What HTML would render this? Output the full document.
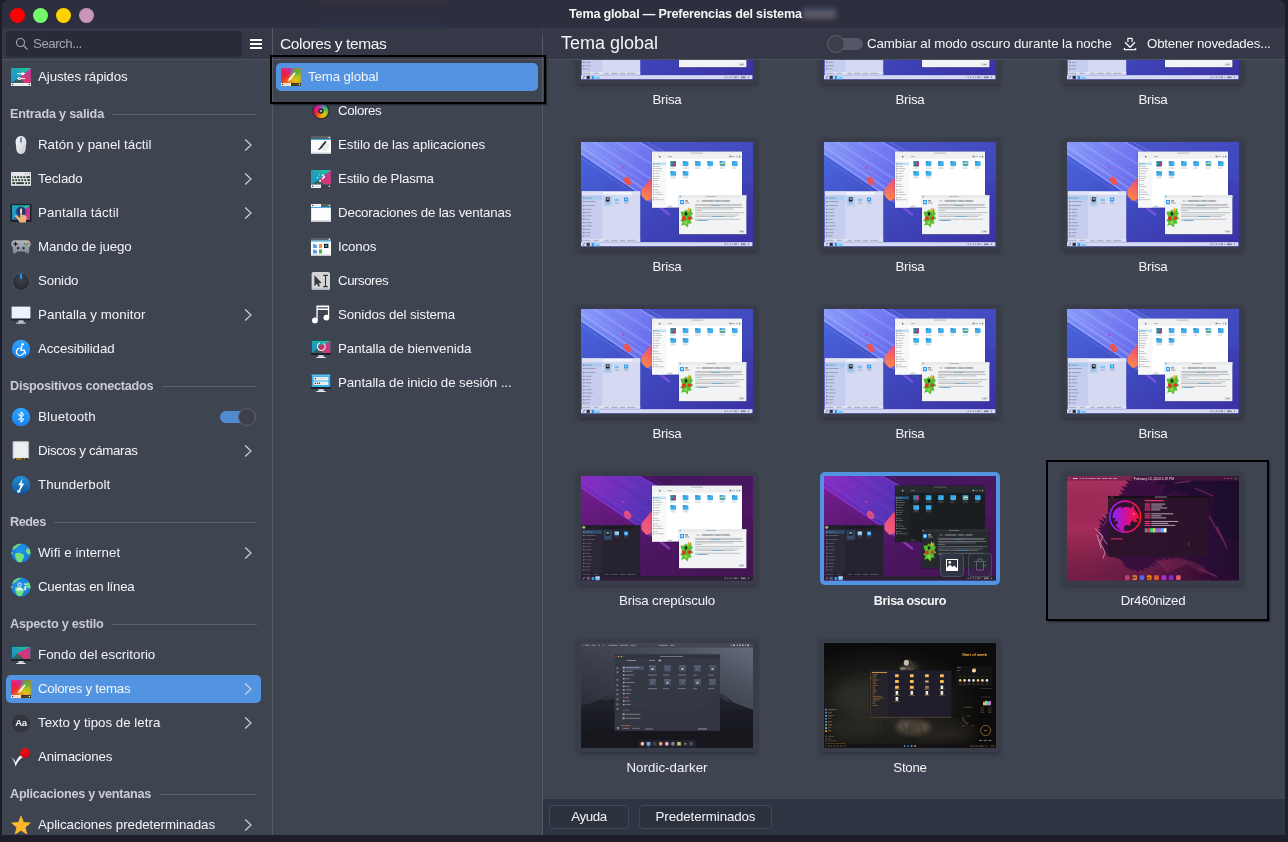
<!DOCTYPE html>
<html lang="es"><head><meta charset="utf-8"><title>Tema global — Preferencias del sistema</title>
<style>
*{box-sizing:border-box;margin:0;padding:0}
html,body{width:1288px;height:842px;overflow:hidden;background:#1e1d2a;font-family:"Liberation Sans",sans-serif;color:#f3f4f6;font-size:13.3px}
i,b{font-style:normal;font-weight:normal;display:block}
.t{white-space:nowrap;display:inline-block}
#desk{position:absolute;left:0;top:0;width:1288px;height:842px;background:#1e1d2a}
#win{will-change:transform;position:absolute;left:2px;top:0;width:1283px;height:835px;background:#3f4451;border-radius:8px 8px 0 0;overflow:hidden}
#wi{position:absolute;left:-2px;top:0;width:1285px;height:835px}
#tb{position:absolute;left:0;top:0;width:1285px;height:27px;background:#2d2f3e;z-index:3;box-shadow:0 1px 0 #2f3240}
.wb{position:absolute;top:8px;margin-left:2px;width:15px;height:15px;border-radius:50%}
#title{position:absolute;left:569px;top:7px;font-weight:bold;font-size:12.6px;color:#f5f5f7}
#side{position:absolute;left:0;top:28px;width:272px;height:807px;background:#3f4451}
#side:before,#mid:before,#mhdr{content:"";position:absolute;left:0;top:0;height:31px;background:#353846}
#side:before,#mid:before{width:100%}
#search{position:absolute;left:6px;top:3px;width:236px;height:26px;background:#282c38;border-radius:4px}
#search svg{position:absolute;left:9px;top:6px}
#stext{position:absolute;left:27px;top:5px;color:#a4a7b1}
#burger{position:absolute;left:250px;top:11px;width:12px}
#burger i{height:2px;background:#fff;margin-bottom:2px}
.hsep{position:absolute;height:1px;background:#50545f}
.si,.mi{position:absolute;left:6px;width:255px;height:28px;margin-top:3px;border-radius:5px}
.si.sel,.mi.sel{background:#5294e2}
.si .ic{position:absolute;left:4px;top:3px;width:22px;height:22px}
.si .t{position:absolute;left:32px;top:6px}
.chev{position:absolute;left:238px;top:7px}
.sh{position:absolute;left:0;width:272px;height:34px}
.sh .t{position:absolute;left:10px;top:12.5px;font-weight:bold;font-size:12.7px;color:#c9ccd3}
.sh i{position:absolute;top:20px;height:1px;right:15px;background:#5d616c}
.sw{position:absolute;width:36px;height:18px}
.sw:before{content:"";position:absolute;left:0;top:3px;width:36px;height:12px;border-radius:6px;background:#545866}
.sw b{position:absolute;top:0;width:18px;height:18px;border-radius:50%;background:#3c404d;border:1px solid #5b5f6d}
.sw.off b{left:0}
.sw.on b{right:0}
.sw.on:before{background:#4f8bd3}
.si .sw{left:214px;top:5px}
#mid{position:absolute;left:273px;top:28px;width:269px;height:807px;background:#3f4451}
.mh .t{position:absolute;left:7px;top:7px;font-size:15.5px}
.mi{left:3px;width:262px}
.mi .ic{position:absolute;left:34px;top:3px;width:22px;height:22px}
.mi .t{position:absolute;left:62px;top:6px}
.mi.sel .ic{left:4px}
.mi.sel .t{left:32px}
#vs1,#vs2{position:absolute;width:1px;background:#565a66}
#vs1{left:272px;top:28px;height:807px}
#vs2{left:542px;top:36px;height:799px}
#main{position:absolute;left:543px;top:28px;width:742px;height:807px;background:#3f4451;overflow:hidden}
#mhdr{width:742px}
#h1{position:absolute;left:18px;top:5px;font-size:18px}
#nsw{left:284px;top:7px}
#nlabel{position:absolute;left:324px;top:8px}
#dl{position:absolute;left:580px;top:9px}
#getnew{position:absolute;left:604px;top:8px}
#grid{position:absolute;left:0;top:32px;width:742px;height:739px;overflow:hidden}
.card{position:absolute;width:180px;height:112.6px;border-radius:3px;background:#393d4a;padding:4px;box-shadow:0 2px 5px rgba(0,0,0,.28)}
.card svg{display:block}
.card.csel{background:#5294e2;box-shadow:none;border-radius:5px}
.lbl{position:absolute;width:244px;height:18px;text-align:center;line-height:18px}
.lbl.b{font-weight:bold;font-size:12.6px}
#foot{position:absolute;left:0;top:771px;width:742px;height:36px;background:#2f3442}
.btn{position:absolute;top:6px;height:24px;border:1px solid #414758;border-radius:4px;background:#2c313e;text-align:center;line-height:22px}
.anno{position:absolute;border:2px solid #000}
.card{position:absolute}
.ov{position:absolute;top:81px;width:24px;height:24px;border-radius:4px;background:#2f3442;border:1px solid #4a4f60}
.ov svg{position:absolute;left:5px;top:5px}
.ov.dis{background:rgba(47,52,66,.45);border-color:rgba(120,125,145,.35)}
.ov.dis svg{opacity:.35;top:4px}
.smg{position:absolute;filter:blur(2.5px);opacity:.55}
#tb{overflow:hidden}
.anno{box-shadow:1.5px 1.5px 1.5px rgba(30,32,44,.75)}

</style></head><body>
<div id="desk"></div>
<div id="win"><div id="wi">
<div id="tb"><i class="wb" style="left:8px;background:#fe0000"></i><i class="wb" style="left:31px;background:#74fb6c"></i><i class="wb" style="left:54px;background:#fdd400"></i><i class="wb" style="left:77px;background:#c795b8"></i><i class="smg" style="left:803px;top:8px;width:33px;height:11px;background:linear-gradient(#4a5a86,#8a8a96 55%,#7a6a66)"></i><i class="smg" style="left:318px;top:-3px;width:130px;height:5px;background:#7a4a30;opacity:.16"></i><i class="smg" style="left:318px;top:25px;width:130px;height:5px;background:#3a5aa0;opacity:.2"></i><span id="title" class="t" style="letter-spacing:-0.188px">Tema global — Preferencias del sistema</span></div>
<div id="side">
<div id="search"><svg width="14" height="14" viewBox="0 0 14 14"><circle cx="5.5" cy="5.5" r="4" fill="none" stroke="#a9acb6" stroke-width="1.1"/><path d="M8.5 8.5 12.6 12.6" stroke="#a9acb6" stroke-width="1.1"/></svg><span class="t" id="stext" style="letter-spacing:-0.491px">Search...</span></div>
<div id="burger"><i></i><i></i><i></i></div>
<div class="hsep" style="left:0;width:270px;top:31px"></div>
<div class="si" style="top:32px"><span class="ic"><svg width="22" height="22" viewBox="0 0 22 22"><defs><linearGradient id="pg1" x1="0" y1="1" x2="1" y2="0"><stop offset="0" stop-color="#1d8fd0"/><stop offset="0.55" stop-color="#1fa5b4"/><stop offset="1" stop-color="#1bd08a"/></linearGradient><linearGradient id="pk2" x1="0" y1="1" x2="1" y2="0"><stop offset="0" stop-color="#e0385e"/><stop offset="1" stop-color="#b43a9e"/></linearGradient></defs><rect x="1" y="2" width="20" height="15" fill="url(#pg1)"/><path d="M1 17L9.5 11.5L17.4 17Z" fill="#35615f"/><path d="M21 2L9.5 11.5L14.200000000000001 17L21 17Z" fill="url(#pk2)"/><rect x="1" y="17" width="20" height="3" fill="#f4f4f4"/><circle cx="2.6" cy="18.5" r="0.7" fill="#333"/><circle cx="19.4" cy="18.5" r="0.7" fill="#333"/><rect x="4.5" y="18.2" width="13" height="0.5" fill="#d9d9d9"/><rect x="7" y="7.2" width="8" height="1" fill="#fff"/><circle cx="12.6" cy="7.7" r="1.5" fill="#fff"/><rect x="7" y="12.1" width="8" height="1" fill="#fff"/><circle cx="9.4" cy="12.6" r="1.5" fill="#fff"/><circle cx="9.4" cy="12.6" r="0.7" fill="#e0294a"/></svg></span><span class="t" style="letter-spacing:-0.095px">Ajustes rápidos</span></div>
<div class="sh" style="top:66px"><span class="t" style="letter-spacing:-0.207px">Entrada y salida</span><i style="left:112px"></i></div>
<div class="si" style="top:100px"><span class="ic"><svg width="22" height="22" viewBox="0 0 22 22"><defs><linearGradient id="m3" x1="0" y1="0" x2="1" y2="1"><stop offset="0" stop-color="#fbfbfc"/><stop offset="1" stop-color="#c3c7cc"/></linearGradient></defs><path d="M11 2C7.4 2 5.6 5 5.6 8.5C5.6 10.5 6.2 11.5 6.2 13.5C6.2 17.5 8 20 11 20C14 20 15.8 17.5 15.8 13.5C15.8 11.5 16.4 10.5 16.4 8.5C16.4 5 14.6 2 11 2Z" fill="url(#m3)"/><rect x="10.2" y="3.2" width="1.6" height="5.6" rx="0.8" fill="#3b7fb8"/></svg></span><span class="t" style="letter-spacing:0.02px">Ratón y panel táctil</span><svg class="chev" width="9" height="14" viewBox="0 0 9 14"><path d="M1.2 1.5 7 7 1.2 12.5" fill="none" stroke="#cfd2d9" stroke-width="1.2"/></svg></div>
<div class="si" style="top:134px"><span class="ic"><svg width="22" height="22" viewBox="0 0 22 22"><rect x="1" y="4" width="20" height="14" rx="0.8" fill="#e3e5e7"/><rect x="1" y="17" width="20" height="1" fill="#c4c7ca"/><circle cx="15.4" cy="5.7" r="0.55" fill="#1bc98a"/><circle cx="17.4" cy="5.7" r="0.55" fill="#1bc98a"/><circle cx="19.4" cy="5.7" r="0.55" fill="#1bc98a"/><rect x="2.3" y="8.2" width="0.8" height="1.9" fill="#2c3a37"/><rect x="4.3" y="8.2" width="1.8" height="1.9" fill="#2c3a37"/><rect x="7.3" y="8.2" width="1.8" height="1.9" fill="#2c3a37"/><rect x="10.3" y="8.2" width="1.8" height="1.9" fill="#2c3a37"/><rect x="13.3" y="8.2" width="1.8" height="1.9" fill="#2c3a37"/><rect x="16.3" y="8.2" width="3.6" height="1.9" fill="#2c3a37"/><rect x="2.3" y="11.2" width="1.8" height="1.9" fill="#2c3a37"/><rect x="5.3" y="11.2" width="1.8" height="1.9" fill="#2c3a37"/><rect x="8.3" y="11.2" width="1.8" height="1.9" fill="#2c3a37"/><rect x="11.3" y="11.2" width="1.8" height="1.9" fill="#2c3a37"/><rect x="14.3" y="11.2" width="1.8" height="1.9" fill="#2c3a37"/><rect x="17.3" y="11.2" width="2.6" height="1.9" fill="#2c3a37"/><rect x="2.3" y="14.2" width="2.8" height="1.9" fill="#2c3a37"/><rect x="6.3" y="14.2" width="7.6" height="1.9" fill="#2c3a37"/><rect x="15.2" y="14.2" width="1.8" height="1.9" fill="#2c3a37"/><rect x="18.1" y="14.2" width="1.8" height="1.9" fill="#2c3a37"/></svg></span><span class="t" style="letter-spacing:-0.192px">Teclado</span><svg class="chev" width="9" height="14" viewBox="0 0 9 14"><path d="M1.2 1.5 7 7 1.2 12.5" fill="none" stroke="#cfd2d9" stroke-width="1.2"/></svg></div>
<div class="si" style="top:168px"><span class="ic"><svg width="22" height="22" viewBox="0 0 22 22"><rect x="0.5" y="2" width="21" height="18" rx="1.2" fill="#1d2127"/><defs><linearGradient id="pg4" x1="0" y1="1" x2="1" y2="0"><stop offset="0" stop-color="#1d8fd0"/><stop offset="0.55" stop-color="#1fa5b4"/><stop offset="1" stop-color="#1bd08a"/></linearGradient><linearGradient id="pk5" x1="0" y1="1" x2="1" y2="0"><stop offset="0" stop-color="#e0385e"/><stop offset="1" stop-color="#b43a9e"/></linearGradient></defs><rect x="2" y="3.2" width="18" height="14.6" fill="url(#pg4)"/><path d="M2 17.8L9 13L16.759999999999998 17.8Z" fill="#35615f"/><path d="M20 3.2L9 13L13.88 17.8L20 17.8Z" fill="url(#pk5)"/><circle cx="11" cy="9.5" r="4.8" fill="#1f3a78"/><circle cx="11" cy="9.5" r="4.8" fill="none" stroke="#2a56a8" stroke-width="0.8"/><path d="M10.2 7.4c0-1.2 1.7-1.2 1.7 0V12.6l3.3 0.9c1.2 0.4 1.5 1 1.4 2.2L15.9 20.6H9.6C8.4 18 6.6 16 4.9 14.6C4.4 13.6 5.6 13 6.6 13.6L10.2 16Z" fill="#f2b27c"/><path d="M10.2 7.4c0-1.2 1.7-1.2 1.7 0V11h-1.7Z" fill="#fbd9b5"/></svg></span><span class="t" style="letter-spacing:0.114px">Pantalla táctil</span><svg class="chev" width="9" height="14" viewBox="0 0 9 14"><path d="M1.2 1.5 7 7 1.2 12.5" fill="none" stroke="#cfd2d9" stroke-width="1.2"/></svg></div>
<div class="si" style="top:202px"><span class="ic"><svg width="22" height="22" viewBox="0 0 22 22"><defs><linearGradient id="gp6" x1="0" y1="0" x2="0" y2="1"><stop offset="0" stop-color="#b3b8c0"/><stop offset="1" stop-color="#7d828c"/></linearGradient></defs><path d="M4.6 4.2C2.6 4.2 1.2 6 1.2 8.2C1.2 10 2.6 10.6 2.8 12L3 16.6C3 17.6 4 17.8 4.8 17.4L7.8 15.6H14.2L17.2 17.4C18 17.8 19 17.6 19 16.6L19.2 12C19.4 10.6 20.8 10 20.8 8.2C20.8 6 19.4 4.2 17.4 4.2Z" fill="url(#gp6)"/><path d="M4.9 5.8h1.2v1.5h1.5v1.2H6.1v1.5H4.9V8.5H3.4V7.3h1.5Z" fill="#1c1e22"/><circle cx="16.2" cy="6.2" r="0.95" fill="#f5c431"/><circle cx="14.7" cy="7.7" r="0.95" fill="#3a86e8"/><circle cx="17.7" cy="7.7" r="0.95" fill="#e8453c"/><circle cx="16.2" cy="9.2" r="0.95" fill="#3cba54"/><circle cx="8" cy="12.2" r="1.1" fill="#1c1e22"/><circle cx="13.6" cy="12.2" r="1.1" fill="#1c1e22"/></svg></span><span class="t" style="letter-spacing:-0.134px">Mando de juego</span></div>
<div class="si" style="top:236px"><span class="ic"><svg width="22" height="22" viewBox="0 0 22 22"><defs><radialGradient id="sd7" cx="0.5" cy="0.35" r="0.7"><stop offset="0" stop-color="#3d434c"/><stop offset="1" stop-color="#23272d"/></radialGradient></defs><circle cx="11" cy="11.3" r="9.2" fill="none" stroke="#565c67" stroke-width="1.2" stroke-dasharray="1 2.2" opacity=".75"/><circle cx="11" cy="12" r="7.8" fill="url(#sd7)"/><rect x="10" y="3.6" width="2" height="5.4" rx="1" fill="#1e96ff"/></svg></span><span class="t" style="letter-spacing:-0.184px">Sonido</span></div>
<div class="si" style="top:270px"><span class="ic"><svg width="22" height="22" viewBox="0 0 22 22"><rect x="1" y="2" width="20" height="14.4" rx="0.6" fill="#1f2328"/><rect x="1.6" y="2.6" width="18.8" height="11.8" fill="#f4f9ff"/><rect x="1.6" y="2.6" width="18.8" height="11.8" fill="#d9ecfb" opacity=".35"/><rect x="8.4" y="16.4" width="5.2" height="2.2" fill="#c9cdd2"/><rect x="6.4" y="18.6" width="9.2" height="1" fill="#e6e8ea"/></svg></span><span class="t" style="letter-spacing:0.059px">Pantalla y monitor</span><svg class="chev" width="9" height="14" viewBox="0 0 9 14"><path d="M1.2 1.5 7 7 1.2 12.5" fill="none" stroke="#cfd2d9" stroke-width="1.2"/></svg></div>
<div class="si" style="top:304px"><span class="ic"><svg width="22" height="22" viewBox="0 0 22 22"><defs><linearGradient id="ac8" x1="0" y1="0" x2="0" y2="1"><stop offset="0" stop-color="#2ca4ff"/><stop offset="1" stop-color="#1784f2"/></linearGradient></defs><circle cx="11" cy="11" r="9.2" fill="url(#ac8)"/><circle cx="12.6" cy="6.3" r="1.25" fill="#fff"/><path d="M11.6 8.2L10.9 12.2H14.2L15.3 15.6" fill="none" stroke="#fff" stroke-width="1.5" stroke-linejoin="round" stroke-linecap="round"/><path d="M9.2 10.2A3.7 3.7 0 1 0 13.6 15" fill="none" stroke="#fff" stroke-width="1.2" stroke-linecap="round"/></svg></span><span class="t" style="letter-spacing:-0.085px">Accesibilidad</span></div>
<div class="sh" style="top:338px"><span class="t" style="letter-spacing:-0.268px">Dispositivos conectados</span><i style="left:162px"></i></div>
<div class="si" style="top:372px"><span class="ic"><svg width="22" height="22" viewBox="0 0 22 22"><defs><linearGradient id="bt9" x1="0" y1="0" x2="0" y2="1"><stop offset="0" stop-color="#2ca4ff"/><stop offset="1" stop-color="#1784f2"/></linearGradient></defs><circle cx="11" cy="11" r="9.2" fill="url(#bt9)"/><path d="M8.2 7.8L13.6 13.4L11 16V6L13.6 8.6L8.2 14.2" fill="none" stroke="#e8f4ff" stroke-width="1.1" stroke-linejoin="round"/></svg></span><span class="t" style="letter-spacing:0.168px">Bluetooth</span><span class="sw on"><b></b></span></div>
<div class="si" style="top:406px"><span class="ic"><svg width="22" height="22" viewBox="0 0 22 22"><rect x="3" y="1.6" width="15.6" height="17" rx="0.6" fill="#e9eaeb"/><rect x="3" y="1.6" width="15.6" height="17" rx="0.6" fill="none" stroke="#b9bcc0" stroke-width="0.8"/><rect x="5" y="3.4" width="11.6" height="12.6" rx="2.4" fill="#eeeff0"/><rect x="5" y="18" width="12.8" height="2" fill="#2a2c30"/><rect x="6" y="18.5" width="6" height="1" fill="#f5b800"/><rect x="13.6" y="18.5" width="1.6" height="1" fill="#f5b800"/></svg></span><span class="t" style="letter-spacing:-0.339px">Discos y cámaras</span><svg class="chev" width="9" height="14" viewBox="0 0 9 14"><path d="M1.2 1.5 7 7 1.2 12.5" fill="none" stroke="#cfd2d9" stroke-width="1.2"/></svg></div>
<div class="si" style="top:440px"><span class="ic"><svg width="22" height="22" viewBox="0 0 22 22"><defs><linearGradient id="tb10" x1="0" y1="0" x2="0" y2="1"><stop offset="0" stop-color="#2191d8"/><stop offset="1" stop-color="#10549a"/></linearGradient></defs><circle cx="11" cy="11" r="9.2" fill="url(#tb10)"/><path d="M12.9 4.2L8.2 11.2H10.8L8.6 16.4L7.2 15.6L7.6 19L11 17.8L9.8 17.1L14.2 9.6H11.4Z" fill="#fff"/></svg></span><span class="t" style="letter-spacing:0.121px">Thunderbolt</span></div>
<div class="sh" style="top:474px"><span class="t" style="letter-spacing:-0.459px">Redes</span><i style="left:54px"></i></div>
<div class="si" style="top:508px"><span class="ic"><svg width="22" height="22" viewBox="0 0 22 22"><defs><radialGradient id="gl11" cx="0.45" cy="0.4" r="0.65"><stop offset="0" stop-color="#2196f3"/><stop offset="1" stop-color="#1976d2"/></radialGradient><clipPath id="gc12"><circle cx="11" cy="11" r="9.6"/></clipPath></defs><circle cx="11" cy="11" r="9.6" fill="url(#gl11)"/><g clip-path="url(#gc12)" fill="#6fe07c"><path d="M2 6C4 2.5 8 1 12 1.6C10 3.6 8.5 3.2 7 5C5.6 6.6 4.4 6.4 2.4 8.4Z"/><path d="M5.2 11.6C7 10.4 9.6 10.6 11.6 11.6C13.4 12.6 14.8 13.2 14 15C13.2 16.8 12.6 18.6 10.8 20.6C8.6 20.8 6.4 18.8 5.8 16.4C5.4 14.8 4.6 13.2 5.2 11.6Z"/><path d="M17.2 6.4C18.8 6 20.6 7.6 21 10.2C21 12 20.2 13.2 18.6 12.4C17 11.6 15.6 9.8 16 8Z"/><path d="M1.2 9.6C2.4 9.8 3.2 11 2.8 12.2L1.2 12.4Z"/></g></svg></span><span class="t" style="letter-spacing:0.067px">Wifi e internet</span><svg class="chev" width="9" height="14" viewBox="0 0 9 14"><path d="M1.2 1.5 7 7 1.2 12.5" fill="none" stroke="#cfd2d9" stroke-width="1.2"/></svg></div>
<div class="si" style="top:542px"><span class="ic"><svg width="22" height="22" viewBox="0 0 22 22"><defs><radialGradient id="gl13" cx="0.45" cy="0.4" r="0.65"><stop offset="0" stop-color="#2196f3"/><stop offset="1" stop-color="#1976d2"/></radialGradient><clipPath id="gc14"><circle cx="11" cy="11" r="9.6"/></clipPath></defs><circle cx="11" cy="11" r="9.6" fill="url(#gl13)"/><g clip-path="url(#gc14)" fill="#6fe07c"><path d="M2 6C4 2.5 8 1 12 1.6C10 3.6 8.5 3.2 7 5C5.6 6.6 4.4 6.4 2.4 8.4Z"/><path d="M5.2 11.6C7 10.4 9.6 10.6 11.6 11.6C13.4 12.6 14.8 13.2 14 15C13.2 16.8 12.6 18.6 10.8 20.6C8.6 20.8 6.4 18.8 5.8 16.4C5.4 14.8 4.6 13.2 5.2 11.6Z"/><path d="M17.2 6.4C18.8 6 20.6 7.6 21 10.2C21 12 20.2 13.2 18.6 12.4C17 11.6 15.6 9.8 16 8Z"/><path d="M1.2 9.6C2.4 9.8 3.2 11 2.8 12.2L1.2 12.4Z"/></g><circle cx="9.6" cy="8.6" r="1.7" fill="none" stroke="#e9f2ff" stroke-width="1"/><path d="M6.4 14.4C6.4 12.4 7.6 11.6 9.6 11.6C11.6 11.6 12.8 12.4 12.8 14.4Z" fill="#e9f2ff"/><rect x="14.4" y="7.4" width="1.8" height="1.6" fill="#e9f2ff"/><rect x="14.4" y="10" width="1.8" height="4.4" fill="#e9f2ff"/></svg></span><span class="t" style="letter-spacing:-0.253px">Cuentas en línea</span></div>
<div class="sh" style="top:576px"><span class="t" style="letter-spacing:-0.238px">Aspecto y estilo</span><i style="left:112px"></i></div>
<div class="si" style="top:610px"><span class="ic"><svg width="22" height="22" viewBox="0 0 22 22"><rect x="1" y="2" width="20" height="15" rx="0.6" fill="#1f2328"/><defs><linearGradient id="pg15" x1="0" y1="1" x2="1" y2="0"><stop offset="0" stop-color="#1d8fd0"/><stop offset="0.55" stop-color="#1fa5b4"/><stop offset="1" stop-color="#1bd08a"/></linearGradient><linearGradient id="pk16" x1="0" y1="1" x2="1" y2="0"><stop offset="0" stop-color="#e0385e"/><stop offset="1" stop-color="#b43a9e"/></linearGradient></defs><rect x="1.6" y="2.6" width="18.8" height="12.4" fill="url(#pg15)"/><path d="M1.6 15.0L7.2 9.4L17.016000000000002 15.0Z" fill="#35615f"/><path d="M20.400000000000002 2.6L7.2 9.4L14.008000000000001 15.0L20.400000000000002 15.0Z" fill="url(#pk16)"/><rect x="8.4" y="17" width="5.2" height="2" fill="#c9cdd2"/><rect x="6.4" y="19" width="9.2" height="1" fill="#e6e8ea"/></svg></span><span class="t" style="letter-spacing:0.026px">Fondo del escritorio</span></div>
<div class="si sel" style="top:644px"><span class="ic"><svg width="22" height="22" viewBox="0 0 22 22"><defs><filter id="bl17" x="-10%" y="-10%" width="120%" height="120%"><feGaussianBlur stdDeviation="1.3"/></filter><clipPath id="bl17c"><rect x="1" y="2" width="20" height="15"/></clipPath></defs><g clip-path="url(#bl17c)"><g filter="url(#bl17)"><rect x="-2" y="-1" width="26" height="21" fill="#c84a5a"/><path d="M11 9.5L1 2L7 2Z" fill="#e9207a" stroke="#e9207a" stroke-width="0.3"/><path d="M11 9.5L7 2L13 2Z" fill="#b02ab0" stroke="#b02ab0" stroke-width="0.3"/><path d="M11 9.5L13 2L21 2Z" fill="#6a9a4a" stroke="#6a9a4a" stroke-width="0.3"/><path d="M11 9.5L21 2L21 9Z" fill="#62b536" stroke="#62b536" stroke-width="0.3"/><path d="M11 9.5L21 9L21 17Z" fill="#a8c81e" stroke="#a8c81e" stroke-width="0.3"/><path d="M11 9.5L21 17L14 17Z" fill="#e6c80c" stroke="#e6c80c" stroke-width="0.3"/><path d="M11 9.5L14 17L7 17Z" fill="#f4a010" stroke="#f4a010" stroke-width="0.3"/><path d="M11 9.5L7 17L1 17Z" fill="#f2601a" stroke="#f2601a" stroke-width="0.3"/><path d="M11 9.5L1 17L1 9Z" fill="#ee2a2e" stroke="#ee2a2e" stroke-width="0.3"/><path d="M11 9.5L1 9L1 2Z" fill="#ec1f55" stroke="#ec1f55" stroke-width="0.3"/></g></g><rect x="1" y="17" width="10" height="3" fill="#fbe4c6"/><rect x="11" y="17" width="10" height="3" fill="#3c3a22"/><circle cx="2.6" cy="18.5" r="0.7" fill="#333"/><circle cx="19.4" cy="18.5" r="0.7" fill="#fff"/><rect x="13" y="18.2" width="5" height="0.5" fill="#5e5a3a"/><rect x="4.4" y="18.2" width="5" height="0.5" fill="#f1cfa6"/><path d="M14.7 7.3L11.6 10.9" stroke="#fff" stroke-width="1.5" stroke-linecap="round"/><path d="M11.1 10.2L12.6 11.5L10.2 14.2L7.9 15.1L8.7 12.9Z" fill="#fff"/></svg></span><span class="t" style="letter-spacing:-0.252px">Colores y temas</span><svg class="chev" width="9" height="14" viewBox="0 0 9 14"><path d="M1.2 1.5 7 7 1.2 12.5" fill="none" stroke="#cfd2d9" stroke-width="1.2"/></svg></div>
<div class="si" style="top:678px"><span class="ic"><svg width="22" height="22" viewBox="0 0 22 22"><circle cx="11" cy="11.4" r="9" fill="#32353b"/><circle cx="11" cy="11.4" r="8.6" fill="#33363d"/><text x="11" y="14.3" text-anchor="middle" font-family="Liberation Sans,sans-serif" font-weight="bold" font-size="9.6" letter-spacing="-0.3" fill="#f0f0f0">Aa</text></svg></span><span class="t" style="letter-spacing:0.016px">Texto y tipos de letra</span><svg class="chev" width="9" height="14" viewBox="0 0 9 14"><path d="M1.2 1.5 7 7 1.2 12.5" fill="none" stroke="#cfd2d9" stroke-width="1.2"/></svg></div>
<div class="si" style="top:712px"><span class="ic"><svg width="22" height="22" viewBox="0 0 22 22"><defs><radialGradient id="rb18" cx="0.4" cy="0.35" r="0.7"><stop offset="0" stop-color="#f2101c"/><stop offset="1" stop-color="#cc000c"/></radialGradient></defs><path d="M1.6 11.8C3.4 12.6 4.6 14 5.6 16.4C7.2 12.4 9.6 9.6 13 8.2L14.4 10.6C10.8 12 7.8 15 5.6 20.4C4.6 16.6 3.6 13.8 1.6 11.8Z" fill="#fff"/><circle cx="15.2" cy="7" r="5.1" fill="url(#rb18)"/></svg></span><span class="t" style="letter-spacing:-0.167px">Animaciones</span></div>
<div class="sh" style="top:746px"><span class="t" style="letter-spacing:-0.278px">Aplicaciones y ventanas</span><i style="left:160px"></i></div>
<div class="si" style="top:780px"><span class="ic"><svg width="22" height="22" viewBox="0 0 22 22"><polygon points="11.00,2.20 13.53,8.52 20.32,8.97 15.09,13.33 16.76,19.93 11.00,16.30 5.24,19.93 6.91,13.33 1.68,8.97 8.47,8.52" fill="#fdb92b" stroke="#fdb92b" stroke-width="0.8" stroke-linejoin="round"/></svg></span><span class="t" style="letter-spacing:-0.041px">Aplicaciones predeterminadas</span><svg class="chev" width="9" height="14" viewBox="0 0 9 14"><path d="M1.2 1.5 7 7 1.2 12.5" fill="none" stroke="#cfd2d9" stroke-width="1.2"/></svg></div>
</div>
<div id="mid">
<div class="mh"><span class="t" id="mhead" style="letter-spacing:-0.366px">Colores y temas</span></div>
<div class="hsep" style="left:0;width:270px;top:31px"></div>
<div class="mi sel" style="top:32px"><span class="ic"><svg width="22" height="22" viewBox="0 0 22 22"><defs><filter id="bl17" x="-10%" y="-10%" width="120%" height="120%"><feGaussianBlur stdDeviation="1.3"/></filter><clipPath id="bl17c"><rect x="1" y="2" width="20" height="15"/></clipPath></defs><g clip-path="url(#bl17c)"><g filter="url(#bl17)"><rect x="-2" y="-1" width="26" height="21" fill="#c84a5a"/><path d="M11 9.5L1 2L7 2Z" fill="#e9207a" stroke="#e9207a" stroke-width="0.3"/><path d="M11 9.5L7 2L13 2Z" fill="#b02ab0" stroke="#b02ab0" stroke-width="0.3"/><path d="M11 9.5L13 2L21 2Z" fill="#6a9a4a" stroke="#6a9a4a" stroke-width="0.3"/><path d="M11 9.5L21 2L21 9Z" fill="#62b536" stroke="#62b536" stroke-width="0.3"/><path d="M11 9.5L21 9L21 17Z" fill="#a8c81e" stroke="#a8c81e" stroke-width="0.3"/><path d="M11 9.5L21 17L14 17Z" fill="#e6c80c" stroke="#e6c80c" stroke-width="0.3"/><path d="M11 9.5L14 17L7 17Z" fill="#f4a010" stroke="#f4a010" stroke-width="0.3"/><path d="M11 9.5L7 17L1 17Z" fill="#f2601a" stroke="#f2601a" stroke-width="0.3"/><path d="M11 9.5L1 17L1 9Z" fill="#ee2a2e" stroke="#ee2a2e" stroke-width="0.3"/><path d="M11 9.5L1 9L1 2Z" fill="#ec1f55" stroke="#ec1f55" stroke-width="0.3"/></g></g><rect x="1" y="17" width="10" height="3" fill="#fbe4c6"/><rect x="11" y="17" width="10" height="3" fill="#3c3a22"/><circle cx="2.6" cy="18.5" r="0.7" fill="#333"/><circle cx="19.4" cy="18.5" r="0.7" fill="#fff"/><rect x="13" y="18.2" width="5" height="0.5" fill="#5e5a3a"/><rect x="4.4" y="18.2" width="5" height="0.5" fill="#f1cfa6"/><path d="M14.7 7.3L11.6 10.9" stroke="#fff" stroke-width="1.5" stroke-linecap="round"/><path d="M11.1 10.2L12.6 11.5L10.2 14.2L7.9 15.1L8.7 12.9Z" fill="#fff"/></svg></span><span class="t" style="letter-spacing:-0.128px">Tema global</span></div>
<div class="mi" style="top:66px"><span class="ic"><svg width="22" height="22" viewBox="0 0 22 22"><defs><filter id="wb19"><feGaussianBlur stdDeviation="0.9"/></filter><clipPath id="wb19c"><circle cx="11" cy="11" r="7.6"/></clipPath></defs><circle cx="11" cy="11" r="8.6" fill="#25272c"/><g clip-path="url(#wb19c)"><g filter="url(#wb19)"><path d="M11 11L8.53 3.39A8 8 0 0 1 13.47 3.39Z" fill="#a03ad0" stroke="#a03ad0" stroke-width="0.4"/><path d="M11 11L13.47 3.39A8 8 0 0 1 17.47 6.30Z" fill="#3aa0a0" stroke="#3aa0a0" stroke-width="0.4"/><path d="M11 11L17.47 6.30A8 8 0 0 1 19.00 11.00Z" fill="#4ab84a" stroke="#4ab84a" stroke-width="0.4"/><path d="M11 11L19.00 11.00A8 8 0 0 1 17.47 15.70Z" fill="#9acd20" stroke="#9acd20" stroke-width="0.4"/><path d="M11 11L17.47 15.70A8 8 0 0 1 13.47 18.61Z" fill="#e8d010" stroke="#e8d010" stroke-width="0.4"/><path d="M11 11L13.47 18.61A8 8 0 0 1 8.53 18.61Z" fill="#f8a010" stroke="#f8a010" stroke-width="0.4"/><path d="M11 11L8.53 18.61A8 8 0 0 1 4.53 15.70Z" fill="#f4581c" stroke="#f4581c" stroke-width="0.4"/><path d="M11 11L4.53 15.70A8 8 0 0 1 3.00 11.00Z" fill="#ee2035" stroke="#ee2035" stroke-width="0.4"/><path d="M11 11L3.00 11.00A8 8 0 0 1 4.53 6.30Z" fill="#ea1a6a" stroke="#ea1a6a" stroke-width="0.4"/><path d="M11 11L4.53 6.30A8 8 0 0 1 8.53 3.39Z" fill="#d020a0" stroke="#d020a0" stroke-width="0.4"/></g></g><circle cx="11" cy="11" r="2.7" fill="#2a2c31"/><circle cx="11" cy="11" r="1.1" fill="#bfc2c6"/></svg></span><span class="t" style="letter-spacing:-0.347px">Colores</span></div>
<div class="mi" style="top:100px"><span class="ic"><svg width="22" height="22" viewBox="0 0 22 22"><rect x="1" y="2" width="20" height="18" fill="#fcfcfc"/><rect x="1" y="2" width="20" height="3" fill="#5b6067"/><circle cx="19.4" cy="3.5" r="0.8" fill="#fff"/><rect x="1" y="5" width="20" height="1" fill="#3daee9"/><rect x="1" y="18.6" width="20" height="1.4" fill="#c8cacc"/><circle cx="14.5" cy="12.6" r="4.6" fill="#e9eaeb"/><path d="M15.4 8L11.4 13" stroke="#26282b" stroke-width="1.7" stroke-linecap="round"/><path d="M11.2 12.2L9 14.4L7.4 15.8L10 15.4L12.2 13.4Z" fill="#26282b"/></svg></span><span class="t" style="letter-spacing:-0.057px">Estilo de las aplicaciones</span></div>
<div class="mi" style="top:134px"><span class="ic"><svg width="22" height="22" viewBox="0 0 22 22"><defs><linearGradient id="pg20" x1="0" y1="1" x2="1" y2="0"><stop offset="0" stop-color="#1d8fd0"/><stop offset="0.55" stop-color="#1fa5b4"/><stop offset="1" stop-color="#1bd08a"/></linearGradient><linearGradient id="pk21" x1="0" y1="1" x2="1" y2="0"><stop offset="0" stop-color="#e0385e"/><stop offset="1" stop-color="#b43a9e"/></linearGradient></defs><rect x="1" y="2" width="20" height="14.6" fill="url(#pg20)"/><path d="M1 16.6L8.6 12L17.4 16.6Z" fill="#35615f"/><path d="M21 2L8.6 12L14.200000000000001 16.6L21 16.6Z" fill="url(#pk21)"/><rect x="1" y="16.6" width="10" height="3.4" fill="#f4f4f4"/><rect x="11" y="16.6" width="10" height="3.4" fill="#3a3e47"/><circle cx="2.7" cy="18.3" r="0.7" fill="#333"/><circle cx="19.3" cy="18.3" r="0.8" fill="#fff"/><rect x="4.4" y="18" width="5.4" height="0.5" fill="#d0d0d0"/><path d="M12 6.4L14.4 8.8L12 11.2" fill="none" stroke="#fff" stroke-width="1.3"/><rect x="9.2" y="12" width="1.8" height="1.8" fill="#fff" opacity=".9"/><circle cx="7.6" cy="9.6" r="0.7" fill="#fff"/><circle cx="9.4" cy="6.8" r="0.55" fill="#fff" opacity=".8"/></svg></span><span class="t" style="letter-spacing:-0.209px">Estilo de Plasma</span></div>
<div class="mi" style="top:168px"><span class="ic"><svg width="22" height="22" viewBox="0 0 22 22"><rect x="1" y="2" width="20" height="18" fill="#fdfdfd"/><rect x="11" y="2" width="10" height="3" fill="#5b6067"/><rect x="1" y="2" width="10" height="3" fill="#fcfcfc"/><circle cx="2.7" cy="3.5" r="0.7" fill="#333"/><rect x="4.4" y="3.2" width="5.4" height="0.5" fill="#ccc"/><circle cx="19.4" cy="3.5" r="0.8" fill="#fff"/><rect x="1" y="5" width="20" height="1" fill="#3daee9"/><rect x="1" y="18.4" width="20" height="1.6" fill="#c3c5c8"/><rect x="1" y="6" width="0.6" height="14" fill="#d8dadc"/><rect x="20.4" y="6" width="0.6" height="14" fill="#d8dadc"/></svg></span><span class="t" style="letter-spacing:-0.176px">Decoraciones de las ventanas</span></div>
<div class="mi" style="top:202px"><span class="ic"><svg width="22" height="22" viewBox="0 0 22 22"><rect x="1" y="2" width="20" height="18" fill="#fcfcfc"/><rect x="1" y="2" width="20" height="2.6" fill="#5b6067"/><circle cx="19.4" cy="3.3" r="0.8" fill="#fff"/><rect x="1" y="4.6" width="20" height="1" fill="#3daee9"/><rect x="1" y="18.6" width="20" height="1.4" fill="#c8cacc"/><path d="M3 8h1.6l0.6 0.8H7V12H3Z" fill="#5b9be8"/><rect x="9" y="8" width="3" height="4" fill="#f68b3c"/><rect x="14" y="7.8" width="4.4" height="4.2" fill="#1d2226"/><rect x="15.2" y="8.8" width="2" height="2.2" fill="#2aa5a0"/><path d="M3 13.4h1.6l0.6 0.8H7V17.4H3Z" fill="#5b9be8"/><rect x="9" y="13.4" width="3" height="4" fill="#46b83c"/></svg></span><span class="t" style="letter-spacing:-0.165px">Iconos</span></div>
<div class="mi" style="top:236px"><span class="ic"><svg width="22" height="22" viewBox="0 0 22 22"><rect x="1.6" y="2" width="18.4" height="18" rx="1.8" fill="#d3d5d7"/><rect x="1.6" y="18.4" width="18.4" height="1.6" rx="0.8" fill="#b4b7ba"/><path d="M4.4 5.2V16.2L7 13.8L8.4 16.8L10 16L8.7 13.2L11.8 13Z" fill="#3a3d40"/><path d="M13.2 5.4h1.6l0.7 0.5l0.7-0.5h1.6M13.2 16.6h1.6l0.7-0.5l0.7 0.5h1.6M15.5 5.9V16.1" fill="none" stroke="#2a2c2f" stroke-width="1.1"/></svg></span><span class="t" style="letter-spacing:-0.469px">Cursores</span></div>
<div class="mi" style="top:270px"><span class="ic"><svg width="22" height="22" viewBox="0 0 22 22"><path d="M6.4 1.6H19.2V13.4H17.9V6H7.7V16H6.4Z M7.7 3.2V4.6H17.9V3.2Z" fill="#fff" fill-rule="evenodd"/><circle cx="4.9" cy="16.4" r="2.9" fill="#fff"/><circle cx="16.4" cy="13.6" r="2.9" fill="#fff"/></svg></span><span class="t" style="letter-spacing:-0.1px">Sonidos del sistema</span></div>
<div class="mi" style="top:304px"><span class="ic"><svg width="22" height="22" viewBox="0 0 22 22"><rect x="1" y="2" width="20" height="15" rx="0.6" fill="#1f2328"/><defs><linearGradient id="pg22" x1="0" y1="1" x2="1" y2="0"><stop offset="0" stop-color="#1d8fd0"/><stop offset="0.55" stop-color="#1fa5b4"/><stop offset="1" stop-color="#1bd08a"/></linearGradient><linearGradient id="pk23" x1="0" y1="1" x2="1" y2="0"><stop offset="0" stop-color="#e0385e"/><stop offset="1" stop-color="#b43a9e"/></linearGradient></defs><rect x="1.6" y="2.6" width="18.8" height="12.4" fill="url(#pg22)"/><path d="M1.6 15.0L7.2 10.4L17.016000000000002 15.0Z" fill="#35615f"/><path d="M20.400000000000002 2.6L7.2 10.4L14.008000000000001 15.0L20.400000000000002 15.0Z" fill="url(#pk23)"/><path d="M13.6 5.4A3.9 3.9 0 1 1 10 4.9" fill="none" stroke="#f4f4f4" stroke-width="1.1"/><circle cx="11" cy="8.8" r="2.6" fill="#c2345a" opacity=".85"/><rect x="8.4" y="17" width="5.2" height="2" fill="#c9cdd2"/><rect x="6.4" y="19" width="9.2" height="1" fill="#e6e8ea"/></svg></span><span class="t" style="letter-spacing:-0.053px">Pantalla de bienvenida</span></div>
<div class="mi" style="top:338px"><span class="ic"><svg width="22" height="22" viewBox="0 0 22 22"><rect x="1" y="2" width="20" height="15" rx="0.6" fill="#1f2328"/><rect x="1.6" y="2.6" width="18.8" height="12.4" fill="#3daee9"/><rect x="1.6" y="2.6" width="18.8" height="1.2" fill="#6cc4f2"/><rect x="3.6" y="5" width="14.8" height="3.4" rx="0.4" fill="#eceeef"/><rect x="3.6" y="9.6" width="14.8" height="3.4" rx="0.4" fill="#eceeef"/><circle cx="5.4" cy="6.7" r="0.7" fill="#3a3d40"/><circle cx="5.4" cy="11.3" r="0.7" fill="#3a3d40"/><circle cx="7.4" cy="11.3" r="0.7" fill="#3a3d40"/><circle cx="9.4" cy="11.3" r="0.7" fill="#3a3d40"/><rect x="7" y="6.4" width="9" height="0.6" fill="#c9cccf"/><rect x="8.4" y="17" width="5.2" height="2" fill="#c9cdd2"/><rect x="6.4" y="19" width="9.2" height="1" fill="#e6e8ea"/></svg></span><span class="t" style="letter-spacing:-0.073px">Pantalla de inicio de sesión ...</span></div>
</div>
<div id="main">
<div id="grid">
<div class="card" style="left:34px;top:-89px"><svg width="172" height="104.6" viewBox="0 0 172 104" preserveAspectRatio="none"><defs><linearGradient id="w6a" x1="0" y1="0" x2="1" y2="1"><stop offset="0" stop-color="#4a68e2"/><stop offset="0.55" stop-color="#3f47bc"/><stop offset="1" stop-color="#3a30a2"/></linearGradient><linearGradient id="w6t" x1="0" y1="0" x2="1" y2="0.6"><stop offset="0.3" stop-color="#4a52c8"/><stop offset="1" stop-color="#3f47bc"/></linearGradient><linearGradient id="w6d" gradientUnits="userSpaceOnUse" x1="0" y1="0" x2="80" y2="52"><stop offset="0" stop-color="#8799f9"/><stop offset="0.75" stop-color="#6c70ee"/><stop offset="1" stop-color="#6c70ee" stop-opacity=".6"/></linearGradient><linearGradient id="w6o" x1="0.6" y1="0" x2="0.3" y2="1"><stop offset="0" stop-color="#e84a7c"/><stop offset="1" stop-color="#ff8a48"/></linearGradient><filter id="w6f" x="-5%" y="-5%" width="110%" height="110%"><feGaussianBlur stdDeviation="0.55"/></filter><filter id="w6g" x="-5%" y="-5%" width="110%" height="110%"><feGaussianBlur stdDeviation="1.6"/></filter><clipPath id="w6c"><rect width="172" height="104"/></clipPath></defs><rect width="172" height="104" fill="url(#w6a)"/><g clip-path="url(#w6c)"><path d="M50 -2H174V40L100 34Z" fill="url(#w6t)" filter="url(#w6g)"/><g filter="url(#w6f)"><path d="M-2 -2H56L100 22L72 52L56 50L-2 10.6Z" fill="url(#w6d)"/><path d="M-3 2.5L62 46" stroke="#b0bcff" stroke-width="2.2" opacity="0.35"/><path d="M-3 6.5L58 47" stroke="#6277ec" stroke-width="1.0" opacity="0.40"/><path d="M8 -3L72 38" stroke="#b0bcff" stroke-width="2.4" opacity="0.28"/><path d="M20 -3L80 34" stroke="#6277ec" stroke-width="1.2" opacity="0.35"/><path d="M30 -3L84 30" stroke="#b0bcff" stroke-width="2.0" opacity="0.25"/><path d="M40 -3L90 26" stroke="#6277ec" stroke-width="1" opacity="0.35"/><path d="M-3 -1L66 42" stroke="#b0bcff" stroke-width="1" opacity="0.25"/><path d="M53 -3L98 24" stroke="#a0b4ff" stroke-width="1.1" opacity="0.55"/><path d="M57 -3L101 22" stroke="#6277ec" stroke-width="0.8" opacity="0.40"/><path d="M60.5 -3L103 20.5" stroke="#a0b4ff" stroke-width="0.8" opacity="0.45"/><path d="M-3 9.6L57 49.6" stroke="#a0b4ff" stroke-width="1.0" opacity="0.75"/><path d="M-3 14L48 48" stroke="#a0b4ff" stroke-width="0.7" opacity="0.30"/><path d="M62 52L88 72" stroke="#8a58f0" stroke-width="2.4" opacity=".75" stroke-linecap="round"/><path d="M58 50L70 60" stroke="#a0b4ff" stroke-width="1" opacity=".5"/></g><circle cx="42.3" cy="25.5" r="1.25" fill="#c23cc0" opacity=".85"/><g filter="url(#w6f)"><ellipse cx="46.6" cy="38.8" rx="3" ry="4.5" transform="rotate(-38 46.6 38.8)" fill="#f0524e"/><path d="M44.6 37.6L49 41" stroke="#6c70ee" stroke-width="0.7" opacity=".7"/><path d="M60.4 47.6L69.4 36.4L75 37L75 54.6L65.6 58.6L60.8 54Z" fill="url(#w6o)"/></g></g><rect x="0.9" y="49.1" width="58.3" height="50" fill="#d5d9f1"/><rect x="0.9" y="49.1" width="20.3" height="50" fill="#c7cdee"/><rect x="0.9" y="49.1" width="58.3" height="3.6" fill="#dfe2f4"/><rect x="22" y="49.8" width="29" height="2.3" rx="0.5" fill="#f3f4fb"/><rect x="1.2" y="54" width="19.6" height="3.4" fill="#a9cdf2"/><rect x="2.2" y="55.1" width="1.3" height="1.3" fill="#5d6478" opacity=".85"/><rect x="4.6" y="55.35" width="7" height="0.8" fill="#5d6478" opacity=".55"/><rect x="2.2" y="58.6" width="1.3" height="1.3" fill="#5d6478" opacity=".85"/><rect x="4.6" y="58.85" width="10" height="0.8" fill="#5d6478" opacity=".55"/><rect x="2.2" y="62.6" width="1.3" height="1.3" fill="#5d6478" opacity=".85"/><rect x="4.6" y="62.85" width="9" height="0.8" fill="#5d6478" opacity=".55"/><rect x="2.2" y="66.2" width="1.3" height="1.3" fill="#5d6478" opacity=".85"/><rect x="4.6" y="66.45" width="6" height="0.8" fill="#5d6478" opacity=".55"/><rect x="2.2" y="69.60000000000001" width="1.3" height="1.3" fill="#5d6478" opacity=".85"/><rect x="4.6" y="69.85000000000001" width="5" height="0.8" fill="#5d6478" opacity=".55"/><rect x="2.2" y="72.80000000000001" width="1.3" height="1.3" fill="#5d6478" opacity=".85"/><rect x="4.6" y="73.05000000000001" width="6" height="0.8" fill="#5d6478" opacity=".55"/><rect x="2.2" y="76.2" width="1.3" height="1.3" fill="#5d6478" opacity=".85"/><rect x="4.6" y="76.45" width="4" height="0.8" fill="#5d6478" opacity=".55"/><rect x="2.2" y="79.60000000000001" width="1.3" height="1.3" fill="#5d6478" opacity=".85"/><rect x="4.6" y="79.85000000000001" width="6" height="0.8" fill="#5d6478" opacity=".55"/><rect x="2.2" y="82.80000000000001" width="1.3" height="1.3" fill="#5d6478" opacity=".85"/><rect x="4.6" y="83.05000000000001" width="7" height="0.8" fill="#5d6478" opacity=".55"/><rect x="2.2" y="86.2" width="1.3" height="1.3" fill="#5d6478" opacity=".85"/><rect x="4.6" y="86.45" width="5" height="0.8" fill="#5d6478" opacity=".55"/><rect x="2.2" y="89.60000000000001" width="1.3" height="1.3" fill="#5d6478" opacity=".85"/><rect x="4.6" y="89.85000000000001" width="5" height="0.8" fill="#5d6478" opacity=".55"/><rect x="2.2" y="92.80000000000001" width="1.3" height="1.3" fill="#5d6478" opacity=".85"/><rect x="4.6" y="93.05000000000001" width="4" height="0.8" fill="#5d6478" opacity=".55"/><rect x="22.5" y="54" width="8.6" height="9.8" fill="#a9cdf2" opacity=".8"/><rect x="24.8" y="55" width="3.8" height="4.2" fill="#1d1f24"/><rect x="25.6" y="55.8" width="2.2" height="1.6" fill="#aeb4bd"/><rect x="33.6" y="55.4" width="4.4" height="3.6" fill="#7cc4f0"/><rect x="33.6" y="55.4" width="4.4" height="0.9" fill="#d9ecfa"/><rect x="43" y="55.2" width="4.2" height="3.9" rx="0.5" fill="#2d9bf0"/><rect x="44.4" y="56.4" width="1.4" height="1.4" fill="#dff"/><rect x="24.4" y="60.4" width="4.6" height="0.7" fill="#5d6478" opacity=".5"/><rect x="33.6" y="60.4" width="4.6" height="0.7" fill="#5d6478" opacity=".5"/><rect x="43" y="60.4" width="4.6" height="0.7" fill="#5d6478" opacity=".5"/><rect x="0.9" y="96.4" width="58.3" height="2.7" fill="#dfe2f4"/><rect x="1.6" y="97.3" width="8" height="0.9" fill="#5d6478" opacity=".5"/><rect x="12.6" y="97.3" width="5" height="0.9" fill="#5d6478" opacity=".5"/><rect x="23.6" y="97.3" width="4" height="0.9" fill="#5d6478" opacity=".5"/><rect x="30" y="97.3" width="6.6" height="0.9" fill="#5d6478" opacity=".5"/><rect x="38.6" y="97.3" width="5.6" height="0.9" fill="#5d6478" opacity=".5"/><rect x="46" y="97.3" width="8.4" height="0.9" fill="#5d6478" opacity=".5"/><rect x="70.6" y="9.4" width="90.8" height="56.6" fill="#000" opacity=".18"/><rect x="71" y="9.7" width="90" height="55.5" fill="#ffffff"/><rect x="71" y="9.7" width="90" height="7" fill="#eff0f1"/><rect x="71" y="16.7" width="14.4" height="48.5" fill="#f7f8f8"/><rect x="110" y="10.6" width="12" height="0.8" fill="#6d7378" opacity=".5"/><rect x="78" y="13.8" width="1.4" height="1.6" fill="#6d7378"/><rect x="87" y="14.2" width="4" height="0.8" fill="#6d7378" opacity=".6"/><rect x="148.6" y="13.6" width="1.6" height="1.6" fill="#6d7378"/><rect x="151" y="14" width="2.6" height="0.8" fill="#6d7378" opacity=".6"/><rect x="155.6" y="13.8" width="1" height="1.4" fill="#6d7378" opacity=".7"/><rect x="158" y="13.8" width="1.2" height="1.4" fill="#6d7378"/><rect x="71.4" y="20.4" width="13.6" height="2.6" fill="#bfe0f6"/><rect x="72.2" y="21.2" width="1.1" height="1.1" fill="#6d7378" opacity=".8"/><rect x="74.2" y="21.4" width="4" height="0.7" fill="#6d7378" opacity=".5"/><rect x="72.2" y="23.7" width="1.1" height="1.1" fill="#6d7378" opacity=".8"/><rect x="74.2" y="23.9" width="5" height="0.7" fill="#6d7378" opacity=".5"/><rect x="72.2" y="25.9" width="1.1" height="1.1" fill="#6d7378" opacity=".8"/><rect x="74.2" y="26.099999999999998" width="7" height="0.7" fill="#6d7378" opacity=".5"/><rect x="72.2" y="28.3" width="1.1" height="1.1" fill="#6d7378" opacity=".8"/><rect x="74.2" y="28.5" width="6" height="0.7" fill="#6d7378" opacity=".5"/><rect x="72.2" y="30.9" width="1.1" height="1.1" fill="#6d7378" opacity=".8"/><rect x="74.2" y="31.099999999999998" width="4" height="0.7" fill="#6d7378" opacity=".5"/><rect x="72.2" y="33.5" width="1.1" height="1.1" fill="#6d7378" opacity=".8"/><rect x="74.2" y="33.7" width="5" height="0.7" fill="#6d7378" opacity=".5"/><rect x="72.2" y="35.7" width="1.1" height="1.1" fill="#6d7378" opacity=".8"/><rect x="74.2" y="35.900000000000006" width="4" height="0.7" fill="#6d7378" opacity=".5"/><rect x="72.2" y="37.9" width="1.1" height="1.1" fill="#6d7378" opacity=".8"/><rect x="74.2" y="38.1" width="3" height="0.7" fill="#6d7378" opacity=".5"/><rect x="72.2" y="41.5" width="1.1" height="1.1" fill="#6d7378" opacity=".8"/><rect x="74.2" y="41.7" width="3" height="0.7" fill="#6d7378" opacity=".5"/><rect x="72.2" y="43.7" width="1.1" height="1.1" fill="#6d7378" opacity=".8"/><rect x="74.2" y="43.900000000000006" width="5" height="0.7" fill="#6d7378" opacity=".5"/><rect x="72.2" y="47.1" width="1.1" height="1.1" fill="#6d7378" opacity=".8"/><rect x="74.2" y="47.300000000000004" width="3" height="0.7" fill="#6d7378" opacity=".5"/><rect x="72.2" y="49.3" width="1.1" height="1.1" fill="#6d7378" opacity=".8"/><rect x="74.2" y="49.5" width="6" height="0.7" fill="#6d7378" opacity=".5"/><rect x="72.2" y="51.7" width="1.1" height="1.1" fill="#6d7378" opacity=".8"/><rect x="74.2" y="51.900000000000006" width="8" height="0.7" fill="#6d7378" opacity=".5"/><rect x="72.2" y="54.9" width="1.1" height="1.1" fill="#6d7378" opacity=".8"/><rect x="74.2" y="55.1" width="3" height="0.7" fill="#6d7378" opacity=".5"/><rect x="72.2" y="56.9" width="1.1" height="1.1" fill="#6d7378" opacity=".8"/><rect x="74.2" y="57.1" width="9" height="0.7" fill="#6d7378" opacity=".5"/><rect x="89.4" y="19.2" width="5.6" height="5" fill="#1d9ab5"/><path d="M95.0 19.2L91.4 22.4L93.0 24.2H95.0Z" fill="#c9377f"/><path d="M89.4 24.2L91.4 22.4L93.80000000000001 24.2Z" fill="#35615f"/><rect x="89.4" y="19.2" width="5.6" height="1" fill="#4a5057" opacity=".8"/><rect x="89.2" y="25.6" width="5" height="0.7" fill="#6d7378" opacity=".45"/><rect x="101.8" y="19.2" width="5.6" height="4.59" rx="0.4" fill="#3daee9"/><rect x="101.8" y="19.2" width="2.52" height="1.40" fill="#2a8fd0"/><rect x="102.6" y="24.5" width="4.0" height="0.5" fill="#9aa0a8" opacity=".6"/><rect x="101.6" y="25.6" width="6.6" height="0.7" fill="#6d7378" opacity=".45"/><rect x="114.1" y="19.2" width="5.6" height="4.59" rx="0.4" fill="#3daee9"/><rect x="114.1" y="19.2" width="2.52" height="1.40" fill="#2a8fd0"/><rect x="114.9" y="24.5" width="4.0" height="0.5" fill="#9aa0a8" opacity=".6"/><rect x="113.89999999999999" y="25.6" width="6" height="0.7" fill="#6d7378" opacity=".45"/><rect x="126.4" y="19.2" width="5.6" height="4.59" rx="0.4" fill="#3daee9"/><rect x="126.4" y="19.2" width="2.52" height="1.40" fill="#2a8fd0"/><rect x="127.2" y="24.5" width="4.0" height="0.5" fill="#9aa0a8" opacity=".6"/><rect x="126.2" y="25.6" width="4" height="0.7" fill="#6d7378" opacity=".45"/><rect x="138.7" y="19.2" width="5.6" height="4.59" rx="0.4" fill="#3daee9"/><rect x="138.7" y="19.2" width="2.52" height="1.40" fill="#2a8fd0"/><rect x="139.5" y="24.5" width="4.0" height="0.5" fill="#9aa0a8" opacity=".6"/><rect x="139.5" y="20.6" width="4" height="2.4" fill="#f2e9b0"/><rect x="139.5" y="21.8" width="4" height="1.2" fill="#4a9a54"/><rect x="138.5" y="25.6" width="5" height="0.7" fill="#6d7378" opacity=".45"/><rect x="151.0" y="19.2" width="5.6" height="4.59" rx="0.4" fill="#3daee9"/><rect x="151.0" y="19.2" width="2.52" height="1.40" fill="#2a8fd0"/><rect x="151.8" y="24.5" width="4.0" height="0.5" fill="#9aa0a8" opacity=".6"/><rect x="150.8" y="25.6" width="4.4" height="0.7" fill="#6d7378" opacity=".45"/><rect x="89.4" y="29.0" width="5.6" height="4.59" rx="0.4" fill="#3daee9"/><rect x="89.4" y="29.0" width="2.52" height="1.40" fill="#2a8fd0"/><rect x="90.2" y="34.3" width="4.0" height="0.5" fill="#9aa0a8" opacity=".6"/><rect x="89.4" y="35.3" width="5.4" height="0.7" fill="#6d7378" opacity=".45"/><rect x="101.8" y="29.0" width="5.6" height="4.59" rx="0.4" fill="#3daee9"/><rect x="101.8" y="29.0" width="2.52" height="1.40" fill="#2a8fd0"/><rect x="102.6" y="34.3" width="4.0" height="0.5" fill="#9aa0a8" opacity=".6"/><rect x="101.8" y="35.3" width="5.4" height="0.7" fill="#6d7378" opacity=".45"/><rect x="86" y="63" width="6" height="1.6" fill="#eff0f1"/><rect x="87" y="63.5" width="4" height="0.6" fill="#6d7378" opacity=".5"/><rect x="97.6" y="52.8" width="68.2" height="39.6" fill="#000" opacity=".22"/><rect x="98" y="53" width="67.4" height="38.7" fill="#f2f3f4"/><rect x="98" y="53" width="67.4" height="2.6" fill="#e9ebec"/><rect x="125" y="54" width="10" height="0.7" fill="#6c7176" opacity=".55"/><rect x="98.6" y="53.6" width="1.3" height="1.3" fill="#3daee9"/><rect x="99" y="57.6" width="4" height="4.2" rx="0.3" fill="#2d9bf0"/><rect x="100.2" y="58.8" width="1.6" height="1.8" fill="#eaf6ff"/><rect x="104" y="58" width="3" height="1.1" fill="#6c7176"/><rect x="104" y="60.2" width="4.6" height="0.9" fill="#6c7176" opacity=".7"/><rect x="114.6" y="57.6" width="5" height="2" fill="#f2f3f4"/><rect x="120.4" y="57.6" width="29" height="2" fill="#c4c7cb"/><rect x="115.4" y="58.3" width="3.2" height="0.7" fill="#6c7176" opacity=".7"/><rect x="121.4" y="58.3" width="10.6" height="0.7" fill="#6c7176" opacity=".7"/><rect x="134.6" y="58.3" width="5" height="0.7" fill="#6c7176" opacity=".7"/><rect x="141.6" y="58.3" width="6.6" height="0.7" fill="#6c7176" opacity=".7"/><rect x="114.2" y="61.6" width="47" height="0.7" fill="#6c7176" opacity="0.55"/><rect x="114.2" y="63" width="46" height="0.7" fill="#6c7176" opacity="0.5"/><rect x="114.2" y="64.8" width="48" height="0.7" fill="#6c7176" opacity="0.55"/><rect x="114.2" y="66.2" width="38" height="0.7" fill="#6c7176" opacity="0.5"/><rect x="114.2" y="67.6" width="7" height="0.7" fill="#6c7176" opacity="0.5"/><rect x="114.2" y="70" width="49" height="0.7" fill="#6c7176" opacity="0.55"/><rect x="114.2" y="72.2" width="44" height="0.7" fill="#6c7176" opacity="0.5"/><rect x="114.2" y="73.6" width="40" height="0.7" fill="#6c7176" opacity="0.5"/><rect x="114.2" y="76.4" width="45" height="0.7" fill="#6c7176" opacity="0.55"/><rect x="114.2" y="77.8" width="11" height="0.7" fill="#6c7176" opacity="0.5"/><rect x="117" y="77.8" width="10" height="0.7" fill="#3d9ad8" opacity=".8"/><rect x="131" y="73.6" width="12" height="0.7" fill="#3d9ad8" opacity=".7"/><rect x="130" y="63" width="9" height="0.7" fill="#3d9ad8" opacity=".7"/><path d="M100.4 72.6L99.4 69.4L103 69.2L104.6 67.2L106.6 69L110 65.6L110.6 69.6L112 71L110.2 73.4L112.4 76.4L109.4 77.6L110.6 81.2L107.6 81L106.8 85L103.6 82.2L100 83.2L101.6 79.8L99.2 78L101.4 75.6Z" fill="#58be2e"/><path d="M103.4 70.4L106 69.6L106.4 72.6L104.2 73.4Z" fill="#1d2a16"/><path d="M106 68.2L107.8 65L109 68.4L107.4 70Z" fill="#f2a526"/><path d="M100.8 74.6L104.4 73.8L104.6 77.6L101.6 78.2Z" fill="#e03424"/><path d="M107 74L110.4 74.6L109.6 77.4L106.6 77Z" fill="#e03424"/><path d="M103 79L106.4 78.4L106.2 82L103.6 81.6Z" fill="#8ad850"/><rect x="157.6" y="87.8" width="5.8" height="2.4" rx="0.3" fill="#c4c7cb" opacity=".7"/><rect x="159.6" y="88.7" width="2.6" height="0.7" fill="#6c7176" opacity=".7"/><rect x="0" y="99.6" width="171.4" height="4" fill="#d6d9f2"/><path d="M2 102.8L3.6 100.6" stroke="#353a48" stroke-width="0.7"/><rect x="5.6" y="100.3" width="3.2" height="3" fill="#2b2f3a"/><rect x="10.6" y="100.5" width="2.6" height="2.8" rx="0.4" fill="#2d9bf0"/><rect x="14.4" y="100" width="4.4" height="3.6" fill="#7cc4f0"/><rect x="14.4" y="100" width="4.4" height="1" fill="#d9ecfa"/><rect x="143.6" y="100.9" width="1.2" height="1.6" fill="#353a48" opacity=".55"/><rect x="146.4" y="100.9" width="0.9" height="1.6" fill="#353a48" opacity=".55"/><rect x="148.8" y="100.9" width="1" height="1.6" fill="#353a48" opacity=".55"/><rect x="151.4" y="100.9" width="0.9" height="1.6" fill="#353a48" opacity=".55"/><rect x="153.6" y="100.9" width="2.2" height="1.6" fill="#353a48" opacity=".55"/><rect x="157" y="100.9" width="0.5" height="1.6" fill="#353a48" opacity=".55"/><rect x="160" y="100.9" width="4.6" height="1.6" fill="#353a48" opacity=".55"/><rect x="167" y="100.9" width="1" height="1.6" fill="#353a48" opacity=".55"/></svg></div><div class="lbl" style="left:2px;top:30.5px"><span class="t" style="letter-spacing:-0.259px">Brisa</span></div>
<div class="card" style="left:277px;top:-89px"><svg width="172" height="104.6" viewBox="0 0 172 104" preserveAspectRatio="none"><defs><linearGradient id="w7a" x1="0" y1="0" x2="1" y2="1"><stop offset="0" stop-color="#4a68e2"/><stop offset="0.55" stop-color="#3f47bc"/><stop offset="1" stop-color="#3a30a2"/></linearGradient><linearGradient id="w7t" x1="0" y1="0" x2="1" y2="0.6"><stop offset="0.3" stop-color="#4a52c8"/><stop offset="1" stop-color="#3f47bc"/></linearGradient><linearGradient id="w7d" gradientUnits="userSpaceOnUse" x1="0" y1="0" x2="80" y2="52"><stop offset="0" stop-color="#8799f9"/><stop offset="0.75" stop-color="#6c70ee"/><stop offset="1" stop-color="#6c70ee" stop-opacity=".6"/></linearGradient><linearGradient id="w7o" x1="0.6" y1="0" x2="0.3" y2="1"><stop offset="0" stop-color="#e84a7c"/><stop offset="1" stop-color="#ff8a48"/></linearGradient><filter id="w7f" x="-5%" y="-5%" width="110%" height="110%"><feGaussianBlur stdDeviation="0.55"/></filter><filter id="w7g" x="-5%" y="-5%" width="110%" height="110%"><feGaussianBlur stdDeviation="1.6"/></filter><clipPath id="w7c"><rect width="172" height="104"/></clipPath></defs><rect width="172" height="104" fill="url(#w7a)"/><g clip-path="url(#w7c)"><path d="M50 -2H174V40L100 34Z" fill="url(#w7t)" filter="url(#w7g)"/><g filter="url(#w7f)"><path d="M-2 -2H56L100 22L72 52L56 50L-2 10.6Z" fill="url(#w7d)"/><path d="M-3 2.5L62 46" stroke="#b0bcff" stroke-width="2.2" opacity="0.35"/><path d="M-3 6.5L58 47" stroke="#6277ec" stroke-width="1.0" opacity="0.40"/><path d="M8 -3L72 38" stroke="#b0bcff" stroke-width="2.4" opacity="0.28"/><path d="M20 -3L80 34" stroke="#6277ec" stroke-width="1.2" opacity="0.35"/><path d="M30 -3L84 30" stroke="#b0bcff" stroke-width="2.0" opacity="0.25"/><path d="M40 -3L90 26" stroke="#6277ec" stroke-width="1" opacity="0.35"/><path d="M-3 -1L66 42" stroke="#b0bcff" stroke-width="1" opacity="0.25"/><path d="M53 -3L98 24" stroke="#a0b4ff" stroke-width="1.1" opacity="0.55"/><path d="M57 -3L101 22" stroke="#6277ec" stroke-width="0.8" opacity="0.40"/><path d="M60.5 -3L103 20.5" stroke="#a0b4ff" stroke-width="0.8" opacity="0.45"/><path d="M-3 9.6L57 49.6" stroke="#a0b4ff" stroke-width="1.0" opacity="0.75"/><path d="M-3 14L48 48" stroke="#a0b4ff" stroke-width="0.7" opacity="0.30"/><path d="M62 52L88 72" stroke="#8a58f0" stroke-width="2.4" opacity=".75" stroke-linecap="round"/><path d="M58 50L70 60" stroke="#a0b4ff" stroke-width="1" opacity=".5"/></g><circle cx="42.3" cy="25.5" r="1.25" fill="#c23cc0" opacity=".85"/><g filter="url(#w7f)"><ellipse cx="46.6" cy="38.8" rx="3" ry="4.5" transform="rotate(-38 46.6 38.8)" fill="#f0524e"/><path d="M44.6 37.6L49 41" stroke="#6c70ee" stroke-width="0.7" opacity=".7"/><path d="M60.4 47.6L69.4 36.4L75 37L75 54.6L65.6 58.6L60.8 54Z" fill="url(#w7o)"/></g></g><rect x="0.9" y="49.1" width="58.3" height="50" fill="#d5d9f1"/><rect x="0.9" y="49.1" width="20.3" height="50" fill="#c7cdee"/><rect x="0.9" y="49.1" width="58.3" height="3.6" fill="#dfe2f4"/><rect x="22" y="49.8" width="29" height="2.3" rx="0.5" fill="#f3f4fb"/><rect x="1.2" y="54" width="19.6" height="3.4" fill="#a9cdf2"/><rect x="2.2" y="55.1" width="1.3" height="1.3" fill="#5d6478" opacity=".85"/><rect x="4.6" y="55.35" width="7" height="0.8" fill="#5d6478" opacity=".55"/><rect x="2.2" y="58.6" width="1.3" height="1.3" fill="#5d6478" opacity=".85"/><rect x="4.6" y="58.85" width="10" height="0.8" fill="#5d6478" opacity=".55"/><rect x="2.2" y="62.6" width="1.3" height="1.3" fill="#5d6478" opacity=".85"/><rect x="4.6" y="62.85" width="9" height="0.8" fill="#5d6478" opacity=".55"/><rect x="2.2" y="66.2" width="1.3" height="1.3" fill="#5d6478" opacity=".85"/><rect x="4.6" y="66.45" width="6" height="0.8" fill="#5d6478" opacity=".55"/><rect x="2.2" y="69.60000000000001" width="1.3" height="1.3" fill="#5d6478" opacity=".85"/><rect x="4.6" y="69.85000000000001" width="5" height="0.8" fill="#5d6478" opacity=".55"/><rect x="2.2" y="72.80000000000001" width="1.3" height="1.3" fill="#5d6478" opacity=".85"/><rect x="4.6" y="73.05000000000001" width="6" height="0.8" fill="#5d6478" opacity=".55"/><rect x="2.2" y="76.2" width="1.3" height="1.3" fill="#5d6478" opacity=".85"/><rect x="4.6" y="76.45" width="4" height="0.8" fill="#5d6478" opacity=".55"/><rect x="2.2" y="79.60000000000001" width="1.3" height="1.3" fill="#5d6478" opacity=".85"/><rect x="4.6" y="79.85000000000001" width="6" height="0.8" fill="#5d6478" opacity=".55"/><rect x="2.2" y="82.80000000000001" width="1.3" height="1.3" fill="#5d6478" opacity=".85"/><rect x="4.6" y="83.05000000000001" width="7" height="0.8" fill="#5d6478" opacity=".55"/><rect x="2.2" y="86.2" width="1.3" height="1.3" fill="#5d6478" opacity=".85"/><rect x="4.6" y="86.45" width="5" height="0.8" fill="#5d6478" opacity=".55"/><rect x="2.2" y="89.60000000000001" width="1.3" height="1.3" fill="#5d6478" opacity=".85"/><rect x="4.6" y="89.85000000000001" width="5" height="0.8" fill="#5d6478" opacity=".55"/><rect x="2.2" y="92.80000000000001" width="1.3" height="1.3" fill="#5d6478" opacity=".85"/><rect x="4.6" y="93.05000000000001" width="4" height="0.8" fill="#5d6478" opacity=".55"/><rect x="22.5" y="54" width="8.6" height="9.8" fill="#a9cdf2" opacity=".8"/><rect x="24.8" y="55" width="3.8" height="4.2" fill="#1d1f24"/><rect x="25.6" y="55.8" width="2.2" height="1.6" fill="#aeb4bd"/><rect x="33.6" y="55.4" width="4.4" height="3.6" fill="#7cc4f0"/><rect x="33.6" y="55.4" width="4.4" height="0.9" fill="#d9ecfa"/><rect x="43" y="55.2" width="4.2" height="3.9" rx="0.5" fill="#2d9bf0"/><rect x="44.4" y="56.4" width="1.4" height="1.4" fill="#dff"/><rect x="24.4" y="60.4" width="4.6" height="0.7" fill="#5d6478" opacity=".5"/><rect x="33.6" y="60.4" width="4.6" height="0.7" fill="#5d6478" opacity=".5"/><rect x="43" y="60.4" width="4.6" height="0.7" fill="#5d6478" opacity=".5"/><rect x="0.9" y="96.4" width="58.3" height="2.7" fill="#dfe2f4"/><rect x="1.6" y="97.3" width="8" height="0.9" fill="#5d6478" opacity=".5"/><rect x="12.6" y="97.3" width="5" height="0.9" fill="#5d6478" opacity=".5"/><rect x="23.6" y="97.3" width="4" height="0.9" fill="#5d6478" opacity=".5"/><rect x="30" y="97.3" width="6.6" height="0.9" fill="#5d6478" opacity=".5"/><rect x="38.6" y="97.3" width="5.6" height="0.9" fill="#5d6478" opacity=".5"/><rect x="46" y="97.3" width="8.4" height="0.9" fill="#5d6478" opacity=".5"/><rect x="70.6" y="9.4" width="90.8" height="56.6" fill="#000" opacity=".18"/><rect x="71" y="9.7" width="90" height="55.5" fill="#ffffff"/><rect x="71" y="9.7" width="90" height="7" fill="#eff0f1"/><rect x="71" y="16.7" width="14.4" height="48.5" fill="#f7f8f8"/><rect x="110" y="10.6" width="12" height="0.8" fill="#6d7378" opacity=".5"/><rect x="78" y="13.8" width="1.4" height="1.6" fill="#6d7378"/><rect x="87" y="14.2" width="4" height="0.8" fill="#6d7378" opacity=".6"/><rect x="148.6" y="13.6" width="1.6" height="1.6" fill="#6d7378"/><rect x="151" y="14" width="2.6" height="0.8" fill="#6d7378" opacity=".6"/><rect x="155.6" y="13.8" width="1" height="1.4" fill="#6d7378" opacity=".7"/><rect x="158" y="13.8" width="1.2" height="1.4" fill="#6d7378"/><rect x="71.4" y="20.4" width="13.6" height="2.6" fill="#bfe0f6"/><rect x="72.2" y="21.2" width="1.1" height="1.1" fill="#6d7378" opacity=".8"/><rect x="74.2" y="21.4" width="4" height="0.7" fill="#6d7378" opacity=".5"/><rect x="72.2" y="23.7" width="1.1" height="1.1" fill="#6d7378" opacity=".8"/><rect x="74.2" y="23.9" width="5" height="0.7" fill="#6d7378" opacity=".5"/><rect x="72.2" y="25.9" width="1.1" height="1.1" fill="#6d7378" opacity=".8"/><rect x="74.2" y="26.099999999999998" width="7" height="0.7" fill="#6d7378" opacity=".5"/><rect x="72.2" y="28.3" width="1.1" height="1.1" fill="#6d7378" opacity=".8"/><rect x="74.2" y="28.5" width="6" height="0.7" fill="#6d7378" opacity=".5"/><rect x="72.2" y="30.9" width="1.1" height="1.1" fill="#6d7378" opacity=".8"/><rect x="74.2" y="31.099999999999998" width="4" height="0.7" fill="#6d7378" opacity=".5"/><rect x="72.2" y="33.5" width="1.1" height="1.1" fill="#6d7378" opacity=".8"/><rect x="74.2" y="33.7" width="5" height="0.7" fill="#6d7378" opacity=".5"/><rect x="72.2" y="35.7" width="1.1" height="1.1" fill="#6d7378" opacity=".8"/><rect x="74.2" y="35.900000000000006" width="4" height="0.7" fill="#6d7378" opacity=".5"/><rect x="72.2" y="37.9" width="1.1" height="1.1" fill="#6d7378" opacity=".8"/><rect x="74.2" y="38.1" width="3" height="0.7" fill="#6d7378" opacity=".5"/><rect x="72.2" y="41.5" width="1.1" height="1.1" fill="#6d7378" opacity=".8"/><rect x="74.2" y="41.7" width="3" height="0.7" fill="#6d7378" opacity=".5"/><rect x="72.2" y="43.7" width="1.1" height="1.1" fill="#6d7378" opacity=".8"/><rect x="74.2" y="43.900000000000006" width="5" height="0.7" fill="#6d7378" opacity=".5"/><rect x="72.2" y="47.1" width="1.1" height="1.1" fill="#6d7378" opacity=".8"/><rect x="74.2" y="47.300000000000004" width="3" height="0.7" fill="#6d7378" opacity=".5"/><rect x="72.2" y="49.3" width="1.1" height="1.1" fill="#6d7378" opacity=".8"/><rect x="74.2" y="49.5" width="6" height="0.7" fill="#6d7378" opacity=".5"/><rect x="72.2" y="51.7" width="1.1" height="1.1" fill="#6d7378" opacity=".8"/><rect x="74.2" y="51.900000000000006" width="8" height="0.7" fill="#6d7378" opacity=".5"/><rect x="72.2" y="54.9" width="1.1" height="1.1" fill="#6d7378" opacity=".8"/><rect x="74.2" y="55.1" width="3" height="0.7" fill="#6d7378" opacity=".5"/><rect x="72.2" y="56.9" width="1.1" height="1.1" fill="#6d7378" opacity=".8"/><rect x="74.2" y="57.1" width="9" height="0.7" fill="#6d7378" opacity=".5"/><rect x="89.4" y="19.2" width="5.6" height="5" fill="#1d9ab5"/><path d="M95.0 19.2L91.4 22.4L93.0 24.2H95.0Z" fill="#c9377f"/><path d="M89.4 24.2L91.4 22.4L93.80000000000001 24.2Z" fill="#35615f"/><rect x="89.4" y="19.2" width="5.6" height="1" fill="#4a5057" opacity=".8"/><rect x="89.2" y="25.6" width="5" height="0.7" fill="#6d7378" opacity=".45"/><rect x="101.8" y="19.2" width="5.6" height="4.59" rx="0.4" fill="#3daee9"/><rect x="101.8" y="19.2" width="2.52" height="1.40" fill="#2a8fd0"/><rect x="102.6" y="24.5" width="4.0" height="0.5" fill="#9aa0a8" opacity=".6"/><rect x="101.6" y="25.6" width="6.6" height="0.7" fill="#6d7378" opacity=".45"/><rect x="114.1" y="19.2" width="5.6" height="4.59" rx="0.4" fill="#3daee9"/><rect x="114.1" y="19.2" width="2.52" height="1.40" fill="#2a8fd0"/><rect x="114.9" y="24.5" width="4.0" height="0.5" fill="#9aa0a8" opacity=".6"/><rect x="113.89999999999999" y="25.6" width="6" height="0.7" fill="#6d7378" opacity=".45"/><rect x="126.4" y="19.2" width="5.6" height="4.59" rx="0.4" fill="#3daee9"/><rect x="126.4" y="19.2" width="2.52" height="1.40" fill="#2a8fd0"/><rect x="127.2" y="24.5" width="4.0" height="0.5" fill="#9aa0a8" opacity=".6"/><rect x="126.2" y="25.6" width="4" height="0.7" fill="#6d7378" opacity=".45"/><rect x="138.7" y="19.2" width="5.6" height="4.59" rx="0.4" fill="#3daee9"/><rect x="138.7" y="19.2" width="2.52" height="1.40" fill="#2a8fd0"/><rect x="139.5" y="24.5" width="4.0" height="0.5" fill="#9aa0a8" opacity=".6"/><rect x="139.5" y="20.6" width="4" height="2.4" fill="#f2e9b0"/><rect x="139.5" y="21.8" width="4" height="1.2" fill="#4a9a54"/><rect x="138.5" y="25.6" width="5" height="0.7" fill="#6d7378" opacity=".45"/><rect x="151.0" y="19.2" width="5.6" height="4.59" rx="0.4" fill="#3daee9"/><rect x="151.0" y="19.2" width="2.52" height="1.40" fill="#2a8fd0"/><rect x="151.8" y="24.5" width="4.0" height="0.5" fill="#9aa0a8" opacity=".6"/><rect x="150.8" y="25.6" width="4.4" height="0.7" fill="#6d7378" opacity=".45"/><rect x="89.4" y="29.0" width="5.6" height="4.59" rx="0.4" fill="#3daee9"/><rect x="89.4" y="29.0" width="2.52" height="1.40" fill="#2a8fd0"/><rect x="90.2" y="34.3" width="4.0" height="0.5" fill="#9aa0a8" opacity=".6"/><rect x="89.4" y="35.3" width="5.4" height="0.7" fill="#6d7378" opacity=".45"/><rect x="101.8" y="29.0" width="5.6" height="4.59" rx="0.4" fill="#3daee9"/><rect x="101.8" y="29.0" width="2.52" height="1.40" fill="#2a8fd0"/><rect x="102.6" y="34.3" width="4.0" height="0.5" fill="#9aa0a8" opacity=".6"/><rect x="101.8" y="35.3" width="5.4" height="0.7" fill="#6d7378" opacity=".45"/><rect x="86" y="63" width="6" height="1.6" fill="#eff0f1"/><rect x="87" y="63.5" width="4" height="0.6" fill="#6d7378" opacity=".5"/><rect x="97.6" y="52.8" width="68.2" height="39.6" fill="#000" opacity=".22"/><rect x="98" y="53" width="67.4" height="38.7" fill="#f2f3f4"/><rect x="98" y="53" width="67.4" height="2.6" fill="#e9ebec"/><rect x="125" y="54" width="10" height="0.7" fill="#6c7176" opacity=".55"/><rect x="98.6" y="53.6" width="1.3" height="1.3" fill="#3daee9"/><rect x="99" y="57.6" width="4" height="4.2" rx="0.3" fill="#2d9bf0"/><rect x="100.2" y="58.8" width="1.6" height="1.8" fill="#eaf6ff"/><rect x="104" y="58" width="3" height="1.1" fill="#6c7176"/><rect x="104" y="60.2" width="4.6" height="0.9" fill="#6c7176" opacity=".7"/><rect x="114.6" y="57.6" width="5" height="2" fill="#f2f3f4"/><rect x="120.4" y="57.6" width="29" height="2" fill="#c4c7cb"/><rect x="115.4" y="58.3" width="3.2" height="0.7" fill="#6c7176" opacity=".7"/><rect x="121.4" y="58.3" width="10.6" height="0.7" fill="#6c7176" opacity=".7"/><rect x="134.6" y="58.3" width="5" height="0.7" fill="#6c7176" opacity=".7"/><rect x="141.6" y="58.3" width="6.6" height="0.7" fill="#6c7176" opacity=".7"/><rect x="114.2" y="61.6" width="47" height="0.7" fill="#6c7176" opacity="0.55"/><rect x="114.2" y="63" width="46" height="0.7" fill="#6c7176" opacity="0.5"/><rect x="114.2" y="64.8" width="48" height="0.7" fill="#6c7176" opacity="0.55"/><rect x="114.2" y="66.2" width="38" height="0.7" fill="#6c7176" opacity="0.5"/><rect x="114.2" y="67.6" width="7" height="0.7" fill="#6c7176" opacity="0.5"/><rect x="114.2" y="70" width="49" height="0.7" fill="#6c7176" opacity="0.55"/><rect x="114.2" y="72.2" width="44" height="0.7" fill="#6c7176" opacity="0.5"/><rect x="114.2" y="73.6" width="40" height="0.7" fill="#6c7176" opacity="0.5"/><rect x="114.2" y="76.4" width="45" height="0.7" fill="#6c7176" opacity="0.55"/><rect x="114.2" y="77.8" width="11" height="0.7" fill="#6c7176" opacity="0.5"/><rect x="117" y="77.8" width="10" height="0.7" fill="#3d9ad8" opacity=".8"/><rect x="131" y="73.6" width="12" height="0.7" fill="#3d9ad8" opacity=".7"/><rect x="130" y="63" width="9" height="0.7" fill="#3d9ad8" opacity=".7"/><path d="M100.4 72.6L99.4 69.4L103 69.2L104.6 67.2L106.6 69L110 65.6L110.6 69.6L112 71L110.2 73.4L112.4 76.4L109.4 77.6L110.6 81.2L107.6 81L106.8 85L103.6 82.2L100 83.2L101.6 79.8L99.2 78L101.4 75.6Z" fill="#58be2e"/><path d="M103.4 70.4L106 69.6L106.4 72.6L104.2 73.4Z" fill="#1d2a16"/><path d="M106 68.2L107.8 65L109 68.4L107.4 70Z" fill="#f2a526"/><path d="M100.8 74.6L104.4 73.8L104.6 77.6L101.6 78.2Z" fill="#e03424"/><path d="M107 74L110.4 74.6L109.6 77.4L106.6 77Z" fill="#e03424"/><path d="M103 79L106.4 78.4L106.2 82L103.6 81.6Z" fill="#8ad850"/><rect x="157.6" y="87.8" width="5.8" height="2.4" rx="0.3" fill="#c4c7cb" opacity=".7"/><rect x="159.6" y="88.7" width="2.6" height="0.7" fill="#6c7176" opacity=".7"/><rect x="0" y="99.6" width="171.4" height="4" fill="#d6d9f2"/><path d="M2 102.8L3.6 100.6" stroke="#353a48" stroke-width="0.7"/><rect x="5.6" y="100.3" width="3.2" height="3" fill="#2b2f3a"/><rect x="10.6" y="100.5" width="2.6" height="2.8" rx="0.4" fill="#2d9bf0"/><rect x="14.4" y="100" width="4.4" height="3.6" fill="#7cc4f0"/><rect x="14.4" y="100" width="4.4" height="1" fill="#d9ecfa"/><rect x="143.6" y="100.9" width="1.2" height="1.6" fill="#353a48" opacity=".55"/><rect x="146.4" y="100.9" width="0.9" height="1.6" fill="#353a48" opacity=".55"/><rect x="148.8" y="100.9" width="1" height="1.6" fill="#353a48" opacity=".55"/><rect x="151.4" y="100.9" width="0.9" height="1.6" fill="#353a48" opacity=".55"/><rect x="153.6" y="100.9" width="2.2" height="1.6" fill="#353a48" opacity=".55"/><rect x="157" y="100.9" width="0.5" height="1.6" fill="#353a48" opacity=".55"/><rect x="160" y="100.9" width="4.6" height="1.6" fill="#353a48" opacity=".55"/><rect x="167" y="100.9" width="1" height="1.6" fill="#353a48" opacity=".55"/></svg></div><div class="lbl" style="left:245px;top:30.5px"><span class="t" style="letter-spacing:-0.259px">Brisa</span></div>
<div class="card" style="left:520px;top:-89px"><svg width="172" height="104.6" viewBox="0 0 172 104" preserveAspectRatio="none"><defs><linearGradient id="w8a" x1="0" y1="0" x2="1" y2="1"><stop offset="0" stop-color="#4a68e2"/><stop offset="0.55" stop-color="#3f47bc"/><stop offset="1" stop-color="#3a30a2"/></linearGradient><linearGradient id="w8t" x1="0" y1="0" x2="1" y2="0.6"><stop offset="0.3" stop-color="#4a52c8"/><stop offset="1" stop-color="#3f47bc"/></linearGradient><linearGradient id="w8d" gradientUnits="userSpaceOnUse" x1="0" y1="0" x2="80" y2="52"><stop offset="0" stop-color="#8799f9"/><stop offset="0.75" stop-color="#6c70ee"/><stop offset="1" stop-color="#6c70ee" stop-opacity=".6"/></linearGradient><linearGradient id="w8o" x1="0.6" y1="0" x2="0.3" y2="1"><stop offset="0" stop-color="#e84a7c"/><stop offset="1" stop-color="#ff8a48"/></linearGradient><filter id="w8f" x="-5%" y="-5%" width="110%" height="110%"><feGaussianBlur stdDeviation="0.55"/></filter><filter id="w8g" x="-5%" y="-5%" width="110%" height="110%"><feGaussianBlur stdDeviation="1.6"/></filter><clipPath id="w8c"><rect width="172" height="104"/></clipPath></defs><rect width="172" height="104" fill="url(#w8a)"/><g clip-path="url(#w8c)"><path d="M50 -2H174V40L100 34Z" fill="url(#w8t)" filter="url(#w8g)"/><g filter="url(#w8f)"><path d="M-2 -2H56L100 22L72 52L56 50L-2 10.6Z" fill="url(#w8d)"/><path d="M-3 2.5L62 46" stroke="#b0bcff" stroke-width="2.2" opacity="0.35"/><path d="M-3 6.5L58 47" stroke="#6277ec" stroke-width="1.0" opacity="0.40"/><path d="M8 -3L72 38" stroke="#b0bcff" stroke-width="2.4" opacity="0.28"/><path d="M20 -3L80 34" stroke="#6277ec" stroke-width="1.2" opacity="0.35"/><path d="M30 -3L84 30" stroke="#b0bcff" stroke-width="2.0" opacity="0.25"/><path d="M40 -3L90 26" stroke="#6277ec" stroke-width="1" opacity="0.35"/><path d="M-3 -1L66 42" stroke="#b0bcff" stroke-width="1" opacity="0.25"/><path d="M53 -3L98 24" stroke="#a0b4ff" stroke-width="1.1" opacity="0.55"/><path d="M57 -3L101 22" stroke="#6277ec" stroke-width="0.8" opacity="0.40"/><path d="M60.5 -3L103 20.5" stroke="#a0b4ff" stroke-width="0.8" opacity="0.45"/><path d="M-3 9.6L57 49.6" stroke="#a0b4ff" stroke-width="1.0" opacity="0.75"/><path d="M-3 14L48 48" stroke="#a0b4ff" stroke-width="0.7" opacity="0.30"/><path d="M62 52L88 72" stroke="#8a58f0" stroke-width="2.4" opacity=".75" stroke-linecap="round"/><path d="M58 50L70 60" stroke="#a0b4ff" stroke-width="1" opacity=".5"/></g><circle cx="42.3" cy="25.5" r="1.25" fill="#c23cc0" opacity=".85"/><g filter="url(#w8f)"><ellipse cx="46.6" cy="38.8" rx="3" ry="4.5" transform="rotate(-38 46.6 38.8)" fill="#f0524e"/><path d="M44.6 37.6L49 41" stroke="#6c70ee" stroke-width="0.7" opacity=".7"/><path d="M60.4 47.6L69.4 36.4L75 37L75 54.6L65.6 58.6L60.8 54Z" fill="url(#w8o)"/></g></g><rect x="0.9" y="49.1" width="58.3" height="50" fill="#d5d9f1"/><rect x="0.9" y="49.1" width="20.3" height="50" fill="#c7cdee"/><rect x="0.9" y="49.1" width="58.3" height="3.6" fill="#dfe2f4"/><rect x="22" y="49.8" width="29" height="2.3" rx="0.5" fill="#f3f4fb"/><rect x="1.2" y="54" width="19.6" height="3.4" fill="#a9cdf2"/><rect x="2.2" y="55.1" width="1.3" height="1.3" fill="#5d6478" opacity=".85"/><rect x="4.6" y="55.35" width="7" height="0.8" fill="#5d6478" opacity=".55"/><rect x="2.2" y="58.6" width="1.3" height="1.3" fill="#5d6478" opacity=".85"/><rect x="4.6" y="58.85" width="10" height="0.8" fill="#5d6478" opacity=".55"/><rect x="2.2" y="62.6" width="1.3" height="1.3" fill="#5d6478" opacity=".85"/><rect x="4.6" y="62.85" width="9" height="0.8" fill="#5d6478" opacity=".55"/><rect x="2.2" y="66.2" width="1.3" height="1.3" fill="#5d6478" opacity=".85"/><rect x="4.6" y="66.45" width="6" height="0.8" fill="#5d6478" opacity=".55"/><rect x="2.2" y="69.60000000000001" width="1.3" height="1.3" fill="#5d6478" opacity=".85"/><rect x="4.6" y="69.85000000000001" width="5" height="0.8" fill="#5d6478" opacity=".55"/><rect x="2.2" y="72.80000000000001" width="1.3" height="1.3" fill="#5d6478" opacity=".85"/><rect x="4.6" y="73.05000000000001" width="6" height="0.8" fill="#5d6478" opacity=".55"/><rect x="2.2" y="76.2" width="1.3" height="1.3" fill="#5d6478" opacity=".85"/><rect x="4.6" y="76.45" width="4" height="0.8" fill="#5d6478" opacity=".55"/><rect x="2.2" y="79.60000000000001" width="1.3" height="1.3" fill="#5d6478" opacity=".85"/><rect x="4.6" y="79.85000000000001" width="6" height="0.8" fill="#5d6478" opacity=".55"/><rect x="2.2" y="82.80000000000001" width="1.3" height="1.3" fill="#5d6478" opacity=".85"/><rect x="4.6" y="83.05000000000001" width="7" height="0.8" fill="#5d6478" opacity=".55"/><rect x="2.2" y="86.2" width="1.3" height="1.3" fill="#5d6478" opacity=".85"/><rect x="4.6" y="86.45" width="5" height="0.8" fill="#5d6478" opacity=".55"/><rect x="2.2" y="89.60000000000001" width="1.3" height="1.3" fill="#5d6478" opacity=".85"/><rect x="4.6" y="89.85000000000001" width="5" height="0.8" fill="#5d6478" opacity=".55"/><rect x="2.2" y="92.80000000000001" width="1.3" height="1.3" fill="#5d6478" opacity=".85"/><rect x="4.6" y="93.05000000000001" width="4" height="0.8" fill="#5d6478" opacity=".55"/><rect x="22.5" y="54" width="8.6" height="9.8" fill="#a9cdf2" opacity=".8"/><rect x="24.8" y="55" width="3.8" height="4.2" fill="#1d1f24"/><rect x="25.6" y="55.8" width="2.2" height="1.6" fill="#aeb4bd"/><rect x="33.6" y="55.4" width="4.4" height="3.6" fill="#7cc4f0"/><rect x="33.6" y="55.4" width="4.4" height="0.9" fill="#d9ecfa"/><rect x="43" y="55.2" width="4.2" height="3.9" rx="0.5" fill="#2d9bf0"/><rect x="44.4" y="56.4" width="1.4" height="1.4" fill="#dff"/><rect x="24.4" y="60.4" width="4.6" height="0.7" fill="#5d6478" opacity=".5"/><rect x="33.6" y="60.4" width="4.6" height="0.7" fill="#5d6478" opacity=".5"/><rect x="43" y="60.4" width="4.6" height="0.7" fill="#5d6478" opacity=".5"/><rect x="0.9" y="96.4" width="58.3" height="2.7" fill="#dfe2f4"/><rect x="1.6" y="97.3" width="8" height="0.9" fill="#5d6478" opacity=".5"/><rect x="12.6" y="97.3" width="5" height="0.9" fill="#5d6478" opacity=".5"/><rect x="23.6" y="97.3" width="4" height="0.9" fill="#5d6478" opacity=".5"/><rect x="30" y="97.3" width="6.6" height="0.9" fill="#5d6478" opacity=".5"/><rect x="38.6" y="97.3" width="5.6" height="0.9" fill="#5d6478" opacity=".5"/><rect x="46" y="97.3" width="8.4" height="0.9" fill="#5d6478" opacity=".5"/><rect x="70.6" y="9.4" width="90.8" height="56.6" fill="#000" opacity=".18"/><rect x="71" y="9.7" width="90" height="55.5" fill="#ffffff"/><rect x="71" y="9.7" width="90" height="7" fill="#eff0f1"/><rect x="71" y="16.7" width="14.4" height="48.5" fill="#f7f8f8"/><rect x="110" y="10.6" width="12" height="0.8" fill="#6d7378" opacity=".5"/><rect x="78" y="13.8" width="1.4" height="1.6" fill="#6d7378"/><rect x="87" y="14.2" width="4" height="0.8" fill="#6d7378" opacity=".6"/><rect x="148.6" y="13.6" width="1.6" height="1.6" fill="#6d7378"/><rect x="151" y="14" width="2.6" height="0.8" fill="#6d7378" opacity=".6"/><rect x="155.6" y="13.8" width="1" height="1.4" fill="#6d7378" opacity=".7"/><rect x="158" y="13.8" width="1.2" height="1.4" fill="#6d7378"/><rect x="71.4" y="20.4" width="13.6" height="2.6" fill="#bfe0f6"/><rect x="72.2" y="21.2" width="1.1" height="1.1" fill="#6d7378" opacity=".8"/><rect x="74.2" y="21.4" width="4" height="0.7" fill="#6d7378" opacity=".5"/><rect x="72.2" y="23.7" width="1.1" height="1.1" fill="#6d7378" opacity=".8"/><rect x="74.2" y="23.9" width="5" height="0.7" fill="#6d7378" opacity=".5"/><rect x="72.2" y="25.9" width="1.1" height="1.1" fill="#6d7378" opacity=".8"/><rect x="74.2" y="26.099999999999998" width="7" height="0.7" fill="#6d7378" opacity=".5"/><rect x="72.2" y="28.3" width="1.1" height="1.1" fill="#6d7378" opacity=".8"/><rect x="74.2" y="28.5" width="6" height="0.7" fill="#6d7378" opacity=".5"/><rect x="72.2" y="30.9" width="1.1" height="1.1" fill="#6d7378" opacity=".8"/><rect x="74.2" y="31.099999999999998" width="4" height="0.7" fill="#6d7378" opacity=".5"/><rect x="72.2" y="33.5" width="1.1" height="1.1" fill="#6d7378" opacity=".8"/><rect x="74.2" y="33.7" width="5" height="0.7" fill="#6d7378" opacity=".5"/><rect x="72.2" y="35.7" width="1.1" height="1.1" fill="#6d7378" opacity=".8"/><rect x="74.2" y="35.900000000000006" width="4" height="0.7" fill="#6d7378" opacity=".5"/><rect x="72.2" y="37.9" width="1.1" height="1.1" fill="#6d7378" opacity=".8"/><rect x="74.2" y="38.1" width="3" height="0.7" fill="#6d7378" opacity=".5"/><rect x="72.2" y="41.5" width="1.1" height="1.1" fill="#6d7378" opacity=".8"/><rect x="74.2" y="41.7" width="3" height="0.7" fill="#6d7378" opacity=".5"/><rect x="72.2" y="43.7" width="1.1" height="1.1" fill="#6d7378" opacity=".8"/><rect x="74.2" y="43.900000000000006" width="5" height="0.7" fill="#6d7378" opacity=".5"/><rect x="72.2" y="47.1" width="1.1" height="1.1" fill="#6d7378" opacity=".8"/><rect x="74.2" y="47.300000000000004" width="3" height="0.7" fill="#6d7378" opacity=".5"/><rect x="72.2" y="49.3" width="1.1" height="1.1" fill="#6d7378" opacity=".8"/><rect x="74.2" y="49.5" width="6" height="0.7" fill="#6d7378" opacity=".5"/><rect x="72.2" y="51.7" width="1.1" height="1.1" fill="#6d7378" opacity=".8"/><rect x="74.2" y="51.900000000000006" width="8" height="0.7" fill="#6d7378" opacity=".5"/><rect x="72.2" y="54.9" width="1.1" height="1.1" fill="#6d7378" opacity=".8"/><rect x="74.2" y="55.1" width="3" height="0.7" fill="#6d7378" opacity=".5"/><rect x="72.2" y="56.9" width="1.1" height="1.1" fill="#6d7378" opacity=".8"/><rect x="74.2" y="57.1" width="9" height="0.7" fill="#6d7378" opacity=".5"/><rect x="89.4" y="19.2" width="5.6" height="5" fill="#1d9ab5"/><path d="M95.0 19.2L91.4 22.4L93.0 24.2H95.0Z" fill="#c9377f"/><path d="M89.4 24.2L91.4 22.4L93.80000000000001 24.2Z" fill="#35615f"/><rect x="89.4" y="19.2" width="5.6" height="1" fill="#4a5057" opacity=".8"/><rect x="89.2" y="25.6" width="5" height="0.7" fill="#6d7378" opacity=".45"/><rect x="101.8" y="19.2" width="5.6" height="4.59" rx="0.4" fill="#3daee9"/><rect x="101.8" y="19.2" width="2.52" height="1.40" fill="#2a8fd0"/><rect x="102.6" y="24.5" width="4.0" height="0.5" fill="#9aa0a8" opacity=".6"/><rect x="101.6" y="25.6" width="6.6" height="0.7" fill="#6d7378" opacity=".45"/><rect x="114.1" y="19.2" width="5.6" height="4.59" rx="0.4" fill="#3daee9"/><rect x="114.1" y="19.2" width="2.52" height="1.40" fill="#2a8fd0"/><rect x="114.9" y="24.5" width="4.0" height="0.5" fill="#9aa0a8" opacity=".6"/><rect x="113.89999999999999" y="25.6" width="6" height="0.7" fill="#6d7378" opacity=".45"/><rect x="126.4" y="19.2" width="5.6" height="4.59" rx="0.4" fill="#3daee9"/><rect x="126.4" y="19.2" width="2.52" height="1.40" fill="#2a8fd0"/><rect x="127.2" y="24.5" width="4.0" height="0.5" fill="#9aa0a8" opacity=".6"/><rect x="126.2" y="25.6" width="4" height="0.7" fill="#6d7378" opacity=".45"/><rect x="138.7" y="19.2" width="5.6" height="4.59" rx="0.4" fill="#3daee9"/><rect x="138.7" y="19.2" width="2.52" height="1.40" fill="#2a8fd0"/><rect x="139.5" y="24.5" width="4.0" height="0.5" fill="#9aa0a8" opacity=".6"/><rect x="139.5" y="20.6" width="4" height="2.4" fill="#f2e9b0"/><rect x="139.5" y="21.8" width="4" height="1.2" fill="#4a9a54"/><rect x="138.5" y="25.6" width="5" height="0.7" fill="#6d7378" opacity=".45"/><rect x="151.0" y="19.2" width="5.6" height="4.59" rx="0.4" fill="#3daee9"/><rect x="151.0" y="19.2" width="2.52" height="1.40" fill="#2a8fd0"/><rect x="151.8" y="24.5" width="4.0" height="0.5" fill="#9aa0a8" opacity=".6"/><rect x="150.8" y="25.6" width="4.4" height="0.7" fill="#6d7378" opacity=".45"/><rect x="89.4" y="29.0" width="5.6" height="4.59" rx="0.4" fill="#3daee9"/><rect x="89.4" y="29.0" width="2.52" height="1.40" fill="#2a8fd0"/><rect x="90.2" y="34.3" width="4.0" height="0.5" fill="#9aa0a8" opacity=".6"/><rect x="89.4" y="35.3" width="5.4" height="0.7" fill="#6d7378" opacity=".45"/><rect x="101.8" y="29.0" width="5.6" height="4.59" rx="0.4" fill="#3daee9"/><rect x="101.8" y="29.0" width="2.52" height="1.40" fill="#2a8fd0"/><rect x="102.6" y="34.3" width="4.0" height="0.5" fill="#9aa0a8" opacity=".6"/><rect x="101.8" y="35.3" width="5.4" height="0.7" fill="#6d7378" opacity=".45"/><rect x="86" y="63" width="6" height="1.6" fill="#eff0f1"/><rect x="87" y="63.5" width="4" height="0.6" fill="#6d7378" opacity=".5"/><rect x="97.6" y="52.8" width="68.2" height="39.6" fill="#000" opacity=".22"/><rect x="98" y="53" width="67.4" height="38.7" fill="#f2f3f4"/><rect x="98" y="53" width="67.4" height="2.6" fill="#e9ebec"/><rect x="125" y="54" width="10" height="0.7" fill="#6c7176" opacity=".55"/><rect x="98.6" y="53.6" width="1.3" height="1.3" fill="#3daee9"/><rect x="99" y="57.6" width="4" height="4.2" rx="0.3" fill="#2d9bf0"/><rect x="100.2" y="58.8" width="1.6" height="1.8" fill="#eaf6ff"/><rect x="104" y="58" width="3" height="1.1" fill="#6c7176"/><rect x="104" y="60.2" width="4.6" height="0.9" fill="#6c7176" opacity=".7"/><rect x="114.6" y="57.6" width="5" height="2" fill="#f2f3f4"/><rect x="120.4" y="57.6" width="29" height="2" fill="#c4c7cb"/><rect x="115.4" y="58.3" width="3.2" height="0.7" fill="#6c7176" opacity=".7"/><rect x="121.4" y="58.3" width="10.6" height="0.7" fill="#6c7176" opacity=".7"/><rect x="134.6" y="58.3" width="5" height="0.7" fill="#6c7176" opacity=".7"/><rect x="141.6" y="58.3" width="6.6" height="0.7" fill="#6c7176" opacity=".7"/><rect x="114.2" y="61.6" width="47" height="0.7" fill="#6c7176" opacity="0.55"/><rect x="114.2" y="63" width="46" height="0.7" fill="#6c7176" opacity="0.5"/><rect x="114.2" y="64.8" width="48" height="0.7" fill="#6c7176" opacity="0.55"/><rect x="114.2" y="66.2" width="38" height="0.7" fill="#6c7176" opacity="0.5"/><rect x="114.2" y="67.6" width="7" height="0.7" fill="#6c7176" opacity="0.5"/><rect x="114.2" y="70" width="49" height="0.7" fill="#6c7176" opacity="0.55"/><rect x="114.2" y="72.2" width="44" height="0.7" fill="#6c7176" opacity="0.5"/><rect x="114.2" y="73.6" width="40" height="0.7" fill="#6c7176" opacity="0.5"/><rect x="114.2" y="76.4" width="45" height="0.7" fill="#6c7176" opacity="0.55"/><rect x="114.2" y="77.8" width="11" height="0.7" fill="#6c7176" opacity="0.5"/><rect x="117" y="77.8" width="10" height="0.7" fill="#3d9ad8" opacity=".8"/><rect x="131" y="73.6" width="12" height="0.7" fill="#3d9ad8" opacity=".7"/><rect x="130" y="63" width="9" height="0.7" fill="#3d9ad8" opacity=".7"/><path d="M100.4 72.6L99.4 69.4L103 69.2L104.6 67.2L106.6 69L110 65.6L110.6 69.6L112 71L110.2 73.4L112.4 76.4L109.4 77.6L110.6 81.2L107.6 81L106.8 85L103.6 82.2L100 83.2L101.6 79.8L99.2 78L101.4 75.6Z" fill="#58be2e"/><path d="M103.4 70.4L106 69.6L106.4 72.6L104.2 73.4Z" fill="#1d2a16"/><path d="M106 68.2L107.8 65L109 68.4L107.4 70Z" fill="#f2a526"/><path d="M100.8 74.6L104.4 73.8L104.6 77.6L101.6 78.2Z" fill="#e03424"/><path d="M107 74L110.4 74.6L109.6 77.4L106.6 77Z" fill="#e03424"/><path d="M103 79L106.4 78.4L106.2 82L103.6 81.6Z" fill="#8ad850"/><rect x="157.6" y="87.8" width="5.8" height="2.4" rx="0.3" fill="#c4c7cb" opacity=".7"/><rect x="159.6" y="88.7" width="2.6" height="0.7" fill="#6c7176" opacity=".7"/><rect x="0" y="99.6" width="171.4" height="4" fill="#d6d9f2"/><path d="M2 102.8L3.6 100.6" stroke="#353a48" stroke-width="0.7"/><rect x="5.6" y="100.3" width="3.2" height="3" fill="#2b2f3a"/><rect x="10.6" y="100.5" width="2.6" height="2.8" rx="0.4" fill="#2d9bf0"/><rect x="14.4" y="100" width="4.4" height="3.6" fill="#7cc4f0"/><rect x="14.4" y="100" width="4.4" height="1" fill="#d9ecfa"/><rect x="143.6" y="100.9" width="1.2" height="1.6" fill="#353a48" opacity=".55"/><rect x="146.4" y="100.9" width="0.9" height="1.6" fill="#353a48" opacity=".55"/><rect x="148.8" y="100.9" width="1" height="1.6" fill="#353a48" opacity=".55"/><rect x="151.4" y="100.9" width="0.9" height="1.6" fill="#353a48" opacity=".55"/><rect x="153.6" y="100.9" width="2.2" height="1.6" fill="#353a48" opacity=".55"/><rect x="157" y="100.9" width="0.5" height="1.6" fill="#353a48" opacity=".55"/><rect x="160" y="100.9" width="4.6" height="1.6" fill="#353a48" opacity=".55"/><rect x="167" y="100.9" width="1" height="1.6" fill="#353a48" opacity=".55"/></svg></div><div class="lbl" style="left:488px;top:30.5px"><span class="t" style="letter-spacing:-0.259px">Brisa</span></div>
<div class="card" style="left:34px;top:78px"><svg width="172" height="104.6" viewBox="0 0 172 104" preserveAspectRatio="none"><defs><linearGradient id="w9a" x1="0" y1="0" x2="1" y2="1"><stop offset="0" stop-color="#4a68e2"/><stop offset="0.55" stop-color="#3f47bc"/><stop offset="1" stop-color="#3a30a2"/></linearGradient><linearGradient id="w9t" x1="0" y1="0" x2="1" y2="0.6"><stop offset="0.3" stop-color="#4a52c8"/><stop offset="1" stop-color="#3f47bc"/></linearGradient><linearGradient id="w9d" gradientUnits="userSpaceOnUse" x1="0" y1="0" x2="80" y2="52"><stop offset="0" stop-color="#8799f9"/><stop offset="0.75" stop-color="#6c70ee"/><stop offset="1" stop-color="#6c70ee" stop-opacity=".6"/></linearGradient><linearGradient id="w9o" x1="0.6" y1="0" x2="0.3" y2="1"><stop offset="0" stop-color="#e84a7c"/><stop offset="1" stop-color="#ff8a48"/></linearGradient><filter id="w9f" x="-5%" y="-5%" width="110%" height="110%"><feGaussianBlur stdDeviation="0.55"/></filter><filter id="w9g" x="-5%" y="-5%" width="110%" height="110%"><feGaussianBlur stdDeviation="1.6"/></filter><clipPath id="w9c"><rect width="172" height="104"/></clipPath></defs><rect width="172" height="104" fill="url(#w9a)"/><g clip-path="url(#w9c)"><path d="M50 -2H174V40L100 34Z" fill="url(#w9t)" filter="url(#w9g)"/><g filter="url(#w9f)"><path d="M-2 -2H56L100 22L72 52L56 50L-2 10.6Z" fill="url(#w9d)"/><path d="M-3 2.5L62 46" stroke="#b0bcff" stroke-width="2.2" opacity="0.35"/><path d="M-3 6.5L58 47" stroke="#6277ec" stroke-width="1.0" opacity="0.40"/><path d="M8 -3L72 38" stroke="#b0bcff" stroke-width="2.4" opacity="0.28"/><path d="M20 -3L80 34" stroke="#6277ec" stroke-width="1.2" opacity="0.35"/><path d="M30 -3L84 30" stroke="#b0bcff" stroke-width="2.0" opacity="0.25"/><path d="M40 -3L90 26" stroke="#6277ec" stroke-width="1" opacity="0.35"/><path d="M-3 -1L66 42" stroke="#b0bcff" stroke-width="1" opacity="0.25"/><path d="M53 -3L98 24" stroke="#a0b4ff" stroke-width="1.1" opacity="0.55"/><path d="M57 -3L101 22" stroke="#6277ec" stroke-width="0.8" opacity="0.40"/><path d="M60.5 -3L103 20.5" stroke="#a0b4ff" stroke-width="0.8" opacity="0.45"/><path d="M-3 9.6L57 49.6" stroke="#a0b4ff" stroke-width="1.0" opacity="0.75"/><path d="M-3 14L48 48" stroke="#a0b4ff" stroke-width="0.7" opacity="0.30"/><path d="M62 52L88 72" stroke="#8a58f0" stroke-width="2.4" opacity=".75" stroke-linecap="round"/><path d="M58 50L70 60" stroke="#a0b4ff" stroke-width="1" opacity=".5"/></g><circle cx="42.3" cy="25.5" r="1.25" fill="#c23cc0" opacity=".85"/><g filter="url(#w9f)"><ellipse cx="46.6" cy="38.8" rx="3" ry="4.5" transform="rotate(-38 46.6 38.8)" fill="#f0524e"/><path d="M44.6 37.6L49 41" stroke="#6c70ee" stroke-width="0.7" opacity=".7"/><path d="M60.4 47.6L69.4 36.4L75 37L75 54.6L65.6 58.6L60.8 54Z" fill="url(#w9o)"/></g></g><rect x="0.9" y="49.1" width="58.3" height="50" fill="#d5d9f1"/><rect x="0.9" y="49.1" width="20.3" height="50" fill="#c7cdee"/><rect x="0.9" y="49.1" width="58.3" height="3.6" fill="#dfe2f4"/><rect x="22" y="49.8" width="29" height="2.3" rx="0.5" fill="#f3f4fb"/><rect x="1.2" y="54" width="19.6" height="3.4" fill="#a9cdf2"/><rect x="2.2" y="55.1" width="1.3" height="1.3" fill="#5d6478" opacity=".85"/><rect x="4.6" y="55.35" width="7" height="0.8" fill="#5d6478" opacity=".55"/><rect x="2.2" y="58.6" width="1.3" height="1.3" fill="#5d6478" opacity=".85"/><rect x="4.6" y="58.85" width="10" height="0.8" fill="#5d6478" opacity=".55"/><rect x="2.2" y="62.6" width="1.3" height="1.3" fill="#5d6478" opacity=".85"/><rect x="4.6" y="62.85" width="9" height="0.8" fill="#5d6478" opacity=".55"/><rect x="2.2" y="66.2" width="1.3" height="1.3" fill="#5d6478" opacity=".85"/><rect x="4.6" y="66.45" width="6" height="0.8" fill="#5d6478" opacity=".55"/><rect x="2.2" y="69.60000000000001" width="1.3" height="1.3" fill="#5d6478" opacity=".85"/><rect x="4.6" y="69.85000000000001" width="5" height="0.8" fill="#5d6478" opacity=".55"/><rect x="2.2" y="72.80000000000001" width="1.3" height="1.3" fill="#5d6478" opacity=".85"/><rect x="4.6" y="73.05000000000001" width="6" height="0.8" fill="#5d6478" opacity=".55"/><rect x="2.2" y="76.2" width="1.3" height="1.3" fill="#5d6478" opacity=".85"/><rect x="4.6" y="76.45" width="4" height="0.8" fill="#5d6478" opacity=".55"/><rect x="2.2" y="79.60000000000001" width="1.3" height="1.3" fill="#5d6478" opacity=".85"/><rect x="4.6" y="79.85000000000001" width="6" height="0.8" fill="#5d6478" opacity=".55"/><rect x="2.2" y="82.80000000000001" width="1.3" height="1.3" fill="#5d6478" opacity=".85"/><rect x="4.6" y="83.05000000000001" width="7" height="0.8" fill="#5d6478" opacity=".55"/><rect x="2.2" y="86.2" width="1.3" height="1.3" fill="#5d6478" opacity=".85"/><rect x="4.6" y="86.45" width="5" height="0.8" fill="#5d6478" opacity=".55"/><rect x="2.2" y="89.60000000000001" width="1.3" height="1.3" fill="#5d6478" opacity=".85"/><rect x="4.6" y="89.85000000000001" width="5" height="0.8" fill="#5d6478" opacity=".55"/><rect x="2.2" y="92.80000000000001" width="1.3" height="1.3" fill="#5d6478" opacity=".85"/><rect x="4.6" y="93.05000000000001" width="4" height="0.8" fill="#5d6478" opacity=".55"/><rect x="22.5" y="54" width="8.6" height="9.8" fill="#a9cdf2" opacity=".8"/><rect x="24.8" y="55" width="3.8" height="4.2" fill="#1d1f24"/><rect x="25.6" y="55.8" width="2.2" height="1.6" fill="#aeb4bd"/><rect x="33.6" y="55.4" width="4.4" height="3.6" fill="#7cc4f0"/><rect x="33.6" y="55.4" width="4.4" height="0.9" fill="#d9ecfa"/><rect x="43" y="55.2" width="4.2" height="3.9" rx="0.5" fill="#2d9bf0"/><rect x="44.4" y="56.4" width="1.4" height="1.4" fill="#dff"/><rect x="24.4" y="60.4" width="4.6" height="0.7" fill="#5d6478" opacity=".5"/><rect x="33.6" y="60.4" width="4.6" height="0.7" fill="#5d6478" opacity=".5"/><rect x="43" y="60.4" width="4.6" height="0.7" fill="#5d6478" opacity=".5"/><rect x="0.9" y="96.4" width="58.3" height="2.7" fill="#dfe2f4"/><rect x="1.6" y="97.3" width="8" height="0.9" fill="#5d6478" opacity=".5"/><rect x="12.6" y="97.3" width="5" height="0.9" fill="#5d6478" opacity=".5"/><rect x="23.6" y="97.3" width="4" height="0.9" fill="#5d6478" opacity=".5"/><rect x="30" y="97.3" width="6.6" height="0.9" fill="#5d6478" opacity=".5"/><rect x="38.6" y="97.3" width="5.6" height="0.9" fill="#5d6478" opacity=".5"/><rect x="46" y="97.3" width="8.4" height="0.9" fill="#5d6478" opacity=".5"/><rect x="70.6" y="9.4" width="90.8" height="56.6" fill="#000" opacity=".18"/><rect x="71" y="9.7" width="90" height="55.5" fill="#ffffff"/><rect x="71" y="9.7" width="90" height="7" fill="#eff0f1"/><rect x="71" y="16.7" width="14.4" height="48.5" fill="#f7f8f8"/><rect x="110" y="10.6" width="12" height="0.8" fill="#6d7378" opacity=".5"/><rect x="78" y="13.8" width="1.4" height="1.6" fill="#6d7378"/><rect x="87" y="14.2" width="4" height="0.8" fill="#6d7378" opacity=".6"/><rect x="148.6" y="13.6" width="1.6" height="1.6" fill="#6d7378"/><rect x="151" y="14" width="2.6" height="0.8" fill="#6d7378" opacity=".6"/><rect x="155.6" y="13.8" width="1" height="1.4" fill="#6d7378" opacity=".7"/><rect x="158" y="13.8" width="1.2" height="1.4" fill="#6d7378"/><rect x="71.4" y="20.4" width="13.6" height="2.6" fill="#bfe0f6"/><rect x="72.2" y="21.2" width="1.1" height="1.1" fill="#6d7378" opacity=".8"/><rect x="74.2" y="21.4" width="4" height="0.7" fill="#6d7378" opacity=".5"/><rect x="72.2" y="23.7" width="1.1" height="1.1" fill="#6d7378" opacity=".8"/><rect x="74.2" y="23.9" width="5" height="0.7" fill="#6d7378" opacity=".5"/><rect x="72.2" y="25.9" width="1.1" height="1.1" fill="#6d7378" opacity=".8"/><rect x="74.2" y="26.099999999999998" width="7" height="0.7" fill="#6d7378" opacity=".5"/><rect x="72.2" y="28.3" width="1.1" height="1.1" fill="#6d7378" opacity=".8"/><rect x="74.2" y="28.5" width="6" height="0.7" fill="#6d7378" opacity=".5"/><rect x="72.2" y="30.9" width="1.1" height="1.1" fill="#6d7378" opacity=".8"/><rect x="74.2" y="31.099999999999998" width="4" height="0.7" fill="#6d7378" opacity=".5"/><rect x="72.2" y="33.5" width="1.1" height="1.1" fill="#6d7378" opacity=".8"/><rect x="74.2" y="33.7" width="5" height="0.7" fill="#6d7378" opacity=".5"/><rect x="72.2" y="35.7" width="1.1" height="1.1" fill="#6d7378" opacity=".8"/><rect x="74.2" y="35.900000000000006" width="4" height="0.7" fill="#6d7378" opacity=".5"/><rect x="72.2" y="37.9" width="1.1" height="1.1" fill="#6d7378" opacity=".8"/><rect x="74.2" y="38.1" width="3" height="0.7" fill="#6d7378" opacity=".5"/><rect x="72.2" y="41.5" width="1.1" height="1.1" fill="#6d7378" opacity=".8"/><rect x="74.2" y="41.7" width="3" height="0.7" fill="#6d7378" opacity=".5"/><rect x="72.2" y="43.7" width="1.1" height="1.1" fill="#6d7378" opacity=".8"/><rect x="74.2" y="43.900000000000006" width="5" height="0.7" fill="#6d7378" opacity=".5"/><rect x="72.2" y="47.1" width="1.1" height="1.1" fill="#6d7378" opacity=".8"/><rect x="74.2" y="47.300000000000004" width="3" height="0.7" fill="#6d7378" opacity=".5"/><rect x="72.2" y="49.3" width="1.1" height="1.1" fill="#6d7378" opacity=".8"/><rect x="74.2" y="49.5" width="6" height="0.7" fill="#6d7378" opacity=".5"/><rect x="72.2" y="51.7" width="1.1" height="1.1" fill="#6d7378" opacity=".8"/><rect x="74.2" y="51.900000000000006" width="8" height="0.7" fill="#6d7378" opacity=".5"/><rect x="72.2" y="54.9" width="1.1" height="1.1" fill="#6d7378" opacity=".8"/><rect x="74.2" y="55.1" width="3" height="0.7" fill="#6d7378" opacity=".5"/><rect x="72.2" y="56.9" width="1.1" height="1.1" fill="#6d7378" opacity=".8"/><rect x="74.2" y="57.1" width="9" height="0.7" fill="#6d7378" opacity=".5"/><rect x="89.4" y="19.2" width="5.6" height="5" fill="#1d9ab5"/><path d="M95.0 19.2L91.4 22.4L93.0 24.2H95.0Z" fill="#c9377f"/><path d="M89.4 24.2L91.4 22.4L93.80000000000001 24.2Z" fill="#35615f"/><rect x="89.4" y="19.2" width="5.6" height="1" fill="#4a5057" opacity=".8"/><rect x="89.2" y="25.6" width="5" height="0.7" fill="#6d7378" opacity=".45"/><rect x="101.8" y="19.2" width="5.6" height="4.59" rx="0.4" fill="#3daee9"/><rect x="101.8" y="19.2" width="2.52" height="1.40" fill="#2a8fd0"/><rect x="102.6" y="24.5" width="4.0" height="0.5" fill="#9aa0a8" opacity=".6"/><rect x="101.6" y="25.6" width="6.6" height="0.7" fill="#6d7378" opacity=".45"/><rect x="114.1" y="19.2" width="5.6" height="4.59" rx="0.4" fill="#3daee9"/><rect x="114.1" y="19.2" width="2.52" height="1.40" fill="#2a8fd0"/><rect x="114.9" y="24.5" width="4.0" height="0.5" fill="#9aa0a8" opacity=".6"/><rect x="113.89999999999999" y="25.6" width="6" height="0.7" fill="#6d7378" opacity=".45"/><rect x="126.4" y="19.2" width="5.6" height="4.59" rx="0.4" fill="#3daee9"/><rect x="126.4" y="19.2" width="2.52" height="1.40" fill="#2a8fd0"/><rect x="127.2" y="24.5" width="4.0" height="0.5" fill="#9aa0a8" opacity=".6"/><rect x="126.2" y="25.6" width="4" height="0.7" fill="#6d7378" opacity=".45"/><rect x="138.7" y="19.2" width="5.6" height="4.59" rx="0.4" fill="#3daee9"/><rect x="138.7" y="19.2" width="2.52" height="1.40" fill="#2a8fd0"/><rect x="139.5" y="24.5" width="4.0" height="0.5" fill="#9aa0a8" opacity=".6"/><rect x="139.5" y="20.6" width="4" height="2.4" fill="#f2e9b0"/><rect x="139.5" y="21.8" width="4" height="1.2" fill="#4a9a54"/><rect x="138.5" y="25.6" width="5" height="0.7" fill="#6d7378" opacity=".45"/><rect x="151.0" y="19.2" width="5.6" height="4.59" rx="0.4" fill="#3daee9"/><rect x="151.0" y="19.2" width="2.52" height="1.40" fill="#2a8fd0"/><rect x="151.8" y="24.5" width="4.0" height="0.5" fill="#9aa0a8" opacity=".6"/><rect x="150.8" y="25.6" width="4.4" height="0.7" fill="#6d7378" opacity=".45"/><rect x="89.4" y="29.0" width="5.6" height="4.59" rx="0.4" fill="#3daee9"/><rect x="89.4" y="29.0" width="2.52" height="1.40" fill="#2a8fd0"/><rect x="90.2" y="34.3" width="4.0" height="0.5" fill="#9aa0a8" opacity=".6"/><rect x="89.4" y="35.3" width="5.4" height="0.7" fill="#6d7378" opacity=".45"/><rect x="101.8" y="29.0" width="5.6" height="4.59" rx="0.4" fill="#3daee9"/><rect x="101.8" y="29.0" width="2.52" height="1.40" fill="#2a8fd0"/><rect x="102.6" y="34.3" width="4.0" height="0.5" fill="#9aa0a8" opacity=".6"/><rect x="101.8" y="35.3" width="5.4" height="0.7" fill="#6d7378" opacity=".45"/><rect x="86" y="63" width="6" height="1.6" fill="#eff0f1"/><rect x="87" y="63.5" width="4" height="0.6" fill="#6d7378" opacity=".5"/><rect x="97.6" y="52.8" width="68.2" height="39.6" fill="#000" opacity=".22"/><rect x="98" y="53" width="67.4" height="38.7" fill="#f2f3f4"/><rect x="98" y="53" width="67.4" height="2.6" fill="#e9ebec"/><rect x="125" y="54" width="10" height="0.7" fill="#6c7176" opacity=".55"/><rect x="98.6" y="53.6" width="1.3" height="1.3" fill="#3daee9"/><rect x="99" y="57.6" width="4" height="4.2" rx="0.3" fill="#2d9bf0"/><rect x="100.2" y="58.8" width="1.6" height="1.8" fill="#eaf6ff"/><rect x="104" y="58" width="3" height="1.1" fill="#6c7176"/><rect x="104" y="60.2" width="4.6" height="0.9" fill="#6c7176" opacity=".7"/><rect x="114.6" y="57.6" width="5" height="2" fill="#f2f3f4"/><rect x="120.4" y="57.6" width="29" height="2" fill="#c4c7cb"/><rect x="115.4" y="58.3" width="3.2" height="0.7" fill="#6c7176" opacity=".7"/><rect x="121.4" y="58.3" width="10.6" height="0.7" fill="#6c7176" opacity=".7"/><rect x="134.6" y="58.3" width="5" height="0.7" fill="#6c7176" opacity=".7"/><rect x="141.6" y="58.3" width="6.6" height="0.7" fill="#6c7176" opacity=".7"/><rect x="114.2" y="61.6" width="47" height="0.7" fill="#6c7176" opacity="0.55"/><rect x="114.2" y="63" width="46" height="0.7" fill="#6c7176" opacity="0.5"/><rect x="114.2" y="64.8" width="48" height="0.7" fill="#6c7176" opacity="0.55"/><rect x="114.2" y="66.2" width="38" height="0.7" fill="#6c7176" opacity="0.5"/><rect x="114.2" y="67.6" width="7" height="0.7" fill="#6c7176" opacity="0.5"/><rect x="114.2" y="70" width="49" height="0.7" fill="#6c7176" opacity="0.55"/><rect x="114.2" y="72.2" width="44" height="0.7" fill="#6c7176" opacity="0.5"/><rect x="114.2" y="73.6" width="40" height="0.7" fill="#6c7176" opacity="0.5"/><rect x="114.2" y="76.4" width="45" height="0.7" fill="#6c7176" opacity="0.55"/><rect x="114.2" y="77.8" width="11" height="0.7" fill="#6c7176" opacity="0.5"/><rect x="117" y="77.8" width="10" height="0.7" fill="#3d9ad8" opacity=".8"/><rect x="131" y="73.6" width="12" height="0.7" fill="#3d9ad8" opacity=".7"/><rect x="130" y="63" width="9" height="0.7" fill="#3d9ad8" opacity=".7"/><path d="M100.4 72.6L99.4 69.4L103 69.2L104.6 67.2L106.6 69L110 65.6L110.6 69.6L112 71L110.2 73.4L112.4 76.4L109.4 77.6L110.6 81.2L107.6 81L106.8 85L103.6 82.2L100 83.2L101.6 79.8L99.2 78L101.4 75.6Z" fill="#58be2e"/><path d="M103.4 70.4L106 69.6L106.4 72.6L104.2 73.4Z" fill="#1d2a16"/><path d="M106 68.2L107.8 65L109 68.4L107.4 70Z" fill="#f2a526"/><path d="M100.8 74.6L104.4 73.8L104.6 77.6L101.6 78.2Z" fill="#e03424"/><path d="M107 74L110.4 74.6L109.6 77.4L106.6 77Z" fill="#e03424"/><path d="M103 79L106.4 78.4L106.2 82L103.6 81.6Z" fill="#8ad850"/><rect x="157.6" y="87.8" width="5.8" height="2.4" rx="0.3" fill="#c4c7cb" opacity=".7"/><rect x="159.6" y="88.7" width="2.6" height="0.7" fill="#6c7176" opacity=".7"/><rect x="0" y="99.6" width="171.4" height="4" fill="#d6d9f2"/><path d="M2 102.8L3.6 100.6" stroke="#353a48" stroke-width="0.7"/><rect x="5.6" y="100.3" width="3.2" height="3" fill="#2b2f3a"/><rect x="10.6" y="100.5" width="2.6" height="2.8" rx="0.4" fill="#2d9bf0"/><rect x="14.4" y="100" width="4.4" height="3.6" fill="#7cc4f0"/><rect x="14.4" y="100" width="4.4" height="1" fill="#d9ecfa"/><rect x="143.6" y="100.9" width="1.2" height="1.6" fill="#353a48" opacity=".55"/><rect x="146.4" y="100.9" width="0.9" height="1.6" fill="#353a48" opacity=".55"/><rect x="148.8" y="100.9" width="1" height="1.6" fill="#353a48" opacity=".55"/><rect x="151.4" y="100.9" width="0.9" height="1.6" fill="#353a48" opacity=".55"/><rect x="153.6" y="100.9" width="2.2" height="1.6" fill="#353a48" opacity=".55"/><rect x="157" y="100.9" width="0.5" height="1.6" fill="#353a48" opacity=".55"/><rect x="160" y="100.9" width="4.6" height="1.6" fill="#353a48" opacity=".55"/><rect x="167" y="100.9" width="1" height="1.6" fill="#353a48" opacity=".55"/></svg></div><div class="lbl" style="left:2px;top:197.5px"><span class="t" style="letter-spacing:-0.259px">Brisa</span></div>
<div class="card" style="left:277px;top:78px"><svg width="172" height="104.6" viewBox="0 0 172 104" preserveAspectRatio="none"><defs><linearGradient id="w10a" x1="0" y1="0" x2="1" y2="1"><stop offset="0" stop-color="#4a68e2"/><stop offset="0.55" stop-color="#3f47bc"/><stop offset="1" stop-color="#3a30a2"/></linearGradient><linearGradient id="w10t" x1="0" y1="0" x2="1" y2="0.6"><stop offset="0.3" stop-color="#4a52c8"/><stop offset="1" stop-color="#3f47bc"/></linearGradient><linearGradient id="w10d" gradientUnits="userSpaceOnUse" x1="0" y1="0" x2="80" y2="52"><stop offset="0" stop-color="#8799f9"/><stop offset="0.75" stop-color="#6c70ee"/><stop offset="1" stop-color="#6c70ee" stop-opacity=".6"/></linearGradient><linearGradient id="w10o" x1="0.6" y1="0" x2="0.3" y2="1"><stop offset="0" stop-color="#e84a7c"/><stop offset="1" stop-color="#ff8a48"/></linearGradient><filter id="w10f" x="-5%" y="-5%" width="110%" height="110%"><feGaussianBlur stdDeviation="0.55"/></filter><filter id="w10g" x="-5%" y="-5%" width="110%" height="110%"><feGaussianBlur stdDeviation="1.6"/></filter><clipPath id="w10c"><rect width="172" height="104"/></clipPath></defs><rect width="172" height="104" fill="url(#w10a)"/><g clip-path="url(#w10c)"><path d="M50 -2H174V40L100 34Z" fill="url(#w10t)" filter="url(#w10g)"/><g filter="url(#w10f)"><path d="M-2 -2H56L100 22L72 52L56 50L-2 10.6Z" fill="url(#w10d)"/><path d="M-3 2.5L62 46" stroke="#b0bcff" stroke-width="2.2" opacity="0.35"/><path d="M-3 6.5L58 47" stroke="#6277ec" stroke-width="1.0" opacity="0.40"/><path d="M8 -3L72 38" stroke="#b0bcff" stroke-width="2.4" opacity="0.28"/><path d="M20 -3L80 34" stroke="#6277ec" stroke-width="1.2" opacity="0.35"/><path d="M30 -3L84 30" stroke="#b0bcff" stroke-width="2.0" opacity="0.25"/><path d="M40 -3L90 26" stroke="#6277ec" stroke-width="1" opacity="0.35"/><path d="M-3 -1L66 42" stroke="#b0bcff" stroke-width="1" opacity="0.25"/><path d="M53 -3L98 24" stroke="#a0b4ff" stroke-width="1.1" opacity="0.55"/><path d="M57 -3L101 22" stroke="#6277ec" stroke-width="0.8" opacity="0.40"/><path d="M60.5 -3L103 20.5" stroke="#a0b4ff" stroke-width="0.8" opacity="0.45"/><path d="M-3 9.6L57 49.6" stroke="#a0b4ff" stroke-width="1.0" opacity="0.75"/><path d="M-3 14L48 48" stroke="#a0b4ff" stroke-width="0.7" opacity="0.30"/><path d="M62 52L88 72" stroke="#8a58f0" stroke-width="2.4" opacity=".75" stroke-linecap="round"/><path d="M58 50L70 60" stroke="#a0b4ff" stroke-width="1" opacity=".5"/></g><circle cx="42.3" cy="25.5" r="1.25" fill="#c23cc0" opacity=".85"/><g filter="url(#w10f)"><ellipse cx="46.6" cy="38.8" rx="3" ry="4.5" transform="rotate(-38 46.6 38.8)" fill="#f0524e"/><path d="M44.6 37.6L49 41" stroke="#6c70ee" stroke-width="0.7" opacity=".7"/><path d="M60.4 47.6L69.4 36.4L75 37L75 54.6L65.6 58.6L60.8 54Z" fill="url(#w10o)"/></g></g><rect x="0.9" y="49.1" width="58.3" height="50" fill="#d5d9f1"/><rect x="0.9" y="49.1" width="20.3" height="50" fill="#c7cdee"/><rect x="0.9" y="49.1" width="58.3" height="3.6" fill="#dfe2f4"/><rect x="22" y="49.8" width="29" height="2.3" rx="0.5" fill="#f3f4fb"/><rect x="1.2" y="54" width="19.6" height="3.4" fill="#a9cdf2"/><rect x="2.2" y="55.1" width="1.3" height="1.3" fill="#5d6478" opacity=".85"/><rect x="4.6" y="55.35" width="7" height="0.8" fill="#5d6478" opacity=".55"/><rect x="2.2" y="58.6" width="1.3" height="1.3" fill="#5d6478" opacity=".85"/><rect x="4.6" y="58.85" width="10" height="0.8" fill="#5d6478" opacity=".55"/><rect x="2.2" y="62.6" width="1.3" height="1.3" fill="#5d6478" opacity=".85"/><rect x="4.6" y="62.85" width="9" height="0.8" fill="#5d6478" opacity=".55"/><rect x="2.2" y="66.2" width="1.3" height="1.3" fill="#5d6478" opacity=".85"/><rect x="4.6" y="66.45" width="6" height="0.8" fill="#5d6478" opacity=".55"/><rect x="2.2" y="69.60000000000001" width="1.3" height="1.3" fill="#5d6478" opacity=".85"/><rect x="4.6" y="69.85000000000001" width="5" height="0.8" fill="#5d6478" opacity=".55"/><rect x="2.2" y="72.80000000000001" width="1.3" height="1.3" fill="#5d6478" opacity=".85"/><rect x="4.6" y="73.05000000000001" width="6" height="0.8" fill="#5d6478" opacity=".55"/><rect x="2.2" y="76.2" width="1.3" height="1.3" fill="#5d6478" opacity=".85"/><rect x="4.6" y="76.45" width="4" height="0.8" fill="#5d6478" opacity=".55"/><rect x="2.2" y="79.60000000000001" width="1.3" height="1.3" fill="#5d6478" opacity=".85"/><rect x="4.6" y="79.85000000000001" width="6" height="0.8" fill="#5d6478" opacity=".55"/><rect x="2.2" y="82.80000000000001" width="1.3" height="1.3" fill="#5d6478" opacity=".85"/><rect x="4.6" y="83.05000000000001" width="7" height="0.8" fill="#5d6478" opacity=".55"/><rect x="2.2" y="86.2" width="1.3" height="1.3" fill="#5d6478" opacity=".85"/><rect x="4.6" y="86.45" width="5" height="0.8" fill="#5d6478" opacity=".55"/><rect x="2.2" y="89.60000000000001" width="1.3" height="1.3" fill="#5d6478" opacity=".85"/><rect x="4.6" y="89.85000000000001" width="5" height="0.8" fill="#5d6478" opacity=".55"/><rect x="2.2" y="92.80000000000001" width="1.3" height="1.3" fill="#5d6478" opacity=".85"/><rect x="4.6" y="93.05000000000001" width="4" height="0.8" fill="#5d6478" opacity=".55"/><rect x="22.5" y="54" width="8.6" height="9.8" fill="#a9cdf2" opacity=".8"/><rect x="24.8" y="55" width="3.8" height="4.2" fill="#1d1f24"/><rect x="25.6" y="55.8" width="2.2" height="1.6" fill="#aeb4bd"/><rect x="33.6" y="55.4" width="4.4" height="3.6" fill="#7cc4f0"/><rect x="33.6" y="55.4" width="4.4" height="0.9" fill="#d9ecfa"/><rect x="43" y="55.2" width="4.2" height="3.9" rx="0.5" fill="#2d9bf0"/><rect x="44.4" y="56.4" width="1.4" height="1.4" fill="#dff"/><rect x="24.4" y="60.4" width="4.6" height="0.7" fill="#5d6478" opacity=".5"/><rect x="33.6" y="60.4" width="4.6" height="0.7" fill="#5d6478" opacity=".5"/><rect x="43" y="60.4" width="4.6" height="0.7" fill="#5d6478" opacity=".5"/><rect x="0.9" y="96.4" width="58.3" height="2.7" fill="#dfe2f4"/><rect x="1.6" y="97.3" width="8" height="0.9" fill="#5d6478" opacity=".5"/><rect x="12.6" y="97.3" width="5" height="0.9" fill="#5d6478" opacity=".5"/><rect x="23.6" y="97.3" width="4" height="0.9" fill="#5d6478" opacity=".5"/><rect x="30" y="97.3" width="6.6" height="0.9" fill="#5d6478" opacity=".5"/><rect x="38.6" y="97.3" width="5.6" height="0.9" fill="#5d6478" opacity=".5"/><rect x="46" y="97.3" width="8.4" height="0.9" fill="#5d6478" opacity=".5"/><rect x="70.6" y="9.4" width="90.8" height="56.6" fill="#000" opacity=".18"/><rect x="71" y="9.7" width="90" height="55.5" fill="#ffffff"/><rect x="71" y="9.7" width="90" height="7" fill="#eff0f1"/><rect x="71" y="16.7" width="14.4" height="48.5" fill="#f7f8f8"/><rect x="110" y="10.6" width="12" height="0.8" fill="#6d7378" opacity=".5"/><rect x="78" y="13.8" width="1.4" height="1.6" fill="#6d7378"/><rect x="87" y="14.2" width="4" height="0.8" fill="#6d7378" opacity=".6"/><rect x="148.6" y="13.6" width="1.6" height="1.6" fill="#6d7378"/><rect x="151" y="14" width="2.6" height="0.8" fill="#6d7378" opacity=".6"/><rect x="155.6" y="13.8" width="1" height="1.4" fill="#6d7378" opacity=".7"/><rect x="158" y="13.8" width="1.2" height="1.4" fill="#6d7378"/><rect x="71.4" y="20.4" width="13.6" height="2.6" fill="#bfe0f6"/><rect x="72.2" y="21.2" width="1.1" height="1.1" fill="#6d7378" opacity=".8"/><rect x="74.2" y="21.4" width="4" height="0.7" fill="#6d7378" opacity=".5"/><rect x="72.2" y="23.7" width="1.1" height="1.1" fill="#6d7378" opacity=".8"/><rect x="74.2" y="23.9" width="5" height="0.7" fill="#6d7378" opacity=".5"/><rect x="72.2" y="25.9" width="1.1" height="1.1" fill="#6d7378" opacity=".8"/><rect x="74.2" y="26.099999999999998" width="7" height="0.7" fill="#6d7378" opacity=".5"/><rect x="72.2" y="28.3" width="1.1" height="1.1" fill="#6d7378" opacity=".8"/><rect x="74.2" y="28.5" width="6" height="0.7" fill="#6d7378" opacity=".5"/><rect x="72.2" y="30.9" width="1.1" height="1.1" fill="#6d7378" opacity=".8"/><rect x="74.2" y="31.099999999999998" width="4" height="0.7" fill="#6d7378" opacity=".5"/><rect x="72.2" y="33.5" width="1.1" height="1.1" fill="#6d7378" opacity=".8"/><rect x="74.2" y="33.7" width="5" height="0.7" fill="#6d7378" opacity=".5"/><rect x="72.2" y="35.7" width="1.1" height="1.1" fill="#6d7378" opacity=".8"/><rect x="74.2" y="35.900000000000006" width="4" height="0.7" fill="#6d7378" opacity=".5"/><rect x="72.2" y="37.9" width="1.1" height="1.1" fill="#6d7378" opacity=".8"/><rect x="74.2" y="38.1" width="3" height="0.7" fill="#6d7378" opacity=".5"/><rect x="72.2" y="41.5" width="1.1" height="1.1" fill="#6d7378" opacity=".8"/><rect x="74.2" y="41.7" width="3" height="0.7" fill="#6d7378" opacity=".5"/><rect x="72.2" y="43.7" width="1.1" height="1.1" fill="#6d7378" opacity=".8"/><rect x="74.2" y="43.900000000000006" width="5" height="0.7" fill="#6d7378" opacity=".5"/><rect x="72.2" y="47.1" width="1.1" height="1.1" fill="#6d7378" opacity=".8"/><rect x="74.2" y="47.300000000000004" width="3" height="0.7" fill="#6d7378" opacity=".5"/><rect x="72.2" y="49.3" width="1.1" height="1.1" fill="#6d7378" opacity=".8"/><rect x="74.2" y="49.5" width="6" height="0.7" fill="#6d7378" opacity=".5"/><rect x="72.2" y="51.7" width="1.1" height="1.1" fill="#6d7378" opacity=".8"/><rect x="74.2" y="51.900000000000006" width="8" height="0.7" fill="#6d7378" opacity=".5"/><rect x="72.2" y="54.9" width="1.1" height="1.1" fill="#6d7378" opacity=".8"/><rect x="74.2" y="55.1" width="3" height="0.7" fill="#6d7378" opacity=".5"/><rect x="72.2" y="56.9" width="1.1" height="1.1" fill="#6d7378" opacity=".8"/><rect x="74.2" y="57.1" width="9" height="0.7" fill="#6d7378" opacity=".5"/><rect x="89.4" y="19.2" width="5.6" height="5" fill="#1d9ab5"/><path d="M95.0 19.2L91.4 22.4L93.0 24.2H95.0Z" fill="#c9377f"/><path d="M89.4 24.2L91.4 22.4L93.80000000000001 24.2Z" fill="#35615f"/><rect x="89.4" y="19.2" width="5.6" height="1" fill="#4a5057" opacity=".8"/><rect x="89.2" y="25.6" width="5" height="0.7" fill="#6d7378" opacity=".45"/><rect x="101.8" y="19.2" width="5.6" height="4.59" rx="0.4" fill="#3daee9"/><rect x="101.8" y="19.2" width="2.52" height="1.40" fill="#2a8fd0"/><rect x="102.6" y="24.5" width="4.0" height="0.5" fill="#9aa0a8" opacity=".6"/><rect x="101.6" y="25.6" width="6.6" height="0.7" fill="#6d7378" opacity=".45"/><rect x="114.1" y="19.2" width="5.6" height="4.59" rx="0.4" fill="#3daee9"/><rect x="114.1" y="19.2" width="2.52" height="1.40" fill="#2a8fd0"/><rect x="114.9" y="24.5" width="4.0" height="0.5" fill="#9aa0a8" opacity=".6"/><rect x="113.89999999999999" y="25.6" width="6" height="0.7" fill="#6d7378" opacity=".45"/><rect x="126.4" y="19.2" width="5.6" height="4.59" rx="0.4" fill="#3daee9"/><rect x="126.4" y="19.2" width="2.52" height="1.40" fill="#2a8fd0"/><rect x="127.2" y="24.5" width="4.0" height="0.5" fill="#9aa0a8" opacity=".6"/><rect x="126.2" y="25.6" width="4" height="0.7" fill="#6d7378" opacity=".45"/><rect x="138.7" y="19.2" width="5.6" height="4.59" rx="0.4" fill="#3daee9"/><rect x="138.7" y="19.2" width="2.52" height="1.40" fill="#2a8fd0"/><rect x="139.5" y="24.5" width="4.0" height="0.5" fill="#9aa0a8" opacity=".6"/><rect x="139.5" y="20.6" width="4" height="2.4" fill="#f2e9b0"/><rect x="139.5" y="21.8" width="4" height="1.2" fill="#4a9a54"/><rect x="138.5" y="25.6" width="5" height="0.7" fill="#6d7378" opacity=".45"/><rect x="151.0" y="19.2" width="5.6" height="4.59" rx="0.4" fill="#3daee9"/><rect x="151.0" y="19.2" width="2.52" height="1.40" fill="#2a8fd0"/><rect x="151.8" y="24.5" width="4.0" height="0.5" fill="#9aa0a8" opacity=".6"/><rect x="150.8" y="25.6" width="4.4" height="0.7" fill="#6d7378" opacity=".45"/><rect x="89.4" y="29.0" width="5.6" height="4.59" rx="0.4" fill="#3daee9"/><rect x="89.4" y="29.0" width="2.52" height="1.40" fill="#2a8fd0"/><rect x="90.2" y="34.3" width="4.0" height="0.5" fill="#9aa0a8" opacity=".6"/><rect x="89.4" y="35.3" width="5.4" height="0.7" fill="#6d7378" opacity=".45"/><rect x="101.8" y="29.0" width="5.6" height="4.59" rx="0.4" fill="#3daee9"/><rect x="101.8" y="29.0" width="2.52" height="1.40" fill="#2a8fd0"/><rect x="102.6" y="34.3" width="4.0" height="0.5" fill="#9aa0a8" opacity=".6"/><rect x="101.8" y="35.3" width="5.4" height="0.7" fill="#6d7378" opacity=".45"/><rect x="86" y="63" width="6" height="1.6" fill="#eff0f1"/><rect x="87" y="63.5" width="4" height="0.6" fill="#6d7378" opacity=".5"/><rect x="97.6" y="52.8" width="68.2" height="39.6" fill="#000" opacity=".22"/><rect x="98" y="53" width="67.4" height="38.7" fill="#f2f3f4"/><rect x="98" y="53" width="67.4" height="2.6" fill="#e9ebec"/><rect x="125" y="54" width="10" height="0.7" fill="#6c7176" opacity=".55"/><rect x="98.6" y="53.6" width="1.3" height="1.3" fill="#3daee9"/><rect x="99" y="57.6" width="4" height="4.2" rx="0.3" fill="#2d9bf0"/><rect x="100.2" y="58.8" width="1.6" height="1.8" fill="#eaf6ff"/><rect x="104" y="58" width="3" height="1.1" fill="#6c7176"/><rect x="104" y="60.2" width="4.6" height="0.9" fill="#6c7176" opacity=".7"/><rect x="114.6" y="57.6" width="5" height="2" fill="#f2f3f4"/><rect x="120.4" y="57.6" width="29" height="2" fill="#c4c7cb"/><rect x="115.4" y="58.3" width="3.2" height="0.7" fill="#6c7176" opacity=".7"/><rect x="121.4" y="58.3" width="10.6" height="0.7" fill="#6c7176" opacity=".7"/><rect x="134.6" y="58.3" width="5" height="0.7" fill="#6c7176" opacity=".7"/><rect x="141.6" y="58.3" width="6.6" height="0.7" fill="#6c7176" opacity=".7"/><rect x="114.2" y="61.6" width="47" height="0.7" fill="#6c7176" opacity="0.55"/><rect x="114.2" y="63" width="46" height="0.7" fill="#6c7176" opacity="0.5"/><rect x="114.2" y="64.8" width="48" height="0.7" fill="#6c7176" opacity="0.55"/><rect x="114.2" y="66.2" width="38" height="0.7" fill="#6c7176" opacity="0.5"/><rect x="114.2" y="67.6" width="7" height="0.7" fill="#6c7176" opacity="0.5"/><rect x="114.2" y="70" width="49" height="0.7" fill="#6c7176" opacity="0.55"/><rect x="114.2" y="72.2" width="44" height="0.7" fill="#6c7176" opacity="0.5"/><rect x="114.2" y="73.6" width="40" height="0.7" fill="#6c7176" opacity="0.5"/><rect x="114.2" y="76.4" width="45" height="0.7" fill="#6c7176" opacity="0.55"/><rect x="114.2" y="77.8" width="11" height="0.7" fill="#6c7176" opacity="0.5"/><rect x="117" y="77.8" width="10" height="0.7" fill="#3d9ad8" opacity=".8"/><rect x="131" y="73.6" width="12" height="0.7" fill="#3d9ad8" opacity=".7"/><rect x="130" y="63" width="9" height="0.7" fill="#3d9ad8" opacity=".7"/><path d="M100.4 72.6L99.4 69.4L103 69.2L104.6 67.2L106.6 69L110 65.6L110.6 69.6L112 71L110.2 73.4L112.4 76.4L109.4 77.6L110.6 81.2L107.6 81L106.8 85L103.6 82.2L100 83.2L101.6 79.8L99.2 78L101.4 75.6Z" fill="#58be2e"/><path d="M103.4 70.4L106 69.6L106.4 72.6L104.2 73.4Z" fill="#1d2a16"/><path d="M106 68.2L107.8 65L109 68.4L107.4 70Z" fill="#f2a526"/><path d="M100.8 74.6L104.4 73.8L104.6 77.6L101.6 78.2Z" fill="#e03424"/><path d="M107 74L110.4 74.6L109.6 77.4L106.6 77Z" fill="#e03424"/><path d="M103 79L106.4 78.4L106.2 82L103.6 81.6Z" fill="#8ad850"/><rect x="157.6" y="87.8" width="5.8" height="2.4" rx="0.3" fill="#c4c7cb" opacity=".7"/><rect x="159.6" y="88.7" width="2.6" height="0.7" fill="#6c7176" opacity=".7"/><rect x="0" y="99.6" width="171.4" height="4" fill="#d6d9f2"/><path d="M2 102.8L3.6 100.6" stroke="#353a48" stroke-width="0.7"/><rect x="5.6" y="100.3" width="3.2" height="3" fill="#2b2f3a"/><rect x="10.6" y="100.5" width="2.6" height="2.8" rx="0.4" fill="#2d9bf0"/><rect x="14.4" y="100" width="4.4" height="3.6" fill="#7cc4f0"/><rect x="14.4" y="100" width="4.4" height="1" fill="#d9ecfa"/><rect x="143.6" y="100.9" width="1.2" height="1.6" fill="#353a48" opacity=".55"/><rect x="146.4" y="100.9" width="0.9" height="1.6" fill="#353a48" opacity=".55"/><rect x="148.8" y="100.9" width="1" height="1.6" fill="#353a48" opacity=".55"/><rect x="151.4" y="100.9" width="0.9" height="1.6" fill="#353a48" opacity=".55"/><rect x="153.6" y="100.9" width="2.2" height="1.6" fill="#353a48" opacity=".55"/><rect x="157" y="100.9" width="0.5" height="1.6" fill="#353a48" opacity=".55"/><rect x="160" y="100.9" width="4.6" height="1.6" fill="#353a48" opacity=".55"/><rect x="167" y="100.9" width="1" height="1.6" fill="#353a48" opacity=".55"/></svg></div><div class="lbl" style="left:245px;top:197.5px"><span class="t" style="letter-spacing:-0.259px">Brisa</span></div>
<div class="card" style="left:520px;top:78px"><svg width="172" height="104.6" viewBox="0 0 172 104" preserveAspectRatio="none"><defs><linearGradient id="w11a" x1="0" y1="0" x2="1" y2="1"><stop offset="0" stop-color="#4a68e2"/><stop offset="0.55" stop-color="#3f47bc"/><stop offset="1" stop-color="#3a30a2"/></linearGradient><linearGradient id="w11t" x1="0" y1="0" x2="1" y2="0.6"><stop offset="0.3" stop-color="#4a52c8"/><stop offset="1" stop-color="#3f47bc"/></linearGradient><linearGradient id="w11d" gradientUnits="userSpaceOnUse" x1="0" y1="0" x2="80" y2="52"><stop offset="0" stop-color="#8799f9"/><stop offset="0.75" stop-color="#6c70ee"/><stop offset="1" stop-color="#6c70ee" stop-opacity=".6"/></linearGradient><linearGradient id="w11o" x1="0.6" y1="0" x2="0.3" y2="1"><stop offset="0" stop-color="#e84a7c"/><stop offset="1" stop-color="#ff8a48"/></linearGradient><filter id="w11f" x="-5%" y="-5%" width="110%" height="110%"><feGaussianBlur stdDeviation="0.55"/></filter><filter id="w11g" x="-5%" y="-5%" width="110%" height="110%"><feGaussianBlur stdDeviation="1.6"/></filter><clipPath id="w11c"><rect width="172" height="104"/></clipPath></defs><rect width="172" height="104" fill="url(#w11a)"/><g clip-path="url(#w11c)"><path d="M50 -2H174V40L100 34Z" fill="url(#w11t)" filter="url(#w11g)"/><g filter="url(#w11f)"><path d="M-2 -2H56L100 22L72 52L56 50L-2 10.6Z" fill="url(#w11d)"/><path d="M-3 2.5L62 46" stroke="#b0bcff" stroke-width="2.2" opacity="0.35"/><path d="M-3 6.5L58 47" stroke="#6277ec" stroke-width="1.0" opacity="0.40"/><path d="M8 -3L72 38" stroke="#b0bcff" stroke-width="2.4" opacity="0.28"/><path d="M20 -3L80 34" stroke="#6277ec" stroke-width="1.2" opacity="0.35"/><path d="M30 -3L84 30" stroke="#b0bcff" stroke-width="2.0" opacity="0.25"/><path d="M40 -3L90 26" stroke="#6277ec" stroke-width="1" opacity="0.35"/><path d="M-3 -1L66 42" stroke="#b0bcff" stroke-width="1" opacity="0.25"/><path d="M53 -3L98 24" stroke="#a0b4ff" stroke-width="1.1" opacity="0.55"/><path d="M57 -3L101 22" stroke="#6277ec" stroke-width="0.8" opacity="0.40"/><path d="M60.5 -3L103 20.5" stroke="#a0b4ff" stroke-width="0.8" opacity="0.45"/><path d="M-3 9.6L57 49.6" stroke="#a0b4ff" stroke-width="1.0" opacity="0.75"/><path d="M-3 14L48 48" stroke="#a0b4ff" stroke-width="0.7" opacity="0.30"/><path d="M62 52L88 72" stroke="#8a58f0" stroke-width="2.4" opacity=".75" stroke-linecap="round"/><path d="M58 50L70 60" stroke="#a0b4ff" stroke-width="1" opacity=".5"/></g><circle cx="42.3" cy="25.5" r="1.25" fill="#c23cc0" opacity=".85"/><g filter="url(#w11f)"><ellipse cx="46.6" cy="38.8" rx="3" ry="4.5" transform="rotate(-38 46.6 38.8)" fill="#f0524e"/><path d="M44.6 37.6L49 41" stroke="#6c70ee" stroke-width="0.7" opacity=".7"/><path d="M60.4 47.6L69.4 36.4L75 37L75 54.6L65.6 58.6L60.8 54Z" fill="url(#w11o)"/></g></g><rect x="0.9" y="49.1" width="58.3" height="50" fill="#d5d9f1"/><rect x="0.9" y="49.1" width="20.3" height="50" fill="#c7cdee"/><rect x="0.9" y="49.1" width="58.3" height="3.6" fill="#dfe2f4"/><rect x="22" y="49.8" width="29" height="2.3" rx="0.5" fill="#f3f4fb"/><rect x="1.2" y="54" width="19.6" height="3.4" fill="#a9cdf2"/><rect x="2.2" y="55.1" width="1.3" height="1.3" fill="#5d6478" opacity=".85"/><rect x="4.6" y="55.35" width="7" height="0.8" fill="#5d6478" opacity=".55"/><rect x="2.2" y="58.6" width="1.3" height="1.3" fill="#5d6478" opacity=".85"/><rect x="4.6" y="58.85" width="10" height="0.8" fill="#5d6478" opacity=".55"/><rect x="2.2" y="62.6" width="1.3" height="1.3" fill="#5d6478" opacity=".85"/><rect x="4.6" y="62.85" width="9" height="0.8" fill="#5d6478" opacity=".55"/><rect x="2.2" y="66.2" width="1.3" height="1.3" fill="#5d6478" opacity=".85"/><rect x="4.6" y="66.45" width="6" height="0.8" fill="#5d6478" opacity=".55"/><rect x="2.2" y="69.60000000000001" width="1.3" height="1.3" fill="#5d6478" opacity=".85"/><rect x="4.6" y="69.85000000000001" width="5" height="0.8" fill="#5d6478" opacity=".55"/><rect x="2.2" y="72.80000000000001" width="1.3" height="1.3" fill="#5d6478" opacity=".85"/><rect x="4.6" y="73.05000000000001" width="6" height="0.8" fill="#5d6478" opacity=".55"/><rect x="2.2" y="76.2" width="1.3" height="1.3" fill="#5d6478" opacity=".85"/><rect x="4.6" y="76.45" width="4" height="0.8" fill="#5d6478" opacity=".55"/><rect x="2.2" y="79.60000000000001" width="1.3" height="1.3" fill="#5d6478" opacity=".85"/><rect x="4.6" y="79.85000000000001" width="6" height="0.8" fill="#5d6478" opacity=".55"/><rect x="2.2" y="82.80000000000001" width="1.3" height="1.3" fill="#5d6478" opacity=".85"/><rect x="4.6" y="83.05000000000001" width="7" height="0.8" fill="#5d6478" opacity=".55"/><rect x="2.2" y="86.2" width="1.3" height="1.3" fill="#5d6478" opacity=".85"/><rect x="4.6" y="86.45" width="5" height="0.8" fill="#5d6478" opacity=".55"/><rect x="2.2" y="89.60000000000001" width="1.3" height="1.3" fill="#5d6478" opacity=".85"/><rect x="4.6" y="89.85000000000001" width="5" height="0.8" fill="#5d6478" opacity=".55"/><rect x="2.2" y="92.80000000000001" width="1.3" height="1.3" fill="#5d6478" opacity=".85"/><rect x="4.6" y="93.05000000000001" width="4" height="0.8" fill="#5d6478" opacity=".55"/><rect x="22.5" y="54" width="8.6" height="9.8" fill="#a9cdf2" opacity=".8"/><rect x="24.8" y="55" width="3.8" height="4.2" fill="#1d1f24"/><rect x="25.6" y="55.8" width="2.2" height="1.6" fill="#aeb4bd"/><rect x="33.6" y="55.4" width="4.4" height="3.6" fill="#7cc4f0"/><rect x="33.6" y="55.4" width="4.4" height="0.9" fill="#d9ecfa"/><rect x="43" y="55.2" width="4.2" height="3.9" rx="0.5" fill="#2d9bf0"/><rect x="44.4" y="56.4" width="1.4" height="1.4" fill="#dff"/><rect x="24.4" y="60.4" width="4.6" height="0.7" fill="#5d6478" opacity=".5"/><rect x="33.6" y="60.4" width="4.6" height="0.7" fill="#5d6478" opacity=".5"/><rect x="43" y="60.4" width="4.6" height="0.7" fill="#5d6478" opacity=".5"/><rect x="0.9" y="96.4" width="58.3" height="2.7" fill="#dfe2f4"/><rect x="1.6" y="97.3" width="8" height="0.9" fill="#5d6478" opacity=".5"/><rect x="12.6" y="97.3" width="5" height="0.9" fill="#5d6478" opacity=".5"/><rect x="23.6" y="97.3" width="4" height="0.9" fill="#5d6478" opacity=".5"/><rect x="30" y="97.3" width="6.6" height="0.9" fill="#5d6478" opacity=".5"/><rect x="38.6" y="97.3" width="5.6" height="0.9" fill="#5d6478" opacity=".5"/><rect x="46" y="97.3" width="8.4" height="0.9" fill="#5d6478" opacity=".5"/><rect x="70.6" y="9.4" width="90.8" height="56.6" fill="#000" opacity=".18"/><rect x="71" y="9.7" width="90" height="55.5" fill="#ffffff"/><rect x="71" y="9.7" width="90" height="7" fill="#eff0f1"/><rect x="71" y="16.7" width="14.4" height="48.5" fill="#f7f8f8"/><rect x="110" y="10.6" width="12" height="0.8" fill="#6d7378" opacity=".5"/><rect x="78" y="13.8" width="1.4" height="1.6" fill="#6d7378"/><rect x="87" y="14.2" width="4" height="0.8" fill="#6d7378" opacity=".6"/><rect x="148.6" y="13.6" width="1.6" height="1.6" fill="#6d7378"/><rect x="151" y="14" width="2.6" height="0.8" fill="#6d7378" opacity=".6"/><rect x="155.6" y="13.8" width="1" height="1.4" fill="#6d7378" opacity=".7"/><rect x="158" y="13.8" width="1.2" height="1.4" fill="#6d7378"/><rect x="71.4" y="20.4" width="13.6" height="2.6" fill="#bfe0f6"/><rect x="72.2" y="21.2" width="1.1" height="1.1" fill="#6d7378" opacity=".8"/><rect x="74.2" y="21.4" width="4" height="0.7" fill="#6d7378" opacity=".5"/><rect x="72.2" y="23.7" width="1.1" height="1.1" fill="#6d7378" opacity=".8"/><rect x="74.2" y="23.9" width="5" height="0.7" fill="#6d7378" opacity=".5"/><rect x="72.2" y="25.9" width="1.1" height="1.1" fill="#6d7378" opacity=".8"/><rect x="74.2" y="26.099999999999998" width="7" height="0.7" fill="#6d7378" opacity=".5"/><rect x="72.2" y="28.3" width="1.1" height="1.1" fill="#6d7378" opacity=".8"/><rect x="74.2" y="28.5" width="6" height="0.7" fill="#6d7378" opacity=".5"/><rect x="72.2" y="30.9" width="1.1" height="1.1" fill="#6d7378" opacity=".8"/><rect x="74.2" y="31.099999999999998" width="4" height="0.7" fill="#6d7378" opacity=".5"/><rect x="72.2" y="33.5" width="1.1" height="1.1" fill="#6d7378" opacity=".8"/><rect x="74.2" y="33.7" width="5" height="0.7" fill="#6d7378" opacity=".5"/><rect x="72.2" y="35.7" width="1.1" height="1.1" fill="#6d7378" opacity=".8"/><rect x="74.2" y="35.900000000000006" width="4" height="0.7" fill="#6d7378" opacity=".5"/><rect x="72.2" y="37.9" width="1.1" height="1.1" fill="#6d7378" opacity=".8"/><rect x="74.2" y="38.1" width="3" height="0.7" fill="#6d7378" opacity=".5"/><rect x="72.2" y="41.5" width="1.1" height="1.1" fill="#6d7378" opacity=".8"/><rect x="74.2" y="41.7" width="3" height="0.7" fill="#6d7378" opacity=".5"/><rect x="72.2" y="43.7" width="1.1" height="1.1" fill="#6d7378" opacity=".8"/><rect x="74.2" y="43.900000000000006" width="5" height="0.7" fill="#6d7378" opacity=".5"/><rect x="72.2" y="47.1" width="1.1" height="1.1" fill="#6d7378" opacity=".8"/><rect x="74.2" y="47.300000000000004" width="3" height="0.7" fill="#6d7378" opacity=".5"/><rect x="72.2" y="49.3" width="1.1" height="1.1" fill="#6d7378" opacity=".8"/><rect x="74.2" y="49.5" width="6" height="0.7" fill="#6d7378" opacity=".5"/><rect x="72.2" y="51.7" width="1.1" height="1.1" fill="#6d7378" opacity=".8"/><rect x="74.2" y="51.900000000000006" width="8" height="0.7" fill="#6d7378" opacity=".5"/><rect x="72.2" y="54.9" width="1.1" height="1.1" fill="#6d7378" opacity=".8"/><rect x="74.2" y="55.1" width="3" height="0.7" fill="#6d7378" opacity=".5"/><rect x="72.2" y="56.9" width="1.1" height="1.1" fill="#6d7378" opacity=".8"/><rect x="74.2" y="57.1" width="9" height="0.7" fill="#6d7378" opacity=".5"/><rect x="89.4" y="19.2" width="5.6" height="5" fill="#1d9ab5"/><path d="M95.0 19.2L91.4 22.4L93.0 24.2H95.0Z" fill="#c9377f"/><path d="M89.4 24.2L91.4 22.4L93.80000000000001 24.2Z" fill="#35615f"/><rect x="89.4" y="19.2" width="5.6" height="1" fill="#4a5057" opacity=".8"/><rect x="89.2" y="25.6" width="5" height="0.7" fill="#6d7378" opacity=".45"/><rect x="101.8" y="19.2" width="5.6" height="4.59" rx="0.4" fill="#3daee9"/><rect x="101.8" y="19.2" width="2.52" height="1.40" fill="#2a8fd0"/><rect x="102.6" y="24.5" width="4.0" height="0.5" fill="#9aa0a8" opacity=".6"/><rect x="101.6" y="25.6" width="6.6" height="0.7" fill="#6d7378" opacity=".45"/><rect x="114.1" y="19.2" width="5.6" height="4.59" rx="0.4" fill="#3daee9"/><rect x="114.1" y="19.2" width="2.52" height="1.40" fill="#2a8fd0"/><rect x="114.9" y="24.5" width="4.0" height="0.5" fill="#9aa0a8" opacity=".6"/><rect x="113.89999999999999" y="25.6" width="6" height="0.7" fill="#6d7378" opacity=".45"/><rect x="126.4" y="19.2" width="5.6" height="4.59" rx="0.4" fill="#3daee9"/><rect x="126.4" y="19.2" width="2.52" height="1.40" fill="#2a8fd0"/><rect x="127.2" y="24.5" width="4.0" height="0.5" fill="#9aa0a8" opacity=".6"/><rect x="126.2" y="25.6" width="4" height="0.7" fill="#6d7378" opacity=".45"/><rect x="138.7" y="19.2" width="5.6" height="4.59" rx="0.4" fill="#3daee9"/><rect x="138.7" y="19.2" width="2.52" height="1.40" fill="#2a8fd0"/><rect x="139.5" y="24.5" width="4.0" height="0.5" fill="#9aa0a8" opacity=".6"/><rect x="139.5" y="20.6" width="4" height="2.4" fill="#f2e9b0"/><rect x="139.5" y="21.8" width="4" height="1.2" fill="#4a9a54"/><rect x="138.5" y="25.6" width="5" height="0.7" fill="#6d7378" opacity=".45"/><rect x="151.0" y="19.2" width="5.6" height="4.59" rx="0.4" fill="#3daee9"/><rect x="151.0" y="19.2" width="2.52" height="1.40" fill="#2a8fd0"/><rect x="151.8" y="24.5" width="4.0" height="0.5" fill="#9aa0a8" opacity=".6"/><rect x="150.8" y="25.6" width="4.4" height="0.7" fill="#6d7378" opacity=".45"/><rect x="89.4" y="29.0" width="5.6" height="4.59" rx="0.4" fill="#3daee9"/><rect x="89.4" y="29.0" width="2.52" height="1.40" fill="#2a8fd0"/><rect x="90.2" y="34.3" width="4.0" height="0.5" fill="#9aa0a8" opacity=".6"/><rect x="89.4" y="35.3" width="5.4" height="0.7" fill="#6d7378" opacity=".45"/><rect x="101.8" y="29.0" width="5.6" height="4.59" rx="0.4" fill="#3daee9"/><rect x="101.8" y="29.0" width="2.52" height="1.40" fill="#2a8fd0"/><rect x="102.6" y="34.3" width="4.0" height="0.5" fill="#9aa0a8" opacity=".6"/><rect x="101.8" y="35.3" width="5.4" height="0.7" fill="#6d7378" opacity=".45"/><rect x="86" y="63" width="6" height="1.6" fill="#eff0f1"/><rect x="87" y="63.5" width="4" height="0.6" fill="#6d7378" opacity=".5"/><rect x="97.6" y="52.8" width="68.2" height="39.6" fill="#000" opacity=".22"/><rect x="98" y="53" width="67.4" height="38.7" fill="#f2f3f4"/><rect x="98" y="53" width="67.4" height="2.6" fill="#e9ebec"/><rect x="125" y="54" width="10" height="0.7" fill="#6c7176" opacity=".55"/><rect x="98.6" y="53.6" width="1.3" height="1.3" fill="#3daee9"/><rect x="99" y="57.6" width="4" height="4.2" rx="0.3" fill="#2d9bf0"/><rect x="100.2" y="58.8" width="1.6" height="1.8" fill="#eaf6ff"/><rect x="104" y="58" width="3" height="1.1" fill="#6c7176"/><rect x="104" y="60.2" width="4.6" height="0.9" fill="#6c7176" opacity=".7"/><rect x="114.6" y="57.6" width="5" height="2" fill="#f2f3f4"/><rect x="120.4" y="57.6" width="29" height="2" fill="#c4c7cb"/><rect x="115.4" y="58.3" width="3.2" height="0.7" fill="#6c7176" opacity=".7"/><rect x="121.4" y="58.3" width="10.6" height="0.7" fill="#6c7176" opacity=".7"/><rect x="134.6" y="58.3" width="5" height="0.7" fill="#6c7176" opacity=".7"/><rect x="141.6" y="58.3" width="6.6" height="0.7" fill="#6c7176" opacity=".7"/><rect x="114.2" y="61.6" width="47" height="0.7" fill="#6c7176" opacity="0.55"/><rect x="114.2" y="63" width="46" height="0.7" fill="#6c7176" opacity="0.5"/><rect x="114.2" y="64.8" width="48" height="0.7" fill="#6c7176" opacity="0.55"/><rect x="114.2" y="66.2" width="38" height="0.7" fill="#6c7176" opacity="0.5"/><rect x="114.2" y="67.6" width="7" height="0.7" fill="#6c7176" opacity="0.5"/><rect x="114.2" y="70" width="49" height="0.7" fill="#6c7176" opacity="0.55"/><rect x="114.2" y="72.2" width="44" height="0.7" fill="#6c7176" opacity="0.5"/><rect x="114.2" y="73.6" width="40" height="0.7" fill="#6c7176" opacity="0.5"/><rect x="114.2" y="76.4" width="45" height="0.7" fill="#6c7176" opacity="0.55"/><rect x="114.2" y="77.8" width="11" height="0.7" fill="#6c7176" opacity="0.5"/><rect x="117" y="77.8" width="10" height="0.7" fill="#3d9ad8" opacity=".8"/><rect x="131" y="73.6" width="12" height="0.7" fill="#3d9ad8" opacity=".7"/><rect x="130" y="63" width="9" height="0.7" fill="#3d9ad8" opacity=".7"/><path d="M100.4 72.6L99.4 69.4L103 69.2L104.6 67.2L106.6 69L110 65.6L110.6 69.6L112 71L110.2 73.4L112.4 76.4L109.4 77.6L110.6 81.2L107.6 81L106.8 85L103.6 82.2L100 83.2L101.6 79.8L99.2 78L101.4 75.6Z" fill="#58be2e"/><path d="M103.4 70.4L106 69.6L106.4 72.6L104.2 73.4Z" fill="#1d2a16"/><path d="M106 68.2L107.8 65L109 68.4L107.4 70Z" fill="#f2a526"/><path d="M100.8 74.6L104.4 73.8L104.6 77.6L101.6 78.2Z" fill="#e03424"/><path d="M107 74L110.4 74.6L109.6 77.4L106.6 77Z" fill="#e03424"/><path d="M103 79L106.4 78.4L106.2 82L103.6 81.6Z" fill="#8ad850"/><rect x="157.6" y="87.8" width="5.8" height="2.4" rx="0.3" fill="#c4c7cb" opacity=".7"/><rect x="159.6" y="88.7" width="2.6" height="0.7" fill="#6c7176" opacity=".7"/><rect x="0" y="99.6" width="171.4" height="4" fill="#d6d9f2"/><path d="M2 102.8L3.6 100.6" stroke="#353a48" stroke-width="0.7"/><rect x="5.6" y="100.3" width="3.2" height="3" fill="#2b2f3a"/><rect x="10.6" y="100.5" width="2.6" height="2.8" rx="0.4" fill="#2d9bf0"/><rect x="14.4" y="100" width="4.4" height="3.6" fill="#7cc4f0"/><rect x="14.4" y="100" width="4.4" height="1" fill="#d9ecfa"/><rect x="143.6" y="100.9" width="1.2" height="1.6" fill="#353a48" opacity=".55"/><rect x="146.4" y="100.9" width="0.9" height="1.6" fill="#353a48" opacity=".55"/><rect x="148.8" y="100.9" width="1" height="1.6" fill="#353a48" opacity=".55"/><rect x="151.4" y="100.9" width="0.9" height="1.6" fill="#353a48" opacity=".55"/><rect x="153.6" y="100.9" width="2.2" height="1.6" fill="#353a48" opacity=".55"/><rect x="157" y="100.9" width="0.5" height="1.6" fill="#353a48" opacity=".55"/><rect x="160" y="100.9" width="4.6" height="1.6" fill="#353a48" opacity=".55"/><rect x="167" y="100.9" width="1" height="1.6" fill="#353a48" opacity=".55"/></svg></div><div class="lbl" style="left:488px;top:197.5px"><span class="t" style="letter-spacing:-0.259px">Brisa</span></div>
<div class="card" style="left:34px;top:245px"><svg width="172" height="104.6" viewBox="0 0 172 104" preserveAspectRatio="none"><defs><linearGradient id="w12a" x1="0" y1="0" x2="1" y2="1"><stop offset="0" stop-color="#4a68e2"/><stop offset="0.55" stop-color="#3f47bc"/><stop offset="1" stop-color="#3a30a2"/></linearGradient><linearGradient id="w12t" x1="0" y1="0" x2="1" y2="0.6"><stop offset="0.3" stop-color="#4a52c8"/><stop offset="1" stop-color="#3f47bc"/></linearGradient><linearGradient id="w12d" gradientUnits="userSpaceOnUse" x1="0" y1="0" x2="80" y2="52"><stop offset="0" stop-color="#8799f9"/><stop offset="0.75" stop-color="#6c70ee"/><stop offset="1" stop-color="#6c70ee" stop-opacity=".6"/></linearGradient><linearGradient id="w12o" x1="0.6" y1="0" x2="0.3" y2="1"><stop offset="0" stop-color="#e84a7c"/><stop offset="1" stop-color="#ff8a48"/></linearGradient><filter id="w12f" x="-5%" y="-5%" width="110%" height="110%"><feGaussianBlur stdDeviation="0.55"/></filter><filter id="w12g" x="-5%" y="-5%" width="110%" height="110%"><feGaussianBlur stdDeviation="1.6"/></filter><clipPath id="w12c"><rect width="172" height="104"/></clipPath></defs><rect width="172" height="104" fill="url(#w12a)"/><g clip-path="url(#w12c)"><path d="M50 -2H174V40L100 34Z" fill="url(#w12t)" filter="url(#w12g)"/><g filter="url(#w12f)"><path d="M-2 -2H56L100 22L72 52L56 50L-2 10.6Z" fill="url(#w12d)"/><path d="M-3 2.5L62 46" stroke="#b0bcff" stroke-width="2.2" opacity="0.35"/><path d="M-3 6.5L58 47" stroke="#6277ec" stroke-width="1.0" opacity="0.40"/><path d="M8 -3L72 38" stroke="#b0bcff" stroke-width="2.4" opacity="0.28"/><path d="M20 -3L80 34" stroke="#6277ec" stroke-width="1.2" opacity="0.35"/><path d="M30 -3L84 30" stroke="#b0bcff" stroke-width="2.0" opacity="0.25"/><path d="M40 -3L90 26" stroke="#6277ec" stroke-width="1" opacity="0.35"/><path d="M-3 -1L66 42" stroke="#b0bcff" stroke-width="1" opacity="0.25"/><path d="M53 -3L98 24" stroke="#a0b4ff" stroke-width="1.1" opacity="0.55"/><path d="M57 -3L101 22" stroke="#6277ec" stroke-width="0.8" opacity="0.40"/><path d="M60.5 -3L103 20.5" stroke="#a0b4ff" stroke-width="0.8" opacity="0.45"/><path d="M-3 9.6L57 49.6" stroke="#a0b4ff" stroke-width="1.0" opacity="0.75"/><path d="M-3 14L48 48" stroke="#a0b4ff" stroke-width="0.7" opacity="0.30"/><path d="M62 52L88 72" stroke="#8a58f0" stroke-width="2.4" opacity=".75" stroke-linecap="round"/><path d="M58 50L70 60" stroke="#a0b4ff" stroke-width="1" opacity=".5"/></g><circle cx="42.3" cy="25.5" r="1.25" fill="#c23cc0" opacity=".85"/><g filter="url(#w12f)"><ellipse cx="46.6" cy="38.8" rx="3" ry="4.5" transform="rotate(-38 46.6 38.8)" fill="#f0524e"/><path d="M44.6 37.6L49 41" stroke="#6c70ee" stroke-width="0.7" opacity=".7"/><path d="M60.4 47.6L69.4 36.4L75 37L75 54.6L65.6 58.6L60.8 54Z" fill="url(#w12o)"/></g></g><rect x="0.9" y="49.1" width="58.3" height="50" fill="#d5d9f1"/><rect x="0.9" y="49.1" width="20.3" height="50" fill="#c7cdee"/><rect x="0.9" y="49.1" width="58.3" height="3.6" fill="#dfe2f4"/><rect x="22" y="49.8" width="29" height="2.3" rx="0.5" fill="#f3f4fb"/><rect x="1.2" y="54" width="19.6" height="3.4" fill="#a9cdf2"/><rect x="2.2" y="55.1" width="1.3" height="1.3" fill="#5d6478" opacity=".85"/><rect x="4.6" y="55.35" width="7" height="0.8" fill="#5d6478" opacity=".55"/><rect x="2.2" y="58.6" width="1.3" height="1.3" fill="#5d6478" opacity=".85"/><rect x="4.6" y="58.85" width="10" height="0.8" fill="#5d6478" opacity=".55"/><rect x="2.2" y="62.6" width="1.3" height="1.3" fill="#5d6478" opacity=".85"/><rect x="4.6" y="62.85" width="9" height="0.8" fill="#5d6478" opacity=".55"/><rect x="2.2" y="66.2" width="1.3" height="1.3" fill="#5d6478" opacity=".85"/><rect x="4.6" y="66.45" width="6" height="0.8" fill="#5d6478" opacity=".55"/><rect x="2.2" y="69.60000000000001" width="1.3" height="1.3" fill="#5d6478" opacity=".85"/><rect x="4.6" y="69.85000000000001" width="5" height="0.8" fill="#5d6478" opacity=".55"/><rect x="2.2" y="72.80000000000001" width="1.3" height="1.3" fill="#5d6478" opacity=".85"/><rect x="4.6" y="73.05000000000001" width="6" height="0.8" fill="#5d6478" opacity=".55"/><rect x="2.2" y="76.2" width="1.3" height="1.3" fill="#5d6478" opacity=".85"/><rect x="4.6" y="76.45" width="4" height="0.8" fill="#5d6478" opacity=".55"/><rect x="2.2" y="79.60000000000001" width="1.3" height="1.3" fill="#5d6478" opacity=".85"/><rect x="4.6" y="79.85000000000001" width="6" height="0.8" fill="#5d6478" opacity=".55"/><rect x="2.2" y="82.80000000000001" width="1.3" height="1.3" fill="#5d6478" opacity=".85"/><rect x="4.6" y="83.05000000000001" width="7" height="0.8" fill="#5d6478" opacity=".55"/><rect x="2.2" y="86.2" width="1.3" height="1.3" fill="#5d6478" opacity=".85"/><rect x="4.6" y="86.45" width="5" height="0.8" fill="#5d6478" opacity=".55"/><rect x="2.2" y="89.60000000000001" width="1.3" height="1.3" fill="#5d6478" opacity=".85"/><rect x="4.6" y="89.85000000000001" width="5" height="0.8" fill="#5d6478" opacity=".55"/><rect x="2.2" y="92.80000000000001" width="1.3" height="1.3" fill="#5d6478" opacity=".85"/><rect x="4.6" y="93.05000000000001" width="4" height="0.8" fill="#5d6478" opacity=".55"/><rect x="22.5" y="54" width="8.6" height="9.8" fill="#a9cdf2" opacity=".8"/><rect x="24.8" y="55" width="3.8" height="4.2" fill="#1d1f24"/><rect x="25.6" y="55.8" width="2.2" height="1.6" fill="#aeb4bd"/><rect x="33.6" y="55.4" width="4.4" height="3.6" fill="#7cc4f0"/><rect x="33.6" y="55.4" width="4.4" height="0.9" fill="#d9ecfa"/><rect x="43" y="55.2" width="4.2" height="3.9" rx="0.5" fill="#2d9bf0"/><rect x="44.4" y="56.4" width="1.4" height="1.4" fill="#dff"/><rect x="24.4" y="60.4" width="4.6" height="0.7" fill="#5d6478" opacity=".5"/><rect x="33.6" y="60.4" width="4.6" height="0.7" fill="#5d6478" opacity=".5"/><rect x="43" y="60.4" width="4.6" height="0.7" fill="#5d6478" opacity=".5"/><rect x="0.9" y="96.4" width="58.3" height="2.7" fill="#dfe2f4"/><rect x="1.6" y="97.3" width="8" height="0.9" fill="#5d6478" opacity=".5"/><rect x="12.6" y="97.3" width="5" height="0.9" fill="#5d6478" opacity=".5"/><rect x="23.6" y="97.3" width="4" height="0.9" fill="#5d6478" opacity=".5"/><rect x="30" y="97.3" width="6.6" height="0.9" fill="#5d6478" opacity=".5"/><rect x="38.6" y="97.3" width="5.6" height="0.9" fill="#5d6478" opacity=".5"/><rect x="46" y="97.3" width="8.4" height="0.9" fill="#5d6478" opacity=".5"/><rect x="70.6" y="9.4" width="90.8" height="56.6" fill="#000" opacity=".18"/><rect x="71" y="9.7" width="90" height="55.5" fill="#ffffff"/><rect x="71" y="9.7" width="90" height="7" fill="#eff0f1"/><rect x="71" y="16.7" width="14.4" height="48.5" fill="#f7f8f8"/><rect x="110" y="10.6" width="12" height="0.8" fill="#6d7378" opacity=".5"/><rect x="78" y="13.8" width="1.4" height="1.6" fill="#6d7378"/><rect x="87" y="14.2" width="4" height="0.8" fill="#6d7378" opacity=".6"/><rect x="148.6" y="13.6" width="1.6" height="1.6" fill="#6d7378"/><rect x="151" y="14" width="2.6" height="0.8" fill="#6d7378" opacity=".6"/><rect x="155.6" y="13.8" width="1" height="1.4" fill="#6d7378" opacity=".7"/><rect x="158" y="13.8" width="1.2" height="1.4" fill="#6d7378"/><rect x="71.4" y="20.4" width="13.6" height="2.6" fill="#bfe0f6"/><rect x="72.2" y="21.2" width="1.1" height="1.1" fill="#6d7378" opacity=".8"/><rect x="74.2" y="21.4" width="4" height="0.7" fill="#6d7378" opacity=".5"/><rect x="72.2" y="23.7" width="1.1" height="1.1" fill="#6d7378" opacity=".8"/><rect x="74.2" y="23.9" width="5" height="0.7" fill="#6d7378" opacity=".5"/><rect x="72.2" y="25.9" width="1.1" height="1.1" fill="#6d7378" opacity=".8"/><rect x="74.2" y="26.099999999999998" width="7" height="0.7" fill="#6d7378" opacity=".5"/><rect x="72.2" y="28.3" width="1.1" height="1.1" fill="#6d7378" opacity=".8"/><rect x="74.2" y="28.5" width="6" height="0.7" fill="#6d7378" opacity=".5"/><rect x="72.2" y="30.9" width="1.1" height="1.1" fill="#6d7378" opacity=".8"/><rect x="74.2" y="31.099999999999998" width="4" height="0.7" fill="#6d7378" opacity=".5"/><rect x="72.2" y="33.5" width="1.1" height="1.1" fill="#6d7378" opacity=".8"/><rect x="74.2" y="33.7" width="5" height="0.7" fill="#6d7378" opacity=".5"/><rect x="72.2" y="35.7" width="1.1" height="1.1" fill="#6d7378" opacity=".8"/><rect x="74.2" y="35.900000000000006" width="4" height="0.7" fill="#6d7378" opacity=".5"/><rect x="72.2" y="37.9" width="1.1" height="1.1" fill="#6d7378" opacity=".8"/><rect x="74.2" y="38.1" width="3" height="0.7" fill="#6d7378" opacity=".5"/><rect x="72.2" y="41.5" width="1.1" height="1.1" fill="#6d7378" opacity=".8"/><rect x="74.2" y="41.7" width="3" height="0.7" fill="#6d7378" opacity=".5"/><rect x="72.2" y="43.7" width="1.1" height="1.1" fill="#6d7378" opacity=".8"/><rect x="74.2" y="43.900000000000006" width="5" height="0.7" fill="#6d7378" opacity=".5"/><rect x="72.2" y="47.1" width="1.1" height="1.1" fill="#6d7378" opacity=".8"/><rect x="74.2" y="47.300000000000004" width="3" height="0.7" fill="#6d7378" opacity=".5"/><rect x="72.2" y="49.3" width="1.1" height="1.1" fill="#6d7378" opacity=".8"/><rect x="74.2" y="49.5" width="6" height="0.7" fill="#6d7378" opacity=".5"/><rect x="72.2" y="51.7" width="1.1" height="1.1" fill="#6d7378" opacity=".8"/><rect x="74.2" y="51.900000000000006" width="8" height="0.7" fill="#6d7378" opacity=".5"/><rect x="72.2" y="54.9" width="1.1" height="1.1" fill="#6d7378" opacity=".8"/><rect x="74.2" y="55.1" width="3" height="0.7" fill="#6d7378" opacity=".5"/><rect x="72.2" y="56.9" width="1.1" height="1.1" fill="#6d7378" opacity=".8"/><rect x="74.2" y="57.1" width="9" height="0.7" fill="#6d7378" opacity=".5"/><rect x="89.4" y="19.2" width="5.6" height="5" fill="#1d9ab5"/><path d="M95.0 19.2L91.4 22.4L93.0 24.2H95.0Z" fill="#c9377f"/><path d="M89.4 24.2L91.4 22.4L93.80000000000001 24.2Z" fill="#35615f"/><rect x="89.4" y="19.2" width="5.6" height="1" fill="#4a5057" opacity=".8"/><rect x="89.2" y="25.6" width="5" height="0.7" fill="#6d7378" opacity=".45"/><rect x="101.8" y="19.2" width="5.6" height="4.59" rx="0.4" fill="#3daee9"/><rect x="101.8" y="19.2" width="2.52" height="1.40" fill="#2a8fd0"/><rect x="102.6" y="24.5" width="4.0" height="0.5" fill="#9aa0a8" opacity=".6"/><rect x="101.6" y="25.6" width="6.6" height="0.7" fill="#6d7378" opacity=".45"/><rect x="114.1" y="19.2" width="5.6" height="4.59" rx="0.4" fill="#3daee9"/><rect x="114.1" y="19.2" width="2.52" height="1.40" fill="#2a8fd0"/><rect x="114.9" y="24.5" width="4.0" height="0.5" fill="#9aa0a8" opacity=".6"/><rect x="113.89999999999999" y="25.6" width="6" height="0.7" fill="#6d7378" opacity=".45"/><rect x="126.4" y="19.2" width="5.6" height="4.59" rx="0.4" fill="#3daee9"/><rect x="126.4" y="19.2" width="2.52" height="1.40" fill="#2a8fd0"/><rect x="127.2" y="24.5" width="4.0" height="0.5" fill="#9aa0a8" opacity=".6"/><rect x="126.2" y="25.6" width="4" height="0.7" fill="#6d7378" opacity=".45"/><rect x="138.7" y="19.2" width="5.6" height="4.59" rx="0.4" fill="#3daee9"/><rect x="138.7" y="19.2" width="2.52" height="1.40" fill="#2a8fd0"/><rect x="139.5" y="24.5" width="4.0" height="0.5" fill="#9aa0a8" opacity=".6"/><rect x="139.5" y="20.6" width="4" height="2.4" fill="#f2e9b0"/><rect x="139.5" y="21.8" width="4" height="1.2" fill="#4a9a54"/><rect x="138.5" y="25.6" width="5" height="0.7" fill="#6d7378" opacity=".45"/><rect x="151.0" y="19.2" width="5.6" height="4.59" rx="0.4" fill="#3daee9"/><rect x="151.0" y="19.2" width="2.52" height="1.40" fill="#2a8fd0"/><rect x="151.8" y="24.5" width="4.0" height="0.5" fill="#9aa0a8" opacity=".6"/><rect x="150.8" y="25.6" width="4.4" height="0.7" fill="#6d7378" opacity=".45"/><rect x="89.4" y="29.0" width="5.6" height="4.59" rx="0.4" fill="#3daee9"/><rect x="89.4" y="29.0" width="2.52" height="1.40" fill="#2a8fd0"/><rect x="90.2" y="34.3" width="4.0" height="0.5" fill="#9aa0a8" opacity=".6"/><rect x="89.4" y="35.3" width="5.4" height="0.7" fill="#6d7378" opacity=".45"/><rect x="101.8" y="29.0" width="5.6" height="4.59" rx="0.4" fill="#3daee9"/><rect x="101.8" y="29.0" width="2.52" height="1.40" fill="#2a8fd0"/><rect x="102.6" y="34.3" width="4.0" height="0.5" fill="#9aa0a8" opacity=".6"/><rect x="101.8" y="35.3" width="5.4" height="0.7" fill="#6d7378" opacity=".45"/><rect x="86" y="63" width="6" height="1.6" fill="#eff0f1"/><rect x="87" y="63.5" width="4" height="0.6" fill="#6d7378" opacity=".5"/><rect x="97.6" y="52.8" width="68.2" height="39.6" fill="#000" opacity=".22"/><rect x="98" y="53" width="67.4" height="38.7" fill="#f2f3f4"/><rect x="98" y="53" width="67.4" height="2.6" fill="#e9ebec"/><rect x="125" y="54" width="10" height="0.7" fill="#6c7176" opacity=".55"/><rect x="98.6" y="53.6" width="1.3" height="1.3" fill="#3daee9"/><rect x="99" y="57.6" width="4" height="4.2" rx="0.3" fill="#2d9bf0"/><rect x="100.2" y="58.8" width="1.6" height="1.8" fill="#eaf6ff"/><rect x="104" y="58" width="3" height="1.1" fill="#6c7176"/><rect x="104" y="60.2" width="4.6" height="0.9" fill="#6c7176" opacity=".7"/><rect x="114.6" y="57.6" width="5" height="2" fill="#f2f3f4"/><rect x="120.4" y="57.6" width="29" height="2" fill="#c4c7cb"/><rect x="115.4" y="58.3" width="3.2" height="0.7" fill="#6c7176" opacity=".7"/><rect x="121.4" y="58.3" width="10.6" height="0.7" fill="#6c7176" opacity=".7"/><rect x="134.6" y="58.3" width="5" height="0.7" fill="#6c7176" opacity=".7"/><rect x="141.6" y="58.3" width="6.6" height="0.7" fill="#6c7176" opacity=".7"/><rect x="114.2" y="61.6" width="47" height="0.7" fill="#6c7176" opacity="0.55"/><rect x="114.2" y="63" width="46" height="0.7" fill="#6c7176" opacity="0.5"/><rect x="114.2" y="64.8" width="48" height="0.7" fill="#6c7176" opacity="0.55"/><rect x="114.2" y="66.2" width="38" height="0.7" fill="#6c7176" opacity="0.5"/><rect x="114.2" y="67.6" width="7" height="0.7" fill="#6c7176" opacity="0.5"/><rect x="114.2" y="70" width="49" height="0.7" fill="#6c7176" opacity="0.55"/><rect x="114.2" y="72.2" width="44" height="0.7" fill="#6c7176" opacity="0.5"/><rect x="114.2" y="73.6" width="40" height="0.7" fill="#6c7176" opacity="0.5"/><rect x="114.2" y="76.4" width="45" height="0.7" fill="#6c7176" opacity="0.55"/><rect x="114.2" y="77.8" width="11" height="0.7" fill="#6c7176" opacity="0.5"/><rect x="117" y="77.8" width="10" height="0.7" fill="#3d9ad8" opacity=".8"/><rect x="131" y="73.6" width="12" height="0.7" fill="#3d9ad8" opacity=".7"/><rect x="130" y="63" width="9" height="0.7" fill="#3d9ad8" opacity=".7"/><path d="M100.4 72.6L99.4 69.4L103 69.2L104.6 67.2L106.6 69L110 65.6L110.6 69.6L112 71L110.2 73.4L112.4 76.4L109.4 77.6L110.6 81.2L107.6 81L106.8 85L103.6 82.2L100 83.2L101.6 79.8L99.2 78L101.4 75.6Z" fill="#58be2e"/><path d="M103.4 70.4L106 69.6L106.4 72.6L104.2 73.4Z" fill="#1d2a16"/><path d="M106 68.2L107.8 65L109 68.4L107.4 70Z" fill="#f2a526"/><path d="M100.8 74.6L104.4 73.8L104.6 77.6L101.6 78.2Z" fill="#e03424"/><path d="M107 74L110.4 74.6L109.6 77.4L106.6 77Z" fill="#e03424"/><path d="M103 79L106.4 78.4L106.2 82L103.6 81.6Z" fill="#8ad850"/><rect x="157.6" y="87.8" width="5.8" height="2.4" rx="0.3" fill="#c4c7cb" opacity=".7"/><rect x="159.6" y="88.7" width="2.6" height="0.7" fill="#6c7176" opacity=".7"/><rect x="0" y="99.6" width="171.4" height="4" fill="#d6d9f2"/><path d="M2 102.8L3.6 100.6" stroke="#353a48" stroke-width="0.7"/><rect x="5.6" y="100.3" width="3.2" height="3" fill="#2b2f3a"/><rect x="10.6" y="100.5" width="2.6" height="2.8" rx="0.4" fill="#2d9bf0"/><rect x="14.4" y="100" width="4.4" height="3.6" fill="#7cc4f0"/><rect x="14.4" y="100" width="4.4" height="1" fill="#d9ecfa"/><rect x="143.6" y="100.9" width="1.2" height="1.6" fill="#353a48" opacity=".55"/><rect x="146.4" y="100.9" width="0.9" height="1.6" fill="#353a48" opacity=".55"/><rect x="148.8" y="100.9" width="1" height="1.6" fill="#353a48" opacity=".55"/><rect x="151.4" y="100.9" width="0.9" height="1.6" fill="#353a48" opacity=".55"/><rect x="153.6" y="100.9" width="2.2" height="1.6" fill="#353a48" opacity=".55"/><rect x="157" y="100.9" width="0.5" height="1.6" fill="#353a48" opacity=".55"/><rect x="160" y="100.9" width="4.6" height="1.6" fill="#353a48" opacity=".55"/><rect x="167" y="100.9" width="1" height="1.6" fill="#353a48" opacity=".55"/></svg></div><div class="lbl" style="left:2px;top:364.5px"><span class="t" style="letter-spacing:-0.259px">Brisa</span></div>
<div class="card" style="left:277px;top:245px"><svg width="172" height="104.6" viewBox="0 0 172 104" preserveAspectRatio="none"><defs><linearGradient id="w13a" x1="0" y1="0" x2="1" y2="1"><stop offset="0" stop-color="#4a68e2"/><stop offset="0.55" stop-color="#3f47bc"/><stop offset="1" stop-color="#3a30a2"/></linearGradient><linearGradient id="w13t" x1="0" y1="0" x2="1" y2="0.6"><stop offset="0.3" stop-color="#4a52c8"/><stop offset="1" stop-color="#3f47bc"/></linearGradient><linearGradient id="w13d" gradientUnits="userSpaceOnUse" x1="0" y1="0" x2="80" y2="52"><stop offset="0" stop-color="#8799f9"/><stop offset="0.75" stop-color="#6c70ee"/><stop offset="1" stop-color="#6c70ee" stop-opacity=".6"/></linearGradient><linearGradient id="w13o" x1="0.6" y1="0" x2="0.3" y2="1"><stop offset="0" stop-color="#e84a7c"/><stop offset="1" stop-color="#ff8a48"/></linearGradient><filter id="w13f" x="-5%" y="-5%" width="110%" height="110%"><feGaussianBlur stdDeviation="0.55"/></filter><filter id="w13g" x="-5%" y="-5%" width="110%" height="110%"><feGaussianBlur stdDeviation="1.6"/></filter><clipPath id="w13c"><rect width="172" height="104"/></clipPath></defs><rect width="172" height="104" fill="url(#w13a)"/><g clip-path="url(#w13c)"><path d="M50 -2H174V40L100 34Z" fill="url(#w13t)" filter="url(#w13g)"/><g filter="url(#w13f)"><path d="M-2 -2H56L100 22L72 52L56 50L-2 10.6Z" fill="url(#w13d)"/><path d="M-3 2.5L62 46" stroke="#b0bcff" stroke-width="2.2" opacity="0.35"/><path d="M-3 6.5L58 47" stroke="#6277ec" stroke-width="1.0" opacity="0.40"/><path d="M8 -3L72 38" stroke="#b0bcff" stroke-width="2.4" opacity="0.28"/><path d="M20 -3L80 34" stroke="#6277ec" stroke-width="1.2" opacity="0.35"/><path d="M30 -3L84 30" stroke="#b0bcff" stroke-width="2.0" opacity="0.25"/><path d="M40 -3L90 26" stroke="#6277ec" stroke-width="1" opacity="0.35"/><path d="M-3 -1L66 42" stroke="#b0bcff" stroke-width="1" opacity="0.25"/><path d="M53 -3L98 24" stroke="#a0b4ff" stroke-width="1.1" opacity="0.55"/><path d="M57 -3L101 22" stroke="#6277ec" stroke-width="0.8" opacity="0.40"/><path d="M60.5 -3L103 20.5" stroke="#a0b4ff" stroke-width="0.8" opacity="0.45"/><path d="M-3 9.6L57 49.6" stroke="#a0b4ff" stroke-width="1.0" opacity="0.75"/><path d="M-3 14L48 48" stroke="#a0b4ff" stroke-width="0.7" opacity="0.30"/><path d="M62 52L88 72" stroke="#8a58f0" stroke-width="2.4" opacity=".75" stroke-linecap="round"/><path d="M58 50L70 60" stroke="#a0b4ff" stroke-width="1" opacity=".5"/></g><circle cx="42.3" cy="25.5" r="1.25" fill="#c23cc0" opacity=".85"/><g filter="url(#w13f)"><ellipse cx="46.6" cy="38.8" rx="3" ry="4.5" transform="rotate(-38 46.6 38.8)" fill="#f0524e"/><path d="M44.6 37.6L49 41" stroke="#6c70ee" stroke-width="0.7" opacity=".7"/><path d="M60.4 47.6L69.4 36.4L75 37L75 54.6L65.6 58.6L60.8 54Z" fill="url(#w13o)"/></g></g><rect x="0.9" y="49.1" width="58.3" height="50" fill="#d5d9f1"/><rect x="0.9" y="49.1" width="20.3" height="50" fill="#c7cdee"/><rect x="0.9" y="49.1" width="58.3" height="3.6" fill="#dfe2f4"/><rect x="22" y="49.8" width="29" height="2.3" rx="0.5" fill="#f3f4fb"/><rect x="1.2" y="54" width="19.6" height="3.4" fill="#a9cdf2"/><rect x="2.2" y="55.1" width="1.3" height="1.3" fill="#5d6478" opacity=".85"/><rect x="4.6" y="55.35" width="7" height="0.8" fill="#5d6478" opacity=".55"/><rect x="2.2" y="58.6" width="1.3" height="1.3" fill="#5d6478" opacity=".85"/><rect x="4.6" y="58.85" width="10" height="0.8" fill="#5d6478" opacity=".55"/><rect x="2.2" y="62.6" width="1.3" height="1.3" fill="#5d6478" opacity=".85"/><rect x="4.6" y="62.85" width="9" height="0.8" fill="#5d6478" opacity=".55"/><rect x="2.2" y="66.2" width="1.3" height="1.3" fill="#5d6478" opacity=".85"/><rect x="4.6" y="66.45" width="6" height="0.8" fill="#5d6478" opacity=".55"/><rect x="2.2" y="69.60000000000001" width="1.3" height="1.3" fill="#5d6478" opacity=".85"/><rect x="4.6" y="69.85000000000001" width="5" height="0.8" fill="#5d6478" opacity=".55"/><rect x="2.2" y="72.80000000000001" width="1.3" height="1.3" fill="#5d6478" opacity=".85"/><rect x="4.6" y="73.05000000000001" width="6" height="0.8" fill="#5d6478" opacity=".55"/><rect x="2.2" y="76.2" width="1.3" height="1.3" fill="#5d6478" opacity=".85"/><rect x="4.6" y="76.45" width="4" height="0.8" fill="#5d6478" opacity=".55"/><rect x="2.2" y="79.60000000000001" width="1.3" height="1.3" fill="#5d6478" opacity=".85"/><rect x="4.6" y="79.85000000000001" width="6" height="0.8" fill="#5d6478" opacity=".55"/><rect x="2.2" y="82.80000000000001" width="1.3" height="1.3" fill="#5d6478" opacity=".85"/><rect x="4.6" y="83.05000000000001" width="7" height="0.8" fill="#5d6478" opacity=".55"/><rect x="2.2" y="86.2" width="1.3" height="1.3" fill="#5d6478" opacity=".85"/><rect x="4.6" y="86.45" width="5" height="0.8" fill="#5d6478" opacity=".55"/><rect x="2.2" y="89.60000000000001" width="1.3" height="1.3" fill="#5d6478" opacity=".85"/><rect x="4.6" y="89.85000000000001" width="5" height="0.8" fill="#5d6478" opacity=".55"/><rect x="2.2" y="92.80000000000001" width="1.3" height="1.3" fill="#5d6478" opacity=".85"/><rect x="4.6" y="93.05000000000001" width="4" height="0.8" fill="#5d6478" opacity=".55"/><rect x="22.5" y="54" width="8.6" height="9.8" fill="#a9cdf2" opacity=".8"/><rect x="24.8" y="55" width="3.8" height="4.2" fill="#1d1f24"/><rect x="25.6" y="55.8" width="2.2" height="1.6" fill="#aeb4bd"/><rect x="33.6" y="55.4" width="4.4" height="3.6" fill="#7cc4f0"/><rect x="33.6" y="55.4" width="4.4" height="0.9" fill="#d9ecfa"/><rect x="43" y="55.2" width="4.2" height="3.9" rx="0.5" fill="#2d9bf0"/><rect x="44.4" y="56.4" width="1.4" height="1.4" fill="#dff"/><rect x="24.4" y="60.4" width="4.6" height="0.7" fill="#5d6478" opacity=".5"/><rect x="33.6" y="60.4" width="4.6" height="0.7" fill="#5d6478" opacity=".5"/><rect x="43" y="60.4" width="4.6" height="0.7" fill="#5d6478" opacity=".5"/><rect x="0.9" y="96.4" width="58.3" height="2.7" fill="#dfe2f4"/><rect x="1.6" y="97.3" width="8" height="0.9" fill="#5d6478" opacity=".5"/><rect x="12.6" y="97.3" width="5" height="0.9" fill="#5d6478" opacity=".5"/><rect x="23.6" y="97.3" width="4" height="0.9" fill="#5d6478" opacity=".5"/><rect x="30" y="97.3" width="6.6" height="0.9" fill="#5d6478" opacity=".5"/><rect x="38.6" y="97.3" width="5.6" height="0.9" fill="#5d6478" opacity=".5"/><rect x="46" y="97.3" width="8.4" height="0.9" fill="#5d6478" opacity=".5"/><rect x="70.6" y="9.4" width="90.8" height="56.6" fill="#000" opacity=".18"/><rect x="71" y="9.7" width="90" height="55.5" fill="#ffffff"/><rect x="71" y="9.7" width="90" height="7" fill="#eff0f1"/><rect x="71" y="16.7" width="14.4" height="48.5" fill="#f7f8f8"/><rect x="110" y="10.6" width="12" height="0.8" fill="#6d7378" opacity=".5"/><rect x="78" y="13.8" width="1.4" height="1.6" fill="#6d7378"/><rect x="87" y="14.2" width="4" height="0.8" fill="#6d7378" opacity=".6"/><rect x="148.6" y="13.6" width="1.6" height="1.6" fill="#6d7378"/><rect x="151" y="14" width="2.6" height="0.8" fill="#6d7378" opacity=".6"/><rect x="155.6" y="13.8" width="1" height="1.4" fill="#6d7378" opacity=".7"/><rect x="158" y="13.8" width="1.2" height="1.4" fill="#6d7378"/><rect x="71.4" y="20.4" width="13.6" height="2.6" fill="#bfe0f6"/><rect x="72.2" y="21.2" width="1.1" height="1.1" fill="#6d7378" opacity=".8"/><rect x="74.2" y="21.4" width="4" height="0.7" fill="#6d7378" opacity=".5"/><rect x="72.2" y="23.7" width="1.1" height="1.1" fill="#6d7378" opacity=".8"/><rect x="74.2" y="23.9" width="5" height="0.7" fill="#6d7378" opacity=".5"/><rect x="72.2" y="25.9" width="1.1" height="1.1" fill="#6d7378" opacity=".8"/><rect x="74.2" y="26.099999999999998" width="7" height="0.7" fill="#6d7378" opacity=".5"/><rect x="72.2" y="28.3" width="1.1" height="1.1" fill="#6d7378" opacity=".8"/><rect x="74.2" y="28.5" width="6" height="0.7" fill="#6d7378" opacity=".5"/><rect x="72.2" y="30.9" width="1.1" height="1.1" fill="#6d7378" opacity=".8"/><rect x="74.2" y="31.099999999999998" width="4" height="0.7" fill="#6d7378" opacity=".5"/><rect x="72.2" y="33.5" width="1.1" height="1.1" fill="#6d7378" opacity=".8"/><rect x="74.2" y="33.7" width="5" height="0.7" fill="#6d7378" opacity=".5"/><rect x="72.2" y="35.7" width="1.1" height="1.1" fill="#6d7378" opacity=".8"/><rect x="74.2" y="35.900000000000006" width="4" height="0.7" fill="#6d7378" opacity=".5"/><rect x="72.2" y="37.9" width="1.1" height="1.1" fill="#6d7378" opacity=".8"/><rect x="74.2" y="38.1" width="3" height="0.7" fill="#6d7378" opacity=".5"/><rect x="72.2" y="41.5" width="1.1" height="1.1" fill="#6d7378" opacity=".8"/><rect x="74.2" y="41.7" width="3" height="0.7" fill="#6d7378" opacity=".5"/><rect x="72.2" y="43.7" width="1.1" height="1.1" fill="#6d7378" opacity=".8"/><rect x="74.2" y="43.900000000000006" width="5" height="0.7" fill="#6d7378" opacity=".5"/><rect x="72.2" y="47.1" width="1.1" height="1.1" fill="#6d7378" opacity=".8"/><rect x="74.2" y="47.300000000000004" width="3" height="0.7" fill="#6d7378" opacity=".5"/><rect x="72.2" y="49.3" width="1.1" height="1.1" fill="#6d7378" opacity=".8"/><rect x="74.2" y="49.5" width="6" height="0.7" fill="#6d7378" opacity=".5"/><rect x="72.2" y="51.7" width="1.1" height="1.1" fill="#6d7378" opacity=".8"/><rect x="74.2" y="51.900000000000006" width="8" height="0.7" fill="#6d7378" opacity=".5"/><rect x="72.2" y="54.9" width="1.1" height="1.1" fill="#6d7378" opacity=".8"/><rect x="74.2" y="55.1" width="3" height="0.7" fill="#6d7378" opacity=".5"/><rect x="72.2" y="56.9" width="1.1" height="1.1" fill="#6d7378" opacity=".8"/><rect x="74.2" y="57.1" width="9" height="0.7" fill="#6d7378" opacity=".5"/><rect x="89.4" y="19.2" width="5.6" height="5" fill="#1d9ab5"/><path d="M95.0 19.2L91.4 22.4L93.0 24.2H95.0Z" fill="#c9377f"/><path d="M89.4 24.2L91.4 22.4L93.80000000000001 24.2Z" fill="#35615f"/><rect x="89.4" y="19.2" width="5.6" height="1" fill="#4a5057" opacity=".8"/><rect x="89.2" y="25.6" width="5" height="0.7" fill="#6d7378" opacity=".45"/><rect x="101.8" y="19.2" width="5.6" height="4.59" rx="0.4" fill="#3daee9"/><rect x="101.8" y="19.2" width="2.52" height="1.40" fill="#2a8fd0"/><rect x="102.6" y="24.5" width="4.0" height="0.5" fill="#9aa0a8" opacity=".6"/><rect x="101.6" y="25.6" width="6.6" height="0.7" fill="#6d7378" opacity=".45"/><rect x="114.1" y="19.2" width="5.6" height="4.59" rx="0.4" fill="#3daee9"/><rect x="114.1" y="19.2" width="2.52" height="1.40" fill="#2a8fd0"/><rect x="114.9" y="24.5" width="4.0" height="0.5" fill="#9aa0a8" opacity=".6"/><rect x="113.89999999999999" y="25.6" width="6" height="0.7" fill="#6d7378" opacity=".45"/><rect x="126.4" y="19.2" width="5.6" height="4.59" rx="0.4" fill="#3daee9"/><rect x="126.4" y="19.2" width="2.52" height="1.40" fill="#2a8fd0"/><rect x="127.2" y="24.5" width="4.0" height="0.5" fill="#9aa0a8" opacity=".6"/><rect x="126.2" y="25.6" width="4" height="0.7" fill="#6d7378" opacity=".45"/><rect x="138.7" y="19.2" width="5.6" height="4.59" rx="0.4" fill="#3daee9"/><rect x="138.7" y="19.2" width="2.52" height="1.40" fill="#2a8fd0"/><rect x="139.5" y="24.5" width="4.0" height="0.5" fill="#9aa0a8" opacity=".6"/><rect x="139.5" y="20.6" width="4" height="2.4" fill="#f2e9b0"/><rect x="139.5" y="21.8" width="4" height="1.2" fill="#4a9a54"/><rect x="138.5" y="25.6" width="5" height="0.7" fill="#6d7378" opacity=".45"/><rect x="151.0" y="19.2" width="5.6" height="4.59" rx="0.4" fill="#3daee9"/><rect x="151.0" y="19.2" width="2.52" height="1.40" fill="#2a8fd0"/><rect x="151.8" y="24.5" width="4.0" height="0.5" fill="#9aa0a8" opacity=".6"/><rect x="150.8" y="25.6" width="4.4" height="0.7" fill="#6d7378" opacity=".45"/><rect x="89.4" y="29.0" width="5.6" height="4.59" rx="0.4" fill="#3daee9"/><rect x="89.4" y="29.0" width="2.52" height="1.40" fill="#2a8fd0"/><rect x="90.2" y="34.3" width="4.0" height="0.5" fill="#9aa0a8" opacity=".6"/><rect x="89.4" y="35.3" width="5.4" height="0.7" fill="#6d7378" opacity=".45"/><rect x="101.8" y="29.0" width="5.6" height="4.59" rx="0.4" fill="#3daee9"/><rect x="101.8" y="29.0" width="2.52" height="1.40" fill="#2a8fd0"/><rect x="102.6" y="34.3" width="4.0" height="0.5" fill="#9aa0a8" opacity=".6"/><rect x="101.8" y="35.3" width="5.4" height="0.7" fill="#6d7378" opacity=".45"/><rect x="86" y="63" width="6" height="1.6" fill="#eff0f1"/><rect x="87" y="63.5" width="4" height="0.6" fill="#6d7378" opacity=".5"/><rect x="97.6" y="52.8" width="68.2" height="39.6" fill="#000" opacity=".22"/><rect x="98" y="53" width="67.4" height="38.7" fill="#f2f3f4"/><rect x="98" y="53" width="67.4" height="2.6" fill="#e9ebec"/><rect x="125" y="54" width="10" height="0.7" fill="#6c7176" opacity=".55"/><rect x="98.6" y="53.6" width="1.3" height="1.3" fill="#3daee9"/><rect x="99" y="57.6" width="4" height="4.2" rx="0.3" fill="#2d9bf0"/><rect x="100.2" y="58.8" width="1.6" height="1.8" fill="#eaf6ff"/><rect x="104" y="58" width="3" height="1.1" fill="#6c7176"/><rect x="104" y="60.2" width="4.6" height="0.9" fill="#6c7176" opacity=".7"/><rect x="114.6" y="57.6" width="5" height="2" fill="#f2f3f4"/><rect x="120.4" y="57.6" width="29" height="2" fill="#c4c7cb"/><rect x="115.4" y="58.3" width="3.2" height="0.7" fill="#6c7176" opacity=".7"/><rect x="121.4" y="58.3" width="10.6" height="0.7" fill="#6c7176" opacity=".7"/><rect x="134.6" y="58.3" width="5" height="0.7" fill="#6c7176" opacity=".7"/><rect x="141.6" y="58.3" width="6.6" height="0.7" fill="#6c7176" opacity=".7"/><rect x="114.2" y="61.6" width="47" height="0.7" fill="#6c7176" opacity="0.55"/><rect x="114.2" y="63" width="46" height="0.7" fill="#6c7176" opacity="0.5"/><rect x="114.2" y="64.8" width="48" height="0.7" fill="#6c7176" opacity="0.55"/><rect x="114.2" y="66.2" width="38" height="0.7" fill="#6c7176" opacity="0.5"/><rect x="114.2" y="67.6" width="7" height="0.7" fill="#6c7176" opacity="0.5"/><rect x="114.2" y="70" width="49" height="0.7" fill="#6c7176" opacity="0.55"/><rect x="114.2" y="72.2" width="44" height="0.7" fill="#6c7176" opacity="0.5"/><rect x="114.2" y="73.6" width="40" height="0.7" fill="#6c7176" opacity="0.5"/><rect x="114.2" y="76.4" width="45" height="0.7" fill="#6c7176" opacity="0.55"/><rect x="114.2" y="77.8" width="11" height="0.7" fill="#6c7176" opacity="0.5"/><rect x="117" y="77.8" width="10" height="0.7" fill="#3d9ad8" opacity=".8"/><rect x="131" y="73.6" width="12" height="0.7" fill="#3d9ad8" opacity=".7"/><rect x="130" y="63" width="9" height="0.7" fill="#3d9ad8" opacity=".7"/><path d="M100.4 72.6L99.4 69.4L103 69.2L104.6 67.2L106.6 69L110 65.6L110.6 69.6L112 71L110.2 73.4L112.4 76.4L109.4 77.6L110.6 81.2L107.6 81L106.8 85L103.6 82.2L100 83.2L101.6 79.8L99.2 78L101.4 75.6Z" fill="#58be2e"/><path d="M103.4 70.4L106 69.6L106.4 72.6L104.2 73.4Z" fill="#1d2a16"/><path d="M106 68.2L107.8 65L109 68.4L107.4 70Z" fill="#f2a526"/><path d="M100.8 74.6L104.4 73.8L104.6 77.6L101.6 78.2Z" fill="#e03424"/><path d="M107 74L110.4 74.6L109.6 77.4L106.6 77Z" fill="#e03424"/><path d="M103 79L106.4 78.4L106.2 82L103.6 81.6Z" fill="#8ad850"/><rect x="157.6" y="87.8" width="5.8" height="2.4" rx="0.3" fill="#c4c7cb" opacity=".7"/><rect x="159.6" y="88.7" width="2.6" height="0.7" fill="#6c7176" opacity=".7"/><rect x="0" y="99.6" width="171.4" height="4" fill="#d6d9f2"/><path d="M2 102.8L3.6 100.6" stroke="#353a48" stroke-width="0.7"/><rect x="5.6" y="100.3" width="3.2" height="3" fill="#2b2f3a"/><rect x="10.6" y="100.5" width="2.6" height="2.8" rx="0.4" fill="#2d9bf0"/><rect x="14.4" y="100" width="4.4" height="3.6" fill="#7cc4f0"/><rect x="14.4" y="100" width="4.4" height="1" fill="#d9ecfa"/><rect x="143.6" y="100.9" width="1.2" height="1.6" fill="#353a48" opacity=".55"/><rect x="146.4" y="100.9" width="0.9" height="1.6" fill="#353a48" opacity=".55"/><rect x="148.8" y="100.9" width="1" height="1.6" fill="#353a48" opacity=".55"/><rect x="151.4" y="100.9" width="0.9" height="1.6" fill="#353a48" opacity=".55"/><rect x="153.6" y="100.9" width="2.2" height="1.6" fill="#353a48" opacity=".55"/><rect x="157" y="100.9" width="0.5" height="1.6" fill="#353a48" opacity=".55"/><rect x="160" y="100.9" width="4.6" height="1.6" fill="#353a48" opacity=".55"/><rect x="167" y="100.9" width="1" height="1.6" fill="#353a48" opacity=".55"/></svg></div><div class="lbl" style="left:245px;top:364.5px"><span class="t" style="letter-spacing:-0.259px">Brisa</span></div>
<div class="card" style="left:520px;top:245px"><svg width="172" height="104.6" viewBox="0 0 172 104" preserveAspectRatio="none"><defs><linearGradient id="w14a" x1="0" y1="0" x2="1" y2="1"><stop offset="0" stop-color="#4a68e2"/><stop offset="0.55" stop-color="#3f47bc"/><stop offset="1" stop-color="#3a30a2"/></linearGradient><linearGradient id="w14t" x1="0" y1="0" x2="1" y2="0.6"><stop offset="0.3" stop-color="#4a52c8"/><stop offset="1" stop-color="#3f47bc"/></linearGradient><linearGradient id="w14d" gradientUnits="userSpaceOnUse" x1="0" y1="0" x2="80" y2="52"><stop offset="0" stop-color="#8799f9"/><stop offset="0.75" stop-color="#6c70ee"/><stop offset="1" stop-color="#6c70ee" stop-opacity=".6"/></linearGradient><linearGradient id="w14o" x1="0.6" y1="0" x2="0.3" y2="1"><stop offset="0" stop-color="#e84a7c"/><stop offset="1" stop-color="#ff8a48"/></linearGradient><filter id="w14f" x="-5%" y="-5%" width="110%" height="110%"><feGaussianBlur stdDeviation="0.55"/></filter><filter id="w14g" x="-5%" y="-5%" width="110%" height="110%"><feGaussianBlur stdDeviation="1.6"/></filter><clipPath id="w14c"><rect width="172" height="104"/></clipPath></defs><rect width="172" height="104" fill="url(#w14a)"/><g clip-path="url(#w14c)"><path d="M50 -2H174V40L100 34Z" fill="url(#w14t)" filter="url(#w14g)"/><g filter="url(#w14f)"><path d="M-2 -2H56L100 22L72 52L56 50L-2 10.6Z" fill="url(#w14d)"/><path d="M-3 2.5L62 46" stroke="#b0bcff" stroke-width="2.2" opacity="0.35"/><path d="M-3 6.5L58 47" stroke="#6277ec" stroke-width="1.0" opacity="0.40"/><path d="M8 -3L72 38" stroke="#b0bcff" stroke-width="2.4" opacity="0.28"/><path d="M20 -3L80 34" stroke="#6277ec" stroke-width="1.2" opacity="0.35"/><path d="M30 -3L84 30" stroke="#b0bcff" stroke-width="2.0" opacity="0.25"/><path d="M40 -3L90 26" stroke="#6277ec" stroke-width="1" opacity="0.35"/><path d="M-3 -1L66 42" stroke="#b0bcff" stroke-width="1" opacity="0.25"/><path d="M53 -3L98 24" stroke="#a0b4ff" stroke-width="1.1" opacity="0.55"/><path d="M57 -3L101 22" stroke="#6277ec" stroke-width="0.8" opacity="0.40"/><path d="M60.5 -3L103 20.5" stroke="#a0b4ff" stroke-width="0.8" opacity="0.45"/><path d="M-3 9.6L57 49.6" stroke="#a0b4ff" stroke-width="1.0" opacity="0.75"/><path d="M-3 14L48 48" stroke="#a0b4ff" stroke-width="0.7" opacity="0.30"/><path d="M62 52L88 72" stroke="#8a58f0" stroke-width="2.4" opacity=".75" stroke-linecap="round"/><path d="M58 50L70 60" stroke="#a0b4ff" stroke-width="1" opacity=".5"/></g><circle cx="42.3" cy="25.5" r="1.25" fill="#c23cc0" opacity=".85"/><g filter="url(#w14f)"><ellipse cx="46.6" cy="38.8" rx="3" ry="4.5" transform="rotate(-38 46.6 38.8)" fill="#f0524e"/><path d="M44.6 37.6L49 41" stroke="#6c70ee" stroke-width="0.7" opacity=".7"/><path d="M60.4 47.6L69.4 36.4L75 37L75 54.6L65.6 58.6L60.8 54Z" fill="url(#w14o)"/></g></g><rect x="0.9" y="49.1" width="58.3" height="50" fill="#d5d9f1"/><rect x="0.9" y="49.1" width="20.3" height="50" fill="#c7cdee"/><rect x="0.9" y="49.1" width="58.3" height="3.6" fill="#dfe2f4"/><rect x="22" y="49.8" width="29" height="2.3" rx="0.5" fill="#f3f4fb"/><rect x="1.2" y="54" width="19.6" height="3.4" fill="#a9cdf2"/><rect x="2.2" y="55.1" width="1.3" height="1.3" fill="#5d6478" opacity=".85"/><rect x="4.6" y="55.35" width="7" height="0.8" fill="#5d6478" opacity=".55"/><rect x="2.2" y="58.6" width="1.3" height="1.3" fill="#5d6478" opacity=".85"/><rect x="4.6" y="58.85" width="10" height="0.8" fill="#5d6478" opacity=".55"/><rect x="2.2" y="62.6" width="1.3" height="1.3" fill="#5d6478" opacity=".85"/><rect x="4.6" y="62.85" width="9" height="0.8" fill="#5d6478" opacity=".55"/><rect x="2.2" y="66.2" width="1.3" height="1.3" fill="#5d6478" opacity=".85"/><rect x="4.6" y="66.45" width="6" height="0.8" fill="#5d6478" opacity=".55"/><rect x="2.2" y="69.60000000000001" width="1.3" height="1.3" fill="#5d6478" opacity=".85"/><rect x="4.6" y="69.85000000000001" width="5" height="0.8" fill="#5d6478" opacity=".55"/><rect x="2.2" y="72.80000000000001" width="1.3" height="1.3" fill="#5d6478" opacity=".85"/><rect x="4.6" y="73.05000000000001" width="6" height="0.8" fill="#5d6478" opacity=".55"/><rect x="2.2" y="76.2" width="1.3" height="1.3" fill="#5d6478" opacity=".85"/><rect x="4.6" y="76.45" width="4" height="0.8" fill="#5d6478" opacity=".55"/><rect x="2.2" y="79.60000000000001" width="1.3" height="1.3" fill="#5d6478" opacity=".85"/><rect x="4.6" y="79.85000000000001" width="6" height="0.8" fill="#5d6478" opacity=".55"/><rect x="2.2" y="82.80000000000001" width="1.3" height="1.3" fill="#5d6478" opacity=".85"/><rect x="4.6" y="83.05000000000001" width="7" height="0.8" fill="#5d6478" opacity=".55"/><rect x="2.2" y="86.2" width="1.3" height="1.3" fill="#5d6478" opacity=".85"/><rect x="4.6" y="86.45" width="5" height="0.8" fill="#5d6478" opacity=".55"/><rect x="2.2" y="89.60000000000001" width="1.3" height="1.3" fill="#5d6478" opacity=".85"/><rect x="4.6" y="89.85000000000001" width="5" height="0.8" fill="#5d6478" opacity=".55"/><rect x="2.2" y="92.80000000000001" width="1.3" height="1.3" fill="#5d6478" opacity=".85"/><rect x="4.6" y="93.05000000000001" width="4" height="0.8" fill="#5d6478" opacity=".55"/><rect x="22.5" y="54" width="8.6" height="9.8" fill="#a9cdf2" opacity=".8"/><rect x="24.8" y="55" width="3.8" height="4.2" fill="#1d1f24"/><rect x="25.6" y="55.8" width="2.2" height="1.6" fill="#aeb4bd"/><rect x="33.6" y="55.4" width="4.4" height="3.6" fill="#7cc4f0"/><rect x="33.6" y="55.4" width="4.4" height="0.9" fill="#d9ecfa"/><rect x="43" y="55.2" width="4.2" height="3.9" rx="0.5" fill="#2d9bf0"/><rect x="44.4" y="56.4" width="1.4" height="1.4" fill="#dff"/><rect x="24.4" y="60.4" width="4.6" height="0.7" fill="#5d6478" opacity=".5"/><rect x="33.6" y="60.4" width="4.6" height="0.7" fill="#5d6478" opacity=".5"/><rect x="43" y="60.4" width="4.6" height="0.7" fill="#5d6478" opacity=".5"/><rect x="0.9" y="96.4" width="58.3" height="2.7" fill="#dfe2f4"/><rect x="1.6" y="97.3" width="8" height="0.9" fill="#5d6478" opacity=".5"/><rect x="12.6" y="97.3" width="5" height="0.9" fill="#5d6478" opacity=".5"/><rect x="23.6" y="97.3" width="4" height="0.9" fill="#5d6478" opacity=".5"/><rect x="30" y="97.3" width="6.6" height="0.9" fill="#5d6478" opacity=".5"/><rect x="38.6" y="97.3" width="5.6" height="0.9" fill="#5d6478" opacity=".5"/><rect x="46" y="97.3" width="8.4" height="0.9" fill="#5d6478" opacity=".5"/><rect x="70.6" y="9.4" width="90.8" height="56.6" fill="#000" opacity=".18"/><rect x="71" y="9.7" width="90" height="55.5" fill="#ffffff"/><rect x="71" y="9.7" width="90" height="7" fill="#eff0f1"/><rect x="71" y="16.7" width="14.4" height="48.5" fill="#f7f8f8"/><rect x="110" y="10.6" width="12" height="0.8" fill="#6d7378" opacity=".5"/><rect x="78" y="13.8" width="1.4" height="1.6" fill="#6d7378"/><rect x="87" y="14.2" width="4" height="0.8" fill="#6d7378" opacity=".6"/><rect x="148.6" y="13.6" width="1.6" height="1.6" fill="#6d7378"/><rect x="151" y="14" width="2.6" height="0.8" fill="#6d7378" opacity=".6"/><rect x="155.6" y="13.8" width="1" height="1.4" fill="#6d7378" opacity=".7"/><rect x="158" y="13.8" width="1.2" height="1.4" fill="#6d7378"/><rect x="71.4" y="20.4" width="13.6" height="2.6" fill="#bfe0f6"/><rect x="72.2" y="21.2" width="1.1" height="1.1" fill="#6d7378" opacity=".8"/><rect x="74.2" y="21.4" width="4" height="0.7" fill="#6d7378" opacity=".5"/><rect x="72.2" y="23.7" width="1.1" height="1.1" fill="#6d7378" opacity=".8"/><rect x="74.2" y="23.9" width="5" height="0.7" fill="#6d7378" opacity=".5"/><rect x="72.2" y="25.9" width="1.1" height="1.1" fill="#6d7378" opacity=".8"/><rect x="74.2" y="26.099999999999998" width="7" height="0.7" fill="#6d7378" opacity=".5"/><rect x="72.2" y="28.3" width="1.1" height="1.1" fill="#6d7378" opacity=".8"/><rect x="74.2" y="28.5" width="6" height="0.7" fill="#6d7378" opacity=".5"/><rect x="72.2" y="30.9" width="1.1" height="1.1" fill="#6d7378" opacity=".8"/><rect x="74.2" y="31.099999999999998" width="4" height="0.7" fill="#6d7378" opacity=".5"/><rect x="72.2" y="33.5" width="1.1" height="1.1" fill="#6d7378" opacity=".8"/><rect x="74.2" y="33.7" width="5" height="0.7" fill="#6d7378" opacity=".5"/><rect x="72.2" y="35.7" width="1.1" height="1.1" fill="#6d7378" opacity=".8"/><rect x="74.2" y="35.900000000000006" width="4" height="0.7" fill="#6d7378" opacity=".5"/><rect x="72.2" y="37.9" width="1.1" height="1.1" fill="#6d7378" opacity=".8"/><rect x="74.2" y="38.1" width="3" height="0.7" fill="#6d7378" opacity=".5"/><rect x="72.2" y="41.5" width="1.1" height="1.1" fill="#6d7378" opacity=".8"/><rect x="74.2" y="41.7" width="3" height="0.7" fill="#6d7378" opacity=".5"/><rect x="72.2" y="43.7" width="1.1" height="1.1" fill="#6d7378" opacity=".8"/><rect x="74.2" y="43.900000000000006" width="5" height="0.7" fill="#6d7378" opacity=".5"/><rect x="72.2" y="47.1" width="1.1" height="1.1" fill="#6d7378" opacity=".8"/><rect x="74.2" y="47.300000000000004" width="3" height="0.7" fill="#6d7378" opacity=".5"/><rect x="72.2" y="49.3" width="1.1" height="1.1" fill="#6d7378" opacity=".8"/><rect x="74.2" y="49.5" width="6" height="0.7" fill="#6d7378" opacity=".5"/><rect x="72.2" y="51.7" width="1.1" height="1.1" fill="#6d7378" opacity=".8"/><rect x="74.2" y="51.900000000000006" width="8" height="0.7" fill="#6d7378" opacity=".5"/><rect x="72.2" y="54.9" width="1.1" height="1.1" fill="#6d7378" opacity=".8"/><rect x="74.2" y="55.1" width="3" height="0.7" fill="#6d7378" opacity=".5"/><rect x="72.2" y="56.9" width="1.1" height="1.1" fill="#6d7378" opacity=".8"/><rect x="74.2" y="57.1" width="9" height="0.7" fill="#6d7378" opacity=".5"/><rect x="89.4" y="19.2" width="5.6" height="5" fill="#1d9ab5"/><path d="M95.0 19.2L91.4 22.4L93.0 24.2H95.0Z" fill="#c9377f"/><path d="M89.4 24.2L91.4 22.4L93.80000000000001 24.2Z" fill="#35615f"/><rect x="89.4" y="19.2" width="5.6" height="1" fill="#4a5057" opacity=".8"/><rect x="89.2" y="25.6" width="5" height="0.7" fill="#6d7378" opacity=".45"/><rect x="101.8" y="19.2" width="5.6" height="4.59" rx="0.4" fill="#3daee9"/><rect x="101.8" y="19.2" width="2.52" height="1.40" fill="#2a8fd0"/><rect x="102.6" y="24.5" width="4.0" height="0.5" fill="#9aa0a8" opacity=".6"/><rect x="101.6" y="25.6" width="6.6" height="0.7" fill="#6d7378" opacity=".45"/><rect x="114.1" y="19.2" width="5.6" height="4.59" rx="0.4" fill="#3daee9"/><rect x="114.1" y="19.2" width="2.52" height="1.40" fill="#2a8fd0"/><rect x="114.9" y="24.5" width="4.0" height="0.5" fill="#9aa0a8" opacity=".6"/><rect x="113.89999999999999" y="25.6" width="6" height="0.7" fill="#6d7378" opacity=".45"/><rect x="126.4" y="19.2" width="5.6" height="4.59" rx="0.4" fill="#3daee9"/><rect x="126.4" y="19.2" width="2.52" height="1.40" fill="#2a8fd0"/><rect x="127.2" y="24.5" width="4.0" height="0.5" fill="#9aa0a8" opacity=".6"/><rect x="126.2" y="25.6" width="4" height="0.7" fill="#6d7378" opacity=".45"/><rect x="138.7" y="19.2" width="5.6" height="4.59" rx="0.4" fill="#3daee9"/><rect x="138.7" y="19.2" width="2.52" height="1.40" fill="#2a8fd0"/><rect x="139.5" y="24.5" width="4.0" height="0.5" fill="#9aa0a8" opacity=".6"/><rect x="139.5" y="20.6" width="4" height="2.4" fill="#f2e9b0"/><rect x="139.5" y="21.8" width="4" height="1.2" fill="#4a9a54"/><rect x="138.5" y="25.6" width="5" height="0.7" fill="#6d7378" opacity=".45"/><rect x="151.0" y="19.2" width="5.6" height="4.59" rx="0.4" fill="#3daee9"/><rect x="151.0" y="19.2" width="2.52" height="1.40" fill="#2a8fd0"/><rect x="151.8" y="24.5" width="4.0" height="0.5" fill="#9aa0a8" opacity=".6"/><rect x="150.8" y="25.6" width="4.4" height="0.7" fill="#6d7378" opacity=".45"/><rect x="89.4" y="29.0" width="5.6" height="4.59" rx="0.4" fill="#3daee9"/><rect x="89.4" y="29.0" width="2.52" height="1.40" fill="#2a8fd0"/><rect x="90.2" y="34.3" width="4.0" height="0.5" fill="#9aa0a8" opacity=".6"/><rect x="89.4" y="35.3" width="5.4" height="0.7" fill="#6d7378" opacity=".45"/><rect x="101.8" y="29.0" width="5.6" height="4.59" rx="0.4" fill="#3daee9"/><rect x="101.8" y="29.0" width="2.52" height="1.40" fill="#2a8fd0"/><rect x="102.6" y="34.3" width="4.0" height="0.5" fill="#9aa0a8" opacity=".6"/><rect x="101.8" y="35.3" width="5.4" height="0.7" fill="#6d7378" opacity=".45"/><rect x="86" y="63" width="6" height="1.6" fill="#eff0f1"/><rect x="87" y="63.5" width="4" height="0.6" fill="#6d7378" opacity=".5"/><rect x="97.6" y="52.8" width="68.2" height="39.6" fill="#000" opacity=".22"/><rect x="98" y="53" width="67.4" height="38.7" fill="#f2f3f4"/><rect x="98" y="53" width="67.4" height="2.6" fill="#e9ebec"/><rect x="125" y="54" width="10" height="0.7" fill="#6c7176" opacity=".55"/><rect x="98.6" y="53.6" width="1.3" height="1.3" fill="#3daee9"/><rect x="99" y="57.6" width="4" height="4.2" rx="0.3" fill="#2d9bf0"/><rect x="100.2" y="58.8" width="1.6" height="1.8" fill="#eaf6ff"/><rect x="104" y="58" width="3" height="1.1" fill="#6c7176"/><rect x="104" y="60.2" width="4.6" height="0.9" fill="#6c7176" opacity=".7"/><rect x="114.6" y="57.6" width="5" height="2" fill="#f2f3f4"/><rect x="120.4" y="57.6" width="29" height="2" fill="#c4c7cb"/><rect x="115.4" y="58.3" width="3.2" height="0.7" fill="#6c7176" opacity=".7"/><rect x="121.4" y="58.3" width="10.6" height="0.7" fill="#6c7176" opacity=".7"/><rect x="134.6" y="58.3" width="5" height="0.7" fill="#6c7176" opacity=".7"/><rect x="141.6" y="58.3" width="6.6" height="0.7" fill="#6c7176" opacity=".7"/><rect x="114.2" y="61.6" width="47" height="0.7" fill="#6c7176" opacity="0.55"/><rect x="114.2" y="63" width="46" height="0.7" fill="#6c7176" opacity="0.5"/><rect x="114.2" y="64.8" width="48" height="0.7" fill="#6c7176" opacity="0.55"/><rect x="114.2" y="66.2" width="38" height="0.7" fill="#6c7176" opacity="0.5"/><rect x="114.2" y="67.6" width="7" height="0.7" fill="#6c7176" opacity="0.5"/><rect x="114.2" y="70" width="49" height="0.7" fill="#6c7176" opacity="0.55"/><rect x="114.2" y="72.2" width="44" height="0.7" fill="#6c7176" opacity="0.5"/><rect x="114.2" y="73.6" width="40" height="0.7" fill="#6c7176" opacity="0.5"/><rect x="114.2" y="76.4" width="45" height="0.7" fill="#6c7176" opacity="0.55"/><rect x="114.2" y="77.8" width="11" height="0.7" fill="#6c7176" opacity="0.5"/><rect x="117" y="77.8" width="10" height="0.7" fill="#3d9ad8" opacity=".8"/><rect x="131" y="73.6" width="12" height="0.7" fill="#3d9ad8" opacity=".7"/><rect x="130" y="63" width="9" height="0.7" fill="#3d9ad8" opacity=".7"/><path d="M100.4 72.6L99.4 69.4L103 69.2L104.6 67.2L106.6 69L110 65.6L110.6 69.6L112 71L110.2 73.4L112.4 76.4L109.4 77.6L110.6 81.2L107.6 81L106.8 85L103.6 82.2L100 83.2L101.6 79.8L99.2 78L101.4 75.6Z" fill="#58be2e"/><path d="M103.4 70.4L106 69.6L106.4 72.6L104.2 73.4Z" fill="#1d2a16"/><path d="M106 68.2L107.8 65L109 68.4L107.4 70Z" fill="#f2a526"/><path d="M100.8 74.6L104.4 73.8L104.6 77.6L101.6 78.2Z" fill="#e03424"/><path d="M107 74L110.4 74.6L109.6 77.4L106.6 77Z" fill="#e03424"/><path d="M103 79L106.4 78.4L106.2 82L103.6 81.6Z" fill="#8ad850"/><rect x="157.6" y="87.8" width="5.8" height="2.4" rx="0.3" fill="#c4c7cb" opacity=".7"/><rect x="159.6" y="88.7" width="2.6" height="0.7" fill="#6c7176" opacity=".7"/><rect x="0" y="99.6" width="171.4" height="4" fill="#d6d9f2"/><path d="M2 102.8L3.6 100.6" stroke="#353a48" stroke-width="0.7"/><rect x="5.6" y="100.3" width="3.2" height="3" fill="#2b2f3a"/><rect x="10.6" y="100.5" width="2.6" height="2.8" rx="0.4" fill="#2d9bf0"/><rect x="14.4" y="100" width="4.4" height="3.6" fill="#7cc4f0"/><rect x="14.4" y="100" width="4.4" height="1" fill="#d9ecfa"/><rect x="143.6" y="100.9" width="1.2" height="1.6" fill="#353a48" opacity=".55"/><rect x="146.4" y="100.9" width="0.9" height="1.6" fill="#353a48" opacity=".55"/><rect x="148.8" y="100.9" width="1" height="1.6" fill="#353a48" opacity=".55"/><rect x="151.4" y="100.9" width="0.9" height="1.6" fill="#353a48" opacity=".55"/><rect x="153.6" y="100.9" width="2.2" height="1.6" fill="#353a48" opacity=".55"/><rect x="157" y="100.9" width="0.5" height="1.6" fill="#353a48" opacity=".55"/><rect x="160" y="100.9" width="4.6" height="1.6" fill="#353a48" opacity=".55"/><rect x="167" y="100.9" width="1" height="1.6" fill="#353a48" opacity=".55"/></svg></div><div class="lbl" style="left:488px;top:364.5px"><span class="t" style="letter-spacing:-0.259px">Brisa</span></div>
<div class="card" style="left:34px;top:412px"><svg width="172" height="104.6" viewBox="0 0 172 104" preserveAspectRatio="none"><defs><linearGradient id="w1a" x1="0" y1="0" x2="1" y2="1"><stop offset="0" stop-color="#741e90"/><stop offset="0.55" stop-color="#4c1662"/><stop offset="1" stop-color="#431450"/></linearGradient><linearGradient id="w1t" x1="0" y1="0" x2="1" y2="0.6"><stop offset="0.3" stop-color="#43145c"/><stop offset="1" stop-color="#4c1662"/></linearGradient><linearGradient id="w1d" gradientUnits="userSpaceOnUse" x1="0" y1="0" x2="80" y2="52"><stop offset="0" stop-color="#8c2cc2"/><stop offset="0.75" stop-color="#5533b6"/><stop offset="1" stop-color="#5533b6" stop-opacity=".6"/></linearGradient><linearGradient id="w1o" x1="0.6" y1="0" x2="0.3" y2="1"><stop offset="0" stop-color="#e8487e"/><stop offset="1" stop-color="#f2607c"/></linearGradient><filter id="w1f" x="-5%" y="-5%" width="110%" height="110%"><feGaussianBlur stdDeviation="0.55"/></filter><filter id="w1g" x="-5%" y="-5%" width="110%" height="110%"><feGaussianBlur stdDeviation="1.6"/></filter><clipPath id="w1c"><rect width="172" height="104"/></clipPath></defs><rect width="172" height="104" fill="url(#w1a)"/><g clip-path="url(#w1c)"><path d="M50 -2H174V40L100 34Z" fill="url(#w1t)" filter="url(#w1g)"/><g filter="url(#w1f)"><path d="M-2 -2H56L100 22L72 52L56 50L-2 10.6Z" fill="url(#w1d)"/><path d="M-3 2.5L62 46" stroke="#7446d2" stroke-width="2.2" opacity="0.28"/><path d="M-3 6.5L58 47" stroke="#47279e" stroke-width="1.0" opacity="0.32"/><path d="M8 -3L72 38" stroke="#7446d2" stroke-width="2.4" opacity="0.22"/><path d="M20 -3L80 34" stroke="#47279e" stroke-width="1.2" opacity="0.28"/><path d="M30 -3L84 30" stroke="#7446d2" stroke-width="2.0" opacity="0.20"/><path d="M40 -3L90 26" stroke="#47279e" stroke-width="1" opacity="0.28"/><path d="M-3 -1L66 42" stroke="#7446d2" stroke-width="1" opacity="0.20"/><path d="M53 -3L98 24" stroke="#a82ccc" stroke-width="1.1" opacity="0.44"/><path d="M57 -3L101 22" stroke="#47279e" stroke-width="0.8" opacity="0.32"/><path d="M60.5 -3L103 20.5" stroke="#a82ccc" stroke-width="0.8" opacity="0.36"/><path d="M-3 9.6L57 49.6" stroke="#a82ccc" stroke-width="1.0" opacity="0.60"/><path d="M-3 14L48 48" stroke="#a82ccc" stroke-width="0.7" opacity="0.24"/><path d="M62 52L88 72" stroke="#a048c8" stroke-width="2.4" opacity=".75" stroke-linecap="round"/><path d="M58 50L70 60" stroke="#a82ccc" stroke-width="1" opacity=".5"/></g><circle cx="42.3" cy="25.5" r="1.25" fill="#c840a0" opacity=".85"/><g filter="url(#w1f)"><ellipse cx="46.6" cy="38.8" rx="3" ry="4.5" transform="rotate(-38 46.6 38.8)" fill="#e8507a"/><path d="M44.6 37.6L49 41" stroke="#5533b6" stroke-width="0.7" opacity=".7"/><path d="M60.4 47.6L69.4 36.4L75 37L75 54.6L65.6 58.6L60.8 54Z" fill="url(#w1o)"/></g></g><rect x="0.9" y="49.1" width="58.3" height="50" fill="#26222f"/><rect x="0.9" y="49.1" width="20.3" height="50" fill="#2b2736"/><rect x="0.9" y="49.1" width="58.3" height="3.6" fill="#221f2b"/><rect x="22" y="49.8" width="29" height="2.3" rx="0.5" fill="#1b1922"/><rect x="1.2" y="54" width="19.6" height="3.4" fill="#2f4d6e"/><circle cx="2.8" cy="51" r="1.5" fill="#9ab86a"/><rect x="2.2" y="55.1" width="1.3" height="1.3" fill="#8b8f99" opacity=".85"/><rect x="4.6" y="55.35" width="7" height="0.8" fill="#8b8f99" opacity=".55"/><rect x="2.2" y="58.6" width="1.3" height="1.3" fill="#8b8f99" opacity=".85"/><rect x="4.6" y="58.85" width="10" height="0.8" fill="#8b8f99" opacity=".55"/><rect x="2.2" y="62.6" width="1.3" height="1.3" fill="#8b8f99" opacity=".85"/><rect x="4.6" y="62.85" width="9" height="0.8" fill="#8b8f99" opacity=".55"/><rect x="2.2" y="66.2" width="1.3" height="1.3" fill="#8b8f99" opacity=".85"/><rect x="4.6" y="66.45" width="6" height="0.8" fill="#8b8f99" opacity=".55"/><rect x="2.2" y="69.60000000000001" width="1.3" height="1.3" fill="#8b8f99" opacity=".85"/><rect x="4.6" y="69.85000000000001" width="5" height="0.8" fill="#8b8f99" opacity=".55"/><rect x="2.2" y="72.80000000000001" width="1.3" height="1.3" fill="#8b8f99" opacity=".85"/><rect x="4.6" y="73.05000000000001" width="6" height="0.8" fill="#8b8f99" opacity=".55"/><rect x="2.2" y="76.2" width="1.3" height="1.3" fill="#8b8f99" opacity=".85"/><rect x="4.6" y="76.45" width="4" height="0.8" fill="#8b8f99" opacity=".55"/><rect x="2.2" y="79.60000000000001" width="1.3" height="1.3" fill="#8b8f99" opacity=".85"/><rect x="4.6" y="79.85000000000001" width="6" height="0.8" fill="#8b8f99" opacity=".55"/><rect x="2.2" y="82.80000000000001" width="1.3" height="1.3" fill="#8b8f99" opacity=".85"/><rect x="4.6" y="83.05000000000001" width="7" height="0.8" fill="#8b8f99" opacity=".55"/><rect x="2.2" y="86.2" width="1.3" height="1.3" fill="#8b8f99" opacity=".85"/><rect x="4.6" y="86.45" width="5" height="0.8" fill="#8b8f99" opacity=".55"/><rect x="2.2" y="89.60000000000001" width="1.3" height="1.3" fill="#8b8f99" opacity=".85"/><rect x="4.6" y="89.85000000000001" width="5" height="0.8" fill="#8b8f99" opacity=".55"/><rect x="2.2" y="92.80000000000001" width="1.3" height="1.3" fill="#8b8f99" opacity=".85"/><rect x="4.6" y="93.05000000000001" width="4" height="0.8" fill="#8b8f99" opacity=".55"/><rect x="22.5" y="54" width="8.6" height="9.8" fill="#2f4d6e" opacity=".8"/><rect x="24.8" y="55" width="3.8" height="4.2" fill="#1d1f24"/><rect x="25.6" y="55.8" width="2.2" height="1.6" fill="#aeb4bd"/><rect x="33.6" y="55.4" width="4.4" height="3.6" fill="#7cc4f0"/><rect x="33.6" y="55.4" width="4.4" height="0.9" fill="#d9ecfa"/><rect x="43" y="55.2" width="4.2" height="3.9" rx="0.5" fill="#2d9bf0"/><rect x="44.4" y="56.4" width="1.4" height="1.4" fill="#dff"/><rect x="24.4" y="60.4" width="4.6" height="0.7" fill="#8b8f99" opacity=".5"/><rect x="33.6" y="60.4" width="4.6" height="0.7" fill="#8b8f99" opacity=".5"/><rect x="43" y="60.4" width="4.6" height="0.7" fill="#8b8f99" opacity=".5"/><rect x="0.9" y="96.4" width="58.3" height="2.7" fill="#221f2b"/><rect x="1.6" y="97.3" width="8" height="0.9" fill="#8b8f99" opacity=".5"/><rect x="12.6" y="97.3" width="5" height="0.9" fill="#8b8f99" opacity=".5"/><rect x="23.6" y="97.3" width="4" height="0.9" fill="#8b8f99" opacity=".5"/><rect x="30" y="97.3" width="6.6" height="0.9" fill="#8b8f99" opacity=".5"/><rect x="38.6" y="97.3" width="5.6" height="0.9" fill="#8b8f99" opacity=".5"/><rect x="46" y="97.3" width="8.4" height="0.9" fill="#8b8f99" opacity=".5"/><rect x="70.6" y="9.4" width="90.8" height="56.6" fill="#000" opacity=".18"/><rect x="71" y="9.7" width="90" height="55.5" fill="#ffffff"/><rect x="71" y="9.7" width="90" height="7" fill="#eff0f1"/><rect x="71" y="16.7" width="14.4" height="48.5" fill="#f7f8f8"/><rect x="110" y="10.6" width="12" height="0.8" fill="#6d7378" opacity=".5"/><rect x="78" y="13.8" width="1.4" height="1.6" fill="#6d7378"/><rect x="87" y="14.2" width="4" height="0.8" fill="#6d7378" opacity=".6"/><rect x="148.6" y="13.6" width="1.6" height="1.6" fill="#6d7378"/><rect x="151" y="14" width="2.6" height="0.8" fill="#6d7378" opacity=".6"/><rect x="155.6" y="13.8" width="1" height="1.4" fill="#6d7378" opacity=".7"/><rect x="158" y="13.8" width="1.2" height="1.4" fill="#6d7378"/><rect x="71.4" y="20.4" width="13.6" height="2.6" fill="#bfe0f6"/><rect x="72.2" y="21.2" width="1.1" height="1.1" fill="#6d7378" opacity=".8"/><rect x="74.2" y="21.4" width="4" height="0.7" fill="#6d7378" opacity=".5"/><rect x="72.2" y="23.7" width="1.1" height="1.1" fill="#6d7378" opacity=".8"/><rect x="74.2" y="23.9" width="5" height="0.7" fill="#6d7378" opacity=".5"/><rect x="72.2" y="25.9" width="1.1" height="1.1" fill="#6d7378" opacity=".8"/><rect x="74.2" y="26.099999999999998" width="7" height="0.7" fill="#6d7378" opacity=".5"/><rect x="72.2" y="28.3" width="1.1" height="1.1" fill="#6d7378" opacity=".8"/><rect x="74.2" y="28.5" width="6" height="0.7" fill="#6d7378" opacity=".5"/><rect x="72.2" y="30.9" width="1.1" height="1.1" fill="#6d7378" opacity=".8"/><rect x="74.2" y="31.099999999999998" width="4" height="0.7" fill="#6d7378" opacity=".5"/><rect x="72.2" y="33.5" width="1.1" height="1.1" fill="#6d7378" opacity=".8"/><rect x="74.2" y="33.7" width="5" height="0.7" fill="#6d7378" opacity=".5"/><rect x="72.2" y="35.7" width="1.1" height="1.1" fill="#6d7378" opacity=".8"/><rect x="74.2" y="35.900000000000006" width="4" height="0.7" fill="#6d7378" opacity=".5"/><rect x="72.2" y="37.9" width="1.1" height="1.1" fill="#6d7378" opacity=".8"/><rect x="74.2" y="38.1" width="3" height="0.7" fill="#6d7378" opacity=".5"/><rect x="72.2" y="41.5" width="1.1" height="1.1" fill="#6d7378" opacity=".8"/><rect x="74.2" y="41.7" width="3" height="0.7" fill="#6d7378" opacity=".5"/><rect x="72.2" y="43.7" width="1.1" height="1.1" fill="#6d7378" opacity=".8"/><rect x="74.2" y="43.900000000000006" width="5" height="0.7" fill="#6d7378" opacity=".5"/><rect x="72.2" y="47.1" width="1.1" height="1.1" fill="#6d7378" opacity=".8"/><rect x="74.2" y="47.300000000000004" width="3" height="0.7" fill="#6d7378" opacity=".5"/><rect x="72.2" y="49.3" width="1.1" height="1.1" fill="#6d7378" opacity=".8"/><rect x="74.2" y="49.5" width="6" height="0.7" fill="#6d7378" opacity=".5"/><rect x="72.2" y="51.7" width="1.1" height="1.1" fill="#6d7378" opacity=".8"/><rect x="74.2" y="51.900000000000006" width="8" height="0.7" fill="#6d7378" opacity=".5"/><rect x="72.2" y="54.9" width="1.1" height="1.1" fill="#6d7378" opacity=".8"/><rect x="74.2" y="55.1" width="3" height="0.7" fill="#6d7378" opacity=".5"/><rect x="72.2" y="56.9" width="1.1" height="1.1" fill="#6d7378" opacity=".8"/><rect x="74.2" y="57.1" width="9" height="0.7" fill="#6d7378" opacity=".5"/><rect x="89.4" y="19.2" width="5.6" height="5" fill="#1d9ab5"/><path d="M95.0 19.2L91.4 22.4L93.0 24.2H95.0Z" fill="#c9377f"/><path d="M89.4 24.2L91.4 22.4L93.80000000000001 24.2Z" fill="#35615f"/><rect x="89.4" y="19.2" width="5.6" height="1" fill="#4a5057" opacity=".8"/><rect x="89.2" y="25.6" width="5" height="0.7" fill="#6d7378" opacity=".45"/><rect x="101.8" y="19.2" width="5.6" height="4.59" rx="0.4" fill="#3daee9"/><rect x="101.8" y="19.2" width="2.52" height="1.40" fill="#2a8fd0"/><rect x="102.6" y="24.5" width="4.0" height="0.5" fill="#9aa0a8" opacity=".6"/><rect x="101.6" y="25.6" width="6.6" height="0.7" fill="#6d7378" opacity=".45"/><rect x="114.1" y="19.2" width="5.6" height="4.59" rx="0.4" fill="#3daee9"/><rect x="114.1" y="19.2" width="2.52" height="1.40" fill="#2a8fd0"/><rect x="114.9" y="24.5" width="4.0" height="0.5" fill="#9aa0a8" opacity=".6"/><rect x="113.89999999999999" y="25.6" width="6" height="0.7" fill="#6d7378" opacity=".45"/><rect x="126.4" y="19.2" width="5.6" height="4.59" rx="0.4" fill="#3daee9"/><rect x="126.4" y="19.2" width="2.52" height="1.40" fill="#2a8fd0"/><rect x="127.2" y="24.5" width="4.0" height="0.5" fill="#9aa0a8" opacity=".6"/><rect x="126.2" y="25.6" width="4" height="0.7" fill="#6d7378" opacity=".45"/><rect x="138.7" y="19.2" width="5.6" height="4.59" rx="0.4" fill="#3daee9"/><rect x="138.7" y="19.2" width="2.52" height="1.40" fill="#2a8fd0"/><rect x="139.5" y="24.5" width="4.0" height="0.5" fill="#9aa0a8" opacity=".6"/><rect x="139.5" y="20.6" width="4" height="2.4" fill="#f2e9b0"/><rect x="139.5" y="21.8" width="4" height="1.2" fill="#4a9a54"/><rect x="138.5" y="25.6" width="5" height="0.7" fill="#6d7378" opacity=".45"/><rect x="151.0" y="19.2" width="5.6" height="4.59" rx="0.4" fill="#3daee9"/><rect x="151.0" y="19.2" width="2.52" height="1.40" fill="#2a8fd0"/><rect x="151.8" y="24.5" width="4.0" height="0.5" fill="#9aa0a8" opacity=".6"/><rect x="150.8" y="25.6" width="4.4" height="0.7" fill="#6d7378" opacity=".45"/><rect x="89.4" y="29.0" width="5.6" height="4.59" rx="0.4" fill="#3daee9"/><rect x="89.4" y="29.0" width="2.52" height="1.40" fill="#2a8fd0"/><rect x="90.2" y="34.3" width="4.0" height="0.5" fill="#9aa0a8" opacity=".6"/><rect x="89.4" y="35.3" width="5.4" height="0.7" fill="#6d7378" opacity=".45"/><rect x="101.8" y="29.0" width="5.6" height="4.59" rx="0.4" fill="#3daee9"/><rect x="101.8" y="29.0" width="2.52" height="1.40" fill="#2a8fd0"/><rect x="102.6" y="34.3" width="4.0" height="0.5" fill="#9aa0a8" opacity=".6"/><rect x="101.8" y="35.3" width="5.4" height="0.7" fill="#6d7378" opacity=".45"/><rect x="86" y="63" width="6" height="1.6" fill="#eff0f1"/><rect x="87" y="63.5" width="4" height="0.6" fill="#6d7378" opacity=".5"/><rect x="97.6" y="52.8" width="68.2" height="39.6" fill="#000" opacity=".22"/><rect x="98" y="53" width="67.4" height="38.7" fill="#f2f3f4"/><rect x="98" y="53" width="67.4" height="2.6" fill="#e9ebec"/><rect x="125" y="54" width="10" height="0.7" fill="#6c7176" opacity=".55"/><rect x="98.6" y="53.6" width="1.3" height="1.3" fill="#3daee9"/><rect x="99" y="57.6" width="4" height="4.2" rx="0.3" fill="#2d9bf0"/><rect x="100.2" y="58.8" width="1.6" height="1.8" fill="#eaf6ff"/><rect x="104" y="58" width="3" height="1.1" fill="#6c7176"/><rect x="104" y="60.2" width="4.6" height="0.9" fill="#6c7176" opacity=".7"/><rect x="114.6" y="57.6" width="5" height="2" fill="#f2f3f4"/><rect x="120.4" y="57.6" width="29" height="2" fill="#c4c7cb"/><rect x="115.4" y="58.3" width="3.2" height="0.7" fill="#6c7176" opacity=".7"/><rect x="121.4" y="58.3" width="10.6" height="0.7" fill="#6c7176" opacity=".7"/><rect x="134.6" y="58.3" width="5" height="0.7" fill="#6c7176" opacity=".7"/><rect x="141.6" y="58.3" width="6.6" height="0.7" fill="#6c7176" opacity=".7"/><rect x="114.2" y="61.6" width="47" height="0.7" fill="#6c7176" opacity="0.55"/><rect x="114.2" y="63" width="46" height="0.7" fill="#6c7176" opacity="0.5"/><rect x="114.2" y="64.8" width="48" height="0.7" fill="#6c7176" opacity="0.55"/><rect x="114.2" y="66.2" width="38" height="0.7" fill="#6c7176" opacity="0.5"/><rect x="114.2" y="67.6" width="7" height="0.7" fill="#6c7176" opacity="0.5"/><rect x="114.2" y="70" width="49" height="0.7" fill="#6c7176" opacity="0.55"/><rect x="114.2" y="72.2" width="44" height="0.7" fill="#6c7176" opacity="0.5"/><rect x="114.2" y="73.6" width="40" height="0.7" fill="#6c7176" opacity="0.5"/><rect x="114.2" y="76.4" width="45" height="0.7" fill="#6c7176" opacity="0.55"/><rect x="114.2" y="77.8" width="11" height="0.7" fill="#6c7176" opacity="0.5"/><rect x="117" y="77.8" width="10" height="0.7" fill="#3d9ad8" opacity=".8"/><rect x="131" y="73.6" width="12" height="0.7" fill="#3d9ad8" opacity=".7"/><rect x="130" y="63" width="9" height="0.7" fill="#3d9ad8" opacity=".7"/><path d="M100.4 72.6L99.4 69.4L103 69.2L104.6 67.2L106.6 69L110 65.6L110.6 69.6L112 71L110.2 73.4L112.4 76.4L109.4 77.6L110.6 81.2L107.6 81L106.8 85L103.6 82.2L100 83.2L101.6 79.8L99.2 78L101.4 75.6Z" fill="#58be2e"/><path d="M103.4 70.4L106 69.6L106.4 72.6L104.2 73.4Z" fill="#1d2a16"/><path d="M106 68.2L107.8 65L109 68.4L107.4 70Z" fill="#f2a526"/><path d="M100.8 74.6L104.4 73.8L104.6 77.6L101.6 78.2Z" fill="#e03424"/><path d="M107 74L110.4 74.6L109.6 77.4L106.6 77Z" fill="#e03424"/><path d="M103 79L106.4 78.4L106.2 82L103.6 81.6Z" fill="#8ad850"/><rect x="157.6" y="87.8" width="5.8" height="2.4" rx="0.3" fill="#c4c7cb" opacity=".7"/><rect x="159.6" y="88.7" width="2.6" height="0.7" fill="#6c7176" opacity=".7"/><rect x="0" y="99.6" width="171.4" height="4" fill="#2a2232"/><path d="M2 102.8L3.6 100.6" stroke="#c9ccd2" stroke-width="0.7"/><rect x="5.6" y="100.3" width="3.2" height="3" fill="#5a5f6b"/><rect x="10.6" y="100.5" width="2.6" height="2.8" rx="0.4" fill="#2d9bf0"/><rect x="14.4" y="100" width="4.4" height="3.6" fill="#7cc4f0"/><rect x="14.4" y="100" width="4.4" height="1" fill="#d9ecfa"/><rect x="143.6" y="100.9" width="1.2" height="1.6" fill="#c9ccd2" opacity=".55"/><rect x="146.4" y="100.9" width="0.9" height="1.6" fill="#c9ccd2" opacity=".55"/><rect x="148.8" y="100.9" width="1" height="1.6" fill="#c9ccd2" opacity=".55"/><rect x="151.4" y="100.9" width="0.9" height="1.6" fill="#c9ccd2" opacity=".55"/><rect x="153.6" y="100.9" width="2.2" height="1.6" fill="#c9ccd2" opacity=".55"/><rect x="157" y="100.9" width="0.5" height="1.6" fill="#c9ccd2" opacity=".55"/><rect x="160" y="100.9" width="4.6" height="1.6" fill="#c9ccd2" opacity=".55"/><rect x="167" y="100.9" width="1" height="1.6" fill="#c9ccd2" opacity=".55"/></svg></div><div class="lbl" style="left:2px;top:531.5px"><span class="t" style="letter-spacing:-0.144px">Brisa crepúsculo</span></div>
<div class="card csel" style="left:277px;top:412px"><svg width="172" height="104.6" viewBox="0 0 172 104" preserveAspectRatio="none"><defs><linearGradient id="w2a" x1="0" y1="0" x2="1" y2="1"><stop offset="0" stop-color="#741e90"/><stop offset="0.55" stop-color="#4c1662"/><stop offset="1" stop-color="#431450"/></linearGradient><linearGradient id="w2t" x1="0" y1="0" x2="1" y2="0.6"><stop offset="0.3" stop-color="#43145c"/><stop offset="1" stop-color="#4c1662"/></linearGradient><linearGradient id="w2d" gradientUnits="userSpaceOnUse" x1="0" y1="0" x2="80" y2="52"><stop offset="0" stop-color="#8c2cc2"/><stop offset="0.75" stop-color="#5533b6"/><stop offset="1" stop-color="#5533b6" stop-opacity=".6"/></linearGradient><linearGradient id="w2o" x1="0.6" y1="0" x2="0.3" y2="1"><stop offset="0" stop-color="#e8487e"/><stop offset="1" stop-color="#f2607c"/></linearGradient><filter id="w2f" x="-5%" y="-5%" width="110%" height="110%"><feGaussianBlur stdDeviation="0.55"/></filter><filter id="w2g" x="-5%" y="-5%" width="110%" height="110%"><feGaussianBlur stdDeviation="1.6"/></filter><clipPath id="w2c"><rect width="172" height="104"/></clipPath></defs><rect width="172" height="104" fill="url(#w2a)"/><g clip-path="url(#w2c)"><path d="M50 -2H174V40L100 34Z" fill="url(#w2t)" filter="url(#w2g)"/><g filter="url(#w2f)"><path d="M-2 -2H56L100 22L72 52L56 50L-2 10.6Z" fill="url(#w2d)"/><path d="M-3 2.5L62 46" stroke="#7446d2" stroke-width="2.2" opacity="0.28"/><path d="M-3 6.5L58 47" stroke="#47279e" stroke-width="1.0" opacity="0.32"/><path d="M8 -3L72 38" stroke="#7446d2" stroke-width="2.4" opacity="0.22"/><path d="M20 -3L80 34" stroke="#47279e" stroke-width="1.2" opacity="0.28"/><path d="M30 -3L84 30" stroke="#7446d2" stroke-width="2.0" opacity="0.20"/><path d="M40 -3L90 26" stroke="#47279e" stroke-width="1" opacity="0.28"/><path d="M-3 -1L66 42" stroke="#7446d2" stroke-width="1" opacity="0.20"/><path d="M53 -3L98 24" stroke="#a82ccc" stroke-width="1.1" opacity="0.44"/><path d="M57 -3L101 22" stroke="#47279e" stroke-width="0.8" opacity="0.32"/><path d="M60.5 -3L103 20.5" stroke="#a82ccc" stroke-width="0.8" opacity="0.36"/><path d="M-3 9.6L57 49.6" stroke="#a82ccc" stroke-width="1.0" opacity="0.60"/><path d="M-3 14L48 48" stroke="#a82ccc" stroke-width="0.7" opacity="0.24"/><path d="M62 52L88 72" stroke="#a048c8" stroke-width="2.4" opacity=".75" stroke-linecap="round"/><path d="M58 50L70 60" stroke="#a82ccc" stroke-width="1" opacity=".5"/></g><circle cx="42.3" cy="25.5" r="1.25" fill="#c840a0" opacity=".85"/><g filter="url(#w2f)"><ellipse cx="46.6" cy="38.8" rx="3" ry="4.5" transform="rotate(-38 46.6 38.8)" fill="#e8507a"/><path d="M44.6 37.6L49 41" stroke="#5533b6" stroke-width="0.7" opacity=".7"/><path d="M60.4 47.6L69.4 36.4L75 37L75 54.6L65.6 58.6L60.8 54Z" fill="url(#w2o)"/></g></g><rect x="0.9" y="49.1" width="58.3" height="50" fill="#26222f"/><rect x="0.9" y="49.1" width="20.3" height="50" fill="#2b2736"/><rect x="0.9" y="49.1" width="58.3" height="3.6" fill="#221f2b"/><rect x="22" y="49.8" width="29" height="2.3" rx="0.5" fill="#1b1922"/><rect x="1.2" y="54" width="19.6" height="3.4" fill="#2f4d6e"/><circle cx="2.8" cy="51" r="1.5" fill="#9ab86a"/><rect x="2.2" y="55.1" width="1.3" height="1.3" fill="#8b8f99" opacity=".85"/><rect x="4.6" y="55.35" width="7" height="0.8" fill="#8b8f99" opacity=".55"/><rect x="2.2" y="58.6" width="1.3" height="1.3" fill="#8b8f99" opacity=".85"/><rect x="4.6" y="58.85" width="10" height="0.8" fill="#8b8f99" opacity=".55"/><rect x="2.2" y="62.6" width="1.3" height="1.3" fill="#8b8f99" opacity=".85"/><rect x="4.6" y="62.85" width="9" height="0.8" fill="#8b8f99" opacity=".55"/><rect x="2.2" y="66.2" width="1.3" height="1.3" fill="#8b8f99" opacity=".85"/><rect x="4.6" y="66.45" width="6" height="0.8" fill="#8b8f99" opacity=".55"/><rect x="2.2" y="69.60000000000001" width="1.3" height="1.3" fill="#8b8f99" opacity=".85"/><rect x="4.6" y="69.85000000000001" width="5" height="0.8" fill="#8b8f99" opacity=".55"/><rect x="2.2" y="72.80000000000001" width="1.3" height="1.3" fill="#8b8f99" opacity=".85"/><rect x="4.6" y="73.05000000000001" width="6" height="0.8" fill="#8b8f99" opacity=".55"/><rect x="2.2" y="76.2" width="1.3" height="1.3" fill="#8b8f99" opacity=".85"/><rect x="4.6" y="76.45" width="4" height="0.8" fill="#8b8f99" opacity=".55"/><rect x="2.2" y="79.60000000000001" width="1.3" height="1.3" fill="#8b8f99" opacity=".85"/><rect x="4.6" y="79.85000000000001" width="6" height="0.8" fill="#8b8f99" opacity=".55"/><rect x="2.2" y="82.80000000000001" width="1.3" height="1.3" fill="#8b8f99" opacity=".85"/><rect x="4.6" y="83.05000000000001" width="7" height="0.8" fill="#8b8f99" opacity=".55"/><rect x="2.2" y="86.2" width="1.3" height="1.3" fill="#8b8f99" opacity=".85"/><rect x="4.6" y="86.45" width="5" height="0.8" fill="#8b8f99" opacity=".55"/><rect x="2.2" y="89.60000000000001" width="1.3" height="1.3" fill="#8b8f99" opacity=".85"/><rect x="4.6" y="89.85000000000001" width="5" height="0.8" fill="#8b8f99" opacity=".55"/><rect x="2.2" y="92.80000000000001" width="1.3" height="1.3" fill="#8b8f99" opacity=".85"/><rect x="4.6" y="93.05000000000001" width="4" height="0.8" fill="#8b8f99" opacity=".55"/><rect x="22.5" y="54" width="8.6" height="9.8" fill="#2f4d6e" opacity=".8"/><rect x="24.8" y="55" width="3.8" height="4.2" fill="#1d1f24"/><rect x="25.6" y="55.8" width="2.2" height="1.6" fill="#aeb4bd"/><rect x="33.6" y="55.4" width="4.4" height="3.6" fill="#7cc4f0"/><rect x="33.6" y="55.4" width="4.4" height="0.9" fill="#d9ecfa"/><rect x="43" y="55.2" width="4.2" height="3.9" rx="0.5" fill="#2d9bf0"/><rect x="44.4" y="56.4" width="1.4" height="1.4" fill="#dff"/><rect x="24.4" y="60.4" width="4.6" height="0.7" fill="#8b8f99" opacity=".5"/><rect x="33.6" y="60.4" width="4.6" height="0.7" fill="#8b8f99" opacity=".5"/><rect x="43" y="60.4" width="4.6" height="0.7" fill="#8b8f99" opacity=".5"/><rect x="0.9" y="96.4" width="58.3" height="2.7" fill="#221f2b"/><rect x="1.6" y="97.3" width="8" height="0.9" fill="#8b8f99" opacity=".5"/><rect x="12.6" y="97.3" width="5" height="0.9" fill="#8b8f99" opacity=".5"/><rect x="23.6" y="97.3" width="4" height="0.9" fill="#8b8f99" opacity=".5"/><rect x="30" y="97.3" width="6.6" height="0.9" fill="#8b8f99" opacity=".5"/><rect x="38.6" y="97.3" width="5.6" height="0.9" fill="#8b8f99" opacity=".5"/><rect x="46" y="97.3" width="8.4" height="0.9" fill="#8b8f99" opacity=".5"/><rect x="70.6" y="9.4" width="90.8" height="56.6" fill="#000" opacity=".18"/><rect x="71" y="9.7" width="90" height="55.5" fill="#1b1e20"/><rect x="71" y="9.7" width="90" height="7" fill="#26292d"/><rect x="71" y="16.7" width="14.4" height="48.5" fill="#1f2225"/><rect x="110" y="10.6" width="12" height="0.8" fill="#aab0b6" opacity=".5"/><rect x="78" y="13.8" width="1.4" height="1.6" fill="#aab0b6"/><rect x="87" y="14.2" width="4" height="0.8" fill="#aab0b6" opacity=".6"/><rect x="148.6" y="13.6" width="1.6" height="1.6" fill="#aab0b6"/><rect x="151" y="14" width="2.6" height="0.8" fill="#aab0b6" opacity=".6"/><rect x="155.6" y="13.8" width="1" height="1.4" fill="#aab0b6" opacity=".7"/><rect x="158" y="13.8" width="1.2" height="1.4" fill="#aab0b6"/><rect x="71.4" y="20.4" width="13.6" height="2.6" fill="#285a80"/><rect x="72.2" y="21.2" width="1.1" height="1.1" fill="#aab0b6" opacity=".8"/><rect x="74.2" y="21.4" width="4" height="0.7" fill="#aab0b6" opacity=".5"/><rect x="72.2" y="23.7" width="1.1" height="1.1" fill="#aab0b6" opacity=".8"/><rect x="74.2" y="23.9" width="5" height="0.7" fill="#aab0b6" opacity=".5"/><rect x="72.2" y="25.9" width="1.1" height="1.1" fill="#aab0b6" opacity=".8"/><rect x="74.2" y="26.099999999999998" width="7" height="0.7" fill="#aab0b6" opacity=".5"/><rect x="72.2" y="28.3" width="1.1" height="1.1" fill="#aab0b6" opacity=".8"/><rect x="74.2" y="28.5" width="6" height="0.7" fill="#aab0b6" opacity=".5"/><rect x="72.2" y="30.9" width="1.1" height="1.1" fill="#aab0b6" opacity=".8"/><rect x="74.2" y="31.099999999999998" width="4" height="0.7" fill="#aab0b6" opacity=".5"/><rect x="72.2" y="33.5" width="1.1" height="1.1" fill="#aab0b6" opacity=".8"/><rect x="74.2" y="33.7" width="5" height="0.7" fill="#aab0b6" opacity=".5"/><rect x="72.2" y="35.7" width="1.1" height="1.1" fill="#aab0b6" opacity=".8"/><rect x="74.2" y="35.900000000000006" width="4" height="0.7" fill="#aab0b6" opacity=".5"/><rect x="72.2" y="37.9" width="1.1" height="1.1" fill="#aab0b6" opacity=".8"/><rect x="74.2" y="38.1" width="3" height="0.7" fill="#aab0b6" opacity=".5"/><rect x="72.2" y="41.5" width="1.1" height="1.1" fill="#aab0b6" opacity=".8"/><rect x="74.2" y="41.7" width="3" height="0.7" fill="#aab0b6" opacity=".5"/><rect x="72.2" y="43.7" width="1.1" height="1.1" fill="#aab0b6" opacity=".8"/><rect x="74.2" y="43.900000000000006" width="5" height="0.7" fill="#aab0b6" opacity=".5"/><rect x="72.2" y="47.1" width="1.1" height="1.1" fill="#aab0b6" opacity=".8"/><rect x="74.2" y="47.300000000000004" width="3" height="0.7" fill="#aab0b6" opacity=".5"/><rect x="72.2" y="49.3" width="1.1" height="1.1" fill="#aab0b6" opacity=".8"/><rect x="74.2" y="49.5" width="6" height="0.7" fill="#aab0b6" opacity=".5"/><rect x="72.2" y="51.7" width="1.1" height="1.1" fill="#aab0b6" opacity=".8"/><rect x="74.2" y="51.900000000000006" width="8" height="0.7" fill="#aab0b6" opacity=".5"/><rect x="72.2" y="54.9" width="1.1" height="1.1" fill="#aab0b6" opacity=".8"/><rect x="74.2" y="55.1" width="3" height="0.7" fill="#aab0b6" opacity=".5"/><rect x="72.2" y="56.9" width="1.1" height="1.1" fill="#aab0b6" opacity=".8"/><rect x="74.2" y="57.1" width="9" height="0.7" fill="#aab0b6" opacity=".5"/><rect x="89.4" y="19.2" width="5.6" height="5" fill="#1d9ab5"/><path d="M95.0 19.2L91.4 22.4L93.0 24.2H95.0Z" fill="#c9377f"/><path d="M89.4 24.2L91.4 22.4L93.80000000000001 24.2Z" fill="#35615f"/><rect x="89.4" y="19.2" width="5.6" height="1" fill="#4a5057" opacity=".8"/><rect x="89.2" y="25.6" width="5" height="0.7" fill="#aab0b6" opacity=".45"/><rect x="101.8" y="19.2" width="5.6" height="4.59" rx="0.4" fill="#3daee9"/><rect x="101.8" y="19.2" width="2.52" height="1.40" fill="#2a8fd0"/><rect x="102.6" y="24.5" width="4.0" height="0.5" fill="#9aa0a8" opacity=".6"/><rect x="101.6" y="25.6" width="6.6" height="0.7" fill="#aab0b6" opacity=".45"/><rect x="114.1" y="19.2" width="5.6" height="4.59" rx="0.4" fill="#3daee9"/><rect x="114.1" y="19.2" width="2.52" height="1.40" fill="#2a8fd0"/><rect x="114.9" y="24.5" width="4.0" height="0.5" fill="#9aa0a8" opacity=".6"/><rect x="113.89999999999999" y="25.6" width="6" height="0.7" fill="#aab0b6" opacity=".45"/><rect x="126.4" y="19.2" width="5.6" height="4.59" rx="0.4" fill="#3daee9"/><rect x="126.4" y="19.2" width="2.52" height="1.40" fill="#2a8fd0"/><rect x="127.2" y="24.5" width="4.0" height="0.5" fill="#9aa0a8" opacity=".6"/><rect x="126.2" y="25.6" width="4" height="0.7" fill="#aab0b6" opacity=".45"/><rect x="138.7" y="19.2" width="5.6" height="4.59" rx="0.4" fill="#3daee9"/><rect x="138.7" y="19.2" width="2.52" height="1.40" fill="#2a8fd0"/><rect x="139.5" y="24.5" width="4.0" height="0.5" fill="#9aa0a8" opacity=".6"/><rect x="139.5" y="20.6" width="4" height="2.4" fill="#f2e9b0"/><rect x="139.5" y="21.8" width="4" height="1.2" fill="#4a9a54"/><rect x="138.5" y="25.6" width="5" height="0.7" fill="#aab0b6" opacity=".45"/><rect x="151.0" y="19.2" width="5.6" height="4.59" rx="0.4" fill="#3daee9"/><rect x="151.0" y="19.2" width="2.52" height="1.40" fill="#2a8fd0"/><rect x="151.8" y="24.5" width="4.0" height="0.5" fill="#9aa0a8" opacity=".6"/><rect x="150.8" y="25.6" width="4.4" height="0.7" fill="#aab0b6" opacity=".45"/><rect x="89.4" y="29.0" width="5.6" height="4.59" rx="0.4" fill="#3daee9"/><rect x="89.4" y="29.0" width="2.52" height="1.40" fill="#2a8fd0"/><rect x="90.2" y="34.3" width="4.0" height="0.5" fill="#9aa0a8" opacity=".6"/><rect x="89.4" y="35.3" width="5.4" height="0.7" fill="#aab0b6" opacity=".45"/><rect x="101.8" y="29.0" width="5.6" height="4.59" rx="0.4" fill="#3daee9"/><rect x="101.8" y="29.0" width="2.52" height="1.40" fill="#2a8fd0"/><rect x="102.6" y="34.3" width="4.0" height="0.5" fill="#9aa0a8" opacity=".6"/><rect x="101.8" y="35.3" width="5.4" height="0.7" fill="#aab0b6" opacity=".45"/><rect x="86" y="63" width="6" height="1.6" fill="#26292d"/><rect x="87" y="63.5" width="4" height="0.6" fill="#aab0b6" opacity=".5"/><rect x="97.6" y="52.8" width="68.2" height="39.6" fill="#000" opacity=".22"/><rect x="98" y="53" width="67.4" height="38.7" fill="#26292d"/><rect x="98" y="53" width="67.4" height="2.6" fill="#2c3034"/><rect x="125" y="54" width="10" height="0.7" fill="#c4c8cc" opacity=".55"/><rect x="98.6" y="53.6" width="1.3" height="1.3" fill="#3daee9"/><rect x="99" y="57.6" width="4" height="4.2" rx="0.3" fill="#2d9bf0"/><rect x="100.2" y="58.8" width="1.6" height="1.8" fill="#eaf6ff"/><rect x="104" y="58" width="3" height="1.1" fill="#c4c8cc"/><rect x="104" y="60.2" width="4.6" height="0.9" fill="#c4c8cc" opacity=".7"/><rect x="114.6" y="57.6" width="5" height="2" fill="#26292d"/><rect x="120.4" y="57.6" width="29" height="2" fill="#3a3e43"/><rect x="115.4" y="58.3" width="3.2" height="0.7" fill="#c4c8cc" opacity=".7"/><rect x="121.4" y="58.3" width="10.6" height="0.7" fill="#c4c8cc" opacity=".7"/><rect x="134.6" y="58.3" width="5" height="0.7" fill="#c4c8cc" opacity=".7"/><rect x="141.6" y="58.3" width="6.6" height="0.7" fill="#c4c8cc" opacity=".7"/><rect x="114.2" y="61.6" width="47" height="0.7" fill="#c4c8cc" opacity="0.55"/><rect x="114.2" y="63" width="46" height="0.7" fill="#c4c8cc" opacity="0.5"/><rect x="114.2" y="64.8" width="48" height="0.7" fill="#c4c8cc" opacity="0.55"/><rect x="114.2" y="66.2" width="38" height="0.7" fill="#c4c8cc" opacity="0.5"/><rect x="114.2" y="67.6" width="7" height="0.7" fill="#c4c8cc" opacity="0.5"/><rect x="114.2" y="70" width="49" height="0.7" fill="#c4c8cc" opacity="0.55"/><rect x="114.2" y="72.2" width="44" height="0.7" fill="#c4c8cc" opacity="0.5"/><rect x="114.2" y="73.6" width="40" height="0.7" fill="#c4c8cc" opacity="0.5"/><rect x="114.2" y="76.4" width="45" height="0.7" fill="#c4c8cc" opacity="0.55"/><rect x="114.2" y="77.8" width="11" height="0.7" fill="#c4c8cc" opacity="0.5"/><rect x="117" y="77.8" width="10" height="0.7" fill="#3d9ad8" opacity=".8"/><rect x="131" y="73.6" width="12" height="0.7" fill="#3d9ad8" opacity=".7"/><rect x="130" y="63" width="9" height="0.7" fill="#3d9ad8" opacity=".7"/><path d="M100.4 72.6L99.4 69.4L103 69.2L104.6 67.2L106.6 69L110 65.6L110.6 69.6L112 71L110.2 73.4L112.4 76.4L109.4 77.6L110.6 81.2L107.6 81L106.8 85L103.6 82.2L100 83.2L101.6 79.8L99.2 78L101.4 75.6Z" fill="#58be2e"/><path d="M103.4 70.4L106 69.6L106.4 72.6L104.2 73.4Z" fill="#1d2a16"/><path d="M106 68.2L107.8 65L109 68.4L107.4 70Z" fill="#f2a526"/><path d="M100.8 74.6L104.4 73.8L104.6 77.6L101.6 78.2Z" fill="#e03424"/><path d="M107 74L110.4 74.6L109.6 77.4L106.6 77Z" fill="#e03424"/><path d="M103 79L106.4 78.4L106.2 82L103.6 81.6Z" fill="#8ad850"/><rect x="157.6" y="87.8" width="5.8" height="2.4" rx="0.3" fill="#3a3e43" opacity=".7"/><rect x="159.6" y="88.7" width="2.6" height="0.7" fill="#c4c8cc" opacity=".7"/><rect x="0" y="99.6" width="171.4" height="4" fill="#2a2232"/><path d="M2 102.8L3.6 100.6" stroke="#c9ccd2" stroke-width="0.7"/><rect x="5.6" y="100.3" width="3.2" height="3" fill="#5a5f6b"/><rect x="10.6" y="100.5" width="2.6" height="2.8" rx="0.4" fill="#2d9bf0"/><rect x="14.4" y="100" width="4.4" height="3.6" fill="#7cc4f0"/><rect x="14.4" y="100" width="4.4" height="1" fill="#d9ecfa"/><rect x="143.6" y="100.9" width="1.2" height="1.6" fill="#c9ccd2" opacity=".55"/><rect x="146.4" y="100.9" width="0.9" height="1.6" fill="#c9ccd2" opacity=".55"/><rect x="148.8" y="100.9" width="1" height="1.6" fill="#c9ccd2" opacity=".55"/><rect x="151.4" y="100.9" width="0.9" height="1.6" fill="#c9ccd2" opacity=".55"/><rect x="153.6" y="100.9" width="2.2" height="1.6" fill="#c9ccd2" opacity=".55"/><rect x="157" y="100.9" width="0.5" height="1.6" fill="#c9ccd2" opacity=".55"/><rect x="160" y="100.9" width="4.6" height="1.6" fill="#c9ccd2" opacity=".55"/><rect x="167" y="100.9" width="1" height="1.6" fill="#c9ccd2" opacity=".55"/></svg><div class="ov" style="left:120px"><svg width="12" height="12" viewBox="0 0 12 12"><rect x="0.5" y="0.5" width="11" height="11" fill="none" stroke="#fff"/><path d="M1 11V8.4L4 5.6L6.4 8L8.2 6.6L11 9.2V11Z" fill="#fff"/><circle cx="3.8" cy="3.4" r="1.3" fill="#fff"/><path d="M1 1H11V6.4L8.2 4.4L6.4 6L4.6 4.6L1 7.6Z" fill="#fff" opacity="0"/></svg></div><div class="ov dis" style="left:148px"><svg width="12" height="13" viewBox="0 0 12 13"><path d="M0.5 3.5H11.5M4 3.5V1H8V3.5M2.5 3.5V12H9.5V3.5" fill="none" stroke="#c9ccd4" stroke-width="1"/></svg></div></div><div class="lbl b" style="left:245px;top:531.5px"><span class="t" style="letter-spacing:-0.392px">Brisa oscuro</span></div>
<div class="card" style="left:520px;top:412px"><svg width="172" height="104.6" viewBox="0 0 172 104" preserveAspectRatio="none"><defs><linearGradient id="d3a" x1="0" y1="0" x2="1" y2="0.25"><stop offset="0" stop-color="#a62b58"/><stop offset="0.3" stop-color="#a42c5c"/><stop offset="0.6" stop-color="#85285a"/><stop offset="1" stop-color="#5a1c4c"/></linearGradient><linearGradient id="d3b" x1="0" y1="0" x2="0" y2="1"><stop offset="0" stop-color="#c04a78" stop-opacity=".25"/><stop offset="0.5" stop-color="#000" stop-opacity="0"/><stop offset="1" stop-color="#3a0c28" stop-opacity=".45"/></linearGradient><linearGradient id="d3k" x1="0" y1="0" x2="1" y2="0"><stop offset="0" stop-color="#1a0828" stop-opacity="0"/><stop offset="1" stop-color="#1a0828" stop-opacity=".7"/></linearGradient><linearGradient id="d3r" x1="0" y1="0" x2="1" y2="0"><stop offset="0" stop-color="#8a22ff"/><stop offset="0.5" stop-color="#d0109a"/><stop offset="1" stop-color="#ff1428"/></linearGradient><filter id="d3f"><feGaussianBlur stdDeviation="0.4"/></filter><clipPath id="d3c"><rect width="172" height="104"/></clipPath></defs><rect width="172" height="104" fill="url(#d3a)"/><rect width="172" height="104" fill="url(#d3b)"/><g clip-path="url(#d3c)"><g filter="url(#d3f)"><path d="M70.0 0.0L65.0 -1.2L67.3 2.7L63.0 1.9L64.7 5.3L58.3 3.2L62.0 8.0L58.3 7.8L60.0 11.3L54.5 9.9L58.0 14.7L53.1 13.7L56.0 18.0L51.9 18.2L53.0 22.0L47.1 21.0L50.0 26.0L46.0 26.2L47.0 30.0L41.7 29.2L44.7 34.0L40.8 34.2L42.3 38.0L38.4 38.1L40.0 42.0L34.9 40.8L38.0 45.3L31.3 43.1L36.0 48.7L32.1 48.3L34.0 52.0L31.0 51.4L34.7 55.3L30.1 53.6L35.3 58.7L29.5 56.1L36.0 62.0L31.6 60.4L36.7 65.3L33.0 64.3L37.3 68.7L31.4 66.0L38.0 72.0L36.1 71.6L39.3 74.7L34.2 72.0L40.7 77.3L37.8 76.2L42.0 80.0L41.4 78.6L46.7 81.3L46.1 80.0L51.3 82.7L50.0 80.8L56.0 84.0L51.0 81.4L57.3 86.7L54.9 85.9L58.7 89.3L54.6 87.4L60.0 92.0L57.0 89.3L64.0 93.3L62.1 91.3L68.0 94.7L65.4 92.2L72.0 96.0L72.0 93.2L77.3 94.0L77.4 91.2L82.7 92.0L82.1 88.8L88.0 90.0L84.2 85.5L90.7 88.0L87.9 84.2L93.3 86.0L91.0 82.5L96.0 84.0L93.9 80.4L101.3 83.3L99.8 80.1L106.7 82.7L105.7 79.9L112.0 82.0L109.1 78.8L117.3 83.3L114.8 80.4L122.7 84.7L122.0 83.0L128.0 86.0L125.3 83.8L132.0 88.0L129.5 85.9L136.0 90.0L132.1 86.9L140.0 92.0L136.3 89.7L143.3 94.7L141.4 93.6L146.7 97.3L142.0 94.3L150.0 100.0L148.1 98.7L152.0 101.3L148.9 99.2L154.0 102.7L149.6 99.6L172 104V0Z" fill="#37113f" opacity=".96"/><path d="M96 0L88 10L100 8L94 20L110 14L140 26L152 56L172 66V0Z" fill="#220a34" opacity=".85"/><path d="M88 84L100 96L120 88L136 98L140 92L128 86L112 82L96 84Z" fill="#8a2a5a" opacity=".5"/><rect x="86" y="0" width="86" height="104" fill="url(#d3k)"/><path d="M150 50L160 72M142 40L156 64M128 12L146 20M108 7L124 5M132 92L150 100" stroke="#b04078" stroke-width="1.4" opacity=".45"/></g><path d="M28 52L36 60L33 66L38 76L36 82M32 56L40 68M30 58L34 72" fill="none" stroke="#f4c0d6" stroke-width="0.8" opacity=".75"/><path d="M36 38L40 44L36 50" fill="none" stroke="#e090b8" stroke-width="0.6" opacity=".5"/></g><rect width="172" height="4.6" fill="#5a1a40" opacity=".55"/><circle cx="2.6" cy="2.4" r="0.8" fill="#ff3040"/><rect x="6" y="2" width="4.6" height="0.9" fill="#f4d8e4" opacity="0.95"/><rect x="12.4" y="2" width="2" height="0.9" fill="#f4d8e4" opacity="0.6"/><rect x="15.4" y="2" width="2" height="0.9" fill="#f4d8e4" opacity="0.6"/><rect x="18.4" y="2" width="2" height="0.9" fill="#f4d8e4" opacity="0.6"/><rect x="21.4" y="2" width="7" height="0.9" fill="#f4d8e4" opacity="0.6"/><rect x="29.6" y="2" width="4" height="0.9" fill="#f4d8e4" opacity="0.6"/><rect x="35" y="2" width="5.6" height="0.9" fill="#f4d8e4" opacity="0.6"/><rect x="41.8" y="2" width="3" height="0.9" fill="#f4d8e4" opacity="0.6"/><rect x="46" y="2" width="4" height="0.9" fill="#f4d8e4" opacity="0.6"/><text x="87" y="3.9" text-anchor="middle" font-family="Liberation Sans,sans-serif" font-size="3.3" fill="#f6e6ee" opacity=".95">February 15, 2024  1:19 PM</text><circle cx="158" cy="2.4" r="0.7" fill="#c040e0"/><circle cx="161" cy="2.4" r="0.7" fill="#e04090"/><circle cx="164" cy="2.4" r="0.7" fill="#a040e0"/><circle cx="168.6" cy="2.4" r="1.5" fill="#3a5a30" opacity=".8"/><rect x="41" y="20" width="99.6" height="60.5" fill="#2b1429" opacity=".88"/><rect x="41" y="20" width="99.6" height="1.8" fill="#1a0c18"/><circle cx="45" cy="20.9" r="0.6" fill="#e0c020"/><rect x="88" y="20.5" width="12" height="0.8" fill="#e8d8e0" opacity=".7"/><circle cx="58.2" cy="40.4" r="15.4" fill="none" stroke="url(#d3r)" stroke-width="1.7"/><path d="M46 37C48 33 51 30.5 55 30L53.4 32.6C57 30.6 61 30.2 64 32L66.4 28.6L67.4 33.6C70 35.6 72 39 72.6 42.6L69 42L70.4 45.6C68 46.6 66.4 45.6 65.6 44C64 45 63 47 63.4 49.6C60 48 58 48.6 56.6 51.6L57.6 55C53 54.6 49.6 51.6 48.6 47.6L51.4 48L50 44.6L47 45.6L48.6 41.6L45.4 42Z" fill="url(#d3r)"/><circle cx="66.6" cy="37.6" r="0.7" fill="#ffd21a"/><rect x="77.7" y="24" width="19" height="1.1" fill="#ff3a6a"/><rect x="77.7" y="27.4" width="5.6" height="1" fill="#ff3a7a"/><rect x="84.2" y="27.4" width="14" height="1" fill="#e8dce4" opacity=".7"/><rect x="77.7" y="29.3" width="5.6" height="1" fill="#ff3a7a"/><rect x="84.2" y="29.3" width="11" height="1" fill="#e8dce4" opacity=".7"/><rect x="77.7" y="31.3" width="5.6" height="1" fill="#ff3a7a"/><rect x="84.2" y="31.3" width="16" height="1" fill="#e8dce4" opacity=".7"/><rect x="77.7" y="33.2" width="5.6" height="1" fill="#ff3a7a"/><rect x="84.2" y="33.2" width="9" height="1" fill="#e8dce4" opacity=".7"/><rect x="77.7" y="37.1" width="5.6" height="1" fill="#ff3a7a"/><rect x="84.2" y="37.1" width="22" height="1" fill="#e8dce4" opacity=".7"/><rect x="77.7" y="39.1" width="5.6" height="1" fill="#ff3a7a"/><rect x="84.2" y="39.1" width="10" height="1" fill="#e8dce4" opacity=".7"/><rect x="77.7" y="41.1" width="5.6" height="1" fill="#ff3a7a"/><rect x="84.2" y="41.1" width="15" height="1" fill="#e8dce4" opacity=".7"/><rect x="77.7" y="44.7" width="5.6" height="1" fill="#ff3a7a"/><rect x="84.2" y="44.7" width="27" height="1" fill="#e8dce4" opacity=".7"/><rect x="77.7" y="46.6" width="5.6" height="1" fill="#ff3a7a"/><rect x="84.2" y="46.6" width="17" height="1" fill="#e8dce4" opacity=".7"/><rect x="77.7" y="48.6" width="5.6" height="1" fill="#ff3a7a"/><rect x="84.2" y="48.6" width="24" height="1" fill="#e8dce4" opacity=".7"/><rect x="77.70" y="51.9" width="2.8" height="4.2" fill="#7d7d85"/><rect x="80.42" y="51.9" width="2.8" height="4.2" fill="#e8364f"/><rect x="83.14" y="51.9" width="2.8" height="4.2" fill="#36e07a"/><rect x="85.86" y="51.9" width="2.8" height="4.2" fill="#f0d040"/><rect x="88.58" y="51.9" width="2.8" height="4.2" fill="#5a8cf0"/><rect x="91.30" y="51.9" width="2.8" height="4.2" fill="#c060e8"/><rect x="94.02" y="51.9" width="2.8" height="4.2" fill="#30d0e8"/><rect x="96.74" y="51.9" width="2.8" height="4.2" fill="#f4f4f4"/><rect x="43.6" y="62" width="12" height="1" fill="#ff3a7a" opacity=".8"/><rect x="121.6" y="66" width="0.5" height="3.4" fill="#d8c8d0" opacity=".6"/><rect x="58.0" y="98.8" width="4.6" height="4.6" rx="1" fill="#c0406a"/><rect x="65.3" y="98.8" width="4.6" height="4.6" rx="1" fill="#f08a2a"/><rect x="72.6" y="98.8" width="4.6" height="4.6" rx="1" fill="#4a6af0"/><rect x="79.9" y="98.8" width="4.6" height="4.6" rx="1" fill="#f0901a"/><rect x="87.2" y="98.8" width="4.6" height="4.6" rx="1" fill="#e0602a"/><rect x="94.5" y="98.8" width="4.6" height="4.6" rx="1" fill="#a030e0"/><rect x="101.8" y="98.8" width="4.6" height="4.6" rx="1" fill="#8a28d0"/><rect x="109.1" y="98.8" width="4.6" height="4.6" rx="1" fill="#e05a70"/><rect x="64.6" y="100" width="4" height="2" fill="#2a1a4a" opacity=".7"/><rect x="79.8" y="100.4" width="3.6" height="2.4" fill="#5a2a0a" opacity=".5"/></svg></div><div class="lbl" style="left:488px;top:531.5px"><span class="t" style="letter-spacing:-0.362px">Dr460nized</span></div>
<div class="card" style="left:34px;top:579px"><svg width="172" height="104.6" viewBox="0 0 172 104" preserveAspectRatio="none"><defs><linearGradient id="n4a" x1="0.1" y1="1" x2="0.9" y2="0"><stop offset="0" stop-color="#20242b"/><stop offset="0.4" stop-color="#353a45"/><stop offset="0.75" stop-color="#494e5b"/><stop offset="1" stop-color="#636979"/></linearGradient><linearGradient id="n4m" x1="0" y1="0" x2="0" y2="1"><stop offset="0" stop-color="#20242c"/><stop offset="0.5" stop-color="#191c23"/><stop offset="1" stop-color="#12151a"/></linearGradient><filter id="n4f"><feGaussianBlur stdDeviation="0.5"/></filter></defs><rect width="172" height="104" fill="url(#n4a)"/><g filter="url(#n4f)"><path d="M0 62L10 60L20 56L27 52.6L30 52L36 56L44 60L54 64L60 66H118L128 60L136 53L141 50.6L146 54L152 59L162 63L172 66V104H0Z" fill="url(#n4m)"/><path d="M20 56L27 52.6L30 52L36 56L30 56L26 58Z" fill="#343842" opacity=".6"/><path d="M136 51L140 49.6L146 54L150 60L143 57Z" fill="#3a3f49" opacity=".7"/><path d="M0 88C40 82 80 86 120 84C150 83 160 86 172 85V104H0Z" fill="#12151a"/></g><rect width="172" height="4.6" fill="#3f444e" opacity=".85"/><rect x="1.4" y="1.8" width="0.6" height="0.9" fill="#d8dce4" opacity=".5"/><rect x="4" y="1.8" width="4.4" height="0.9" fill="#d8dce4" opacity=".5"/><rect x="10.6" y="1.8" width="4" height="0.9" fill="#d8dce4" opacity=".5"/><rect x="17" y="1.8" width="2" height="0.9" fill="#d8dce4" opacity=".5"/><rect x="21.6" y="1.8" width="1.6" height="0.9" fill="#d8dce4" opacity=".5"/><rect x="27.6" y="1.8" width="9" height="0.9" fill="#d8dce4" opacity=".5"/><rect x="38.6" y="1.8" width="8.6" height="0.9" fill="#d8dce4" opacity=".5"/><rect x="49.6" y="1.8" width="5" height="0.9" fill="#d8dce4" opacity=".5"/><rect x="78" y="1.8" width="9" height="0.9" fill="#d8dce4" opacity=".5"/><rect x="89" y="1.8" width="4.6" height="0.9" fill="#d8dce4" opacity=".5"/><rect x="150" y="1.5" width="0.6" height="1.5" fill="#e4e8f0" opacity=".7"/><rect x="152" y="1.5" width="2" height="1.5" fill="#e4e8f0" opacity=".7"/><rect x="155.6" y="1.5" width="1" height="1.5" fill="#e4e8f0" opacity=".7"/><rect x="158" y="1.5" width="1.6" height="1.5" fill="#e4e8f0" opacity=".7"/><rect x="161" y="1.5" width="1.6" height="1.5" fill="#e4e8f0" opacity=".7"/><rect x="164" y="1.5" width="0.8" height="1.5" fill="#e4e8f0" opacity=".7"/><rect x="166" y="1.5" width="2" height="1.5" fill="#e4e8f0" opacity=".7"/><rect x="33.5" y="11.4" width="105.5" height="76" fill="#343843" opacity=".93"/><rect x="33.5" y="11.4" width="105.5" height="4" fill="#30343e"/><circle cx="35" cy="13.4" r="0.7" fill="#e0524a"/><circle cx="37.8" cy="13.4" r="0.7" fill="#e8c04a"/><circle cx="40.6" cy="13.4" r="0.7" fill="#b8d04a"/><rect x="79" y="13" width="23" height="0.8" fill="#c8ccd6" opacity=".55"/><rect x="46" y="17" width="9" height="0.9" fill="#c8ccd6" opacity=".6"/><rect x="68" y="17" width="6" height="0.9" fill="#c8ccd6" opacity=".5"/><rect x="77.6" y="16.6" width="2.6" height="1.6" fill="#dfe3ea" opacity=".7"/><rect x="41" y="23" width="22" height="3.6" fill="#4a5268"/><rect x="42" y="23.7" width="1.6" height="1.6" fill="#c8ccd6" opacity=".8"/><rect x="44.6" y="24.0" width="14" height="0.9" fill="#c8ccd6" opacity=".5"/><rect x="42" y="27.3" width="1.6" height="1.6" fill="#c8ccd6" opacity=".8"/><rect x="44.6" y="27.6" width="7" height="0.9" fill="#c8ccd6" opacity=".5"/><rect x="42" y="31.1" width="1.6" height="1.6" fill="#c8ccd6" opacity=".8"/><rect x="44.6" y="31.400000000000002" width="8" height="0.9" fill="#c8ccd6" opacity=".5"/><rect x="42" y="34.699999999999996" width="1.6" height="1.6" fill="#c8ccd6" opacity=".8"/><rect x="44.6" y="35.0" width="4" height="0.9" fill="#c8ccd6" opacity=".5"/><rect x="42" y="38.5" width="1.6" height="1.6" fill="#c8ccd6" opacity=".8"/><rect x="44.6" y="38.800000000000004" width="9" height="0.9" fill="#c8ccd6" opacity=".5"/><rect x="42" y="42.3" width="1.6" height="1.6" fill="#c8ccd6" opacity=".8"/><rect x="44.6" y="42.6" width="4" height="0.9" fill="#c8ccd6" opacity=".5"/><rect x="42" y="45.9" width="1.6" height="1.6" fill="#c8ccd6" opacity=".8"/><rect x="44.6" y="46.2" width="6" height="0.9" fill="#c8ccd6" opacity=".5"/><rect x="42" y="49.5" width="1.6" height="1.6" fill="#c8ccd6" opacity=".8"/><rect x="44.6" y="49.800000000000004" width="5" height="0.9" fill="#c8ccd6" opacity=".5"/><rect x="42" y="53.3" width="1.6" height="1.6" fill="#e04048" opacity=".8"/><rect x="44.6" y="53.6" width="3" height="0.9" fill="#c8ccd6" opacity=".5"/><rect x="42" y="56.9" width="1.6" height="1.6" fill="#c8ccd6" opacity=".8"/><rect x="44.6" y="57.2" width="4" height="0.9" fill="#c8ccd6" opacity=".5"/><rect x="42" y="60.5" width="1.6" height="1.6" fill="#c8ccd6" opacity=".8"/><rect x="44.6" y="60.800000000000004" width="5" height="0.9" fill="#c8ccd6" opacity=".5"/><rect x="35.4" y="24" width="2" height="2" fill="#aab0bc" opacity=".5"/><rect x="35.4" y="28" width="2" height="2" fill="#aab0bc" opacity=".5"/><rect x="35.4" y="35.6" width="2" height="2" fill="#aab0bc" opacity=".5"/><rect x="35.4" y="41" width="2" height="2" fill="#aab0bc" opacity=".5"/><rect x="35.4" y="45.6" width="2" height="2" fill="#aab0bc" opacity=".5"/><rect x="35.4" y="50" width="2" height="2" fill="#aab0bc" opacity=".5"/><rect x="35.4" y="55" width="2" height="2" fill="#aab0bc" opacity=".5"/><rect x="35.4" y="60" width="2" height="2" fill="#aab0bc" opacity=".5"/><rect x="35.4" y="64.6" width="2" height="2" fill="#aab0bc" opacity=".5"/><rect x="41.4" y="66.4" width="7" height="0.8" fill="#aab0bc" opacity=".4"/><rect x="41.6" y="69.6" width="2" height="2.4" fill="#c8b8a0" opacity=".7"/><rect x="44.4" y="70.4" width="15" height="0.9" fill="#c8ccd6" opacity=".5"/><rect x="41.6" y="73.6" width="2" height="2.4" fill="#c8b8a0" opacity=".7"/><rect x="44.4" y="74.4" width="15" height="0.9" fill="#c8ccd6" opacity=".5"/><rect x="68" y="22.4" width="7" height="6" rx="0.5" fill="#4a5166" opacity="0.95"/><rect x="68" y="22.4" width="7" height="1.6" fill="#5d6680" opacity=".8"/><rect x="70.4" y="25.0" width="2.2" height="1.8" fill="#dfe3ea" opacity="0.75"/><rect x="67" y="31.4" width="9" height="0.9" fill="#c8ccd6" opacity=".45"/><rect x="83" y="22.4" width="7" height="6" rx="0.5" fill="#4a5166" opacity="0.95"/><rect x="83" y="22.4" width="7" height="1.6" fill="#5d6680" opacity=".8"/><rect x="85.4" y="25.0" width="2.2" height="1.8" fill="#dfe3ea" opacity="0.2"/><rect x="82" y="31.4" width="6" height="0.9" fill="#c8ccd6" opacity=".45"/><rect x="98" y="22.4" width="7" height="6" rx="0.5" fill="#4a5166" opacity="0.95"/><rect x="98" y="22.4" width="7" height="1.6" fill="#5d6680" opacity=".8"/><rect x="100.4" y="25.0" width="2.2" height="1.8" fill="#dfe3ea" opacity="0.75"/><rect x="97" y="31.4" width="8" height="0.9" fill="#c8ccd6" opacity=".45"/><rect x="113" y="22.4" width="7" height="6" rx="0.5" fill="#4a5166" opacity="0.95"/><rect x="113" y="22.4" width="7" height="1.6" fill="#5d6680" opacity=".8"/><rect x="115.4" y="25.0" width="2.2" height="1.8" fill="#dfe3ea" opacity="0.2"/><rect x="112" y="31.4" width="4" height="0.9" fill="#c8ccd6" opacity=".45"/><rect x="128" y="22.4" width="7" height="6" rx="0.5" fill="#4a5166" opacity="0.45"/><rect x="128" y="22.4" width="7" height="1.6" fill="#5d6680" opacity=".8"/><rect x="130.4" y="25.0" width="2.2" height="1.8" fill="#dfe3ea" opacity="0.75"/><rect x="127" y="31.4" width="6" height="0.9" fill="#c8ccd6" opacity=".45"/><rect x="68" y="36" width="7" height="6" rx="0.5" fill="#4a5166" opacity="0.95"/><rect x="68" y="36" width="7" height="1.6" fill="#5d6680" opacity=".8"/><rect x="70.4" y="38.6" width="2.2" height="1.8" fill="#dfe3ea" opacity="0.2"/><rect x="67" y="45" width="9" height="0.9" fill="#c8ccd6" opacity=".45"/><rect x="83" y="36" width="7" height="6" rx="0.5" fill="#4a5166" opacity="0.95"/><rect x="83" y="36" width="7" height="1.6" fill="#5d6680" opacity=".8"/><rect x="85.4" y="38.6" width="2.2" height="1.8" fill="#dfe3ea" opacity="0.75"/><rect x="82" y="45" width="6" height="0.9" fill="#c8ccd6" opacity=".45"/><rect x="98" y="36" width="7" height="6" rx="0.5" fill="#4a5166" opacity="0.95"/><rect x="98" y="36" width="7" height="1.6" fill="#5d6680" opacity=".8"/><rect x="100.4" y="38.6" width="2.2" height="1.8" fill="#dfe3ea" opacity="0.2"/><rect x="97" y="45" width="8" height="0.9" fill="#c8ccd6" opacity=".45"/><rect x="113" y="36" width="7" height="6" rx="0.5" fill="#4a5166" opacity="0.95"/><rect x="113" y="36" width="7" height="1.6" fill="#5d6680" opacity=".8"/><rect x="115.4" y="38.6" width="2.2" height="1.8" fill="#dfe3ea" opacity="0.75"/><rect x="112" y="45" width="4" height="0.9" fill="#c8ccd6" opacity=".45"/><rect x="128" y="36" width="7" height="6" rx="0.5" fill="#4a5166" opacity="0.95"/><rect x="128" y="36" width="7" height="1.6" fill="#5d6680" opacity=".8"/><rect x="130.4" y="38.6" width="2.2" height="1.8" fill="#dfe3ea" opacity="0.2"/><rect x="127" y="45" width="6" height="0.9" fill="#c8ccd6" opacity=".45"/><rect x="40" y="82" width="9.6" height="0.6" fill="#e07a4a"/><rect x="36" y="83.4" width="2" height="2.2" fill="#c8ccd6" opacity=".6"/><rect x="42" y="84.4" width="6" height="0.9" fill="#c8ccd6" opacity=".5"/><rect x="51" y="84.4" width="8" height="0.9" fill="#c8ccd6" opacity=".4"/><rect x="64" y="85" width="8" height="0.9" fill="#c8ccd6" opacity=".5"/><rect x="117" y="85" width="9" height="0.9" fill="#dfe3ea" opacity=".6"/><rect x="57.5" y="96.4" width="57.5" height="7.6" rx="1.6" fill="#20242c" opacity=".95"/><circle cx="61.4" cy="100.2" r="1.9" fill="#f0a088"/><rect x="65.7" y="98.4" width="3.6" height="3.6" rx="0.4" fill="#7ea6d8"/><rect x="71.8" y="98.4" width="3.6" height="3.6" rx="0.4" fill="#3a4050"/><circle cx="79.7" cy="100.2" r="1.9" fill="#f0706a"/><circle cx="85.8" cy="100.2" r="1.9" fill="#e8a8d0"/><circle cx="91.9" cy="100.2" r="1.9" fill="#8a8478"/><rect x="96.2" y="98.4" width="3.6" height="3.6" rx="0.4" fill="#d8c070"/><rect x="102.3" y="98.4" width="3.6" height="3.6" rx="0.4" fill="#2a2e38"/><circle cx="110.2" cy="100.2" r="1.9" fill="#4a5060"/><circle cx="61.4" cy="100.2" r="0.9" fill="#fff" opacity=".6"/><circle cx="79.7" cy="100.2" r="0.9" fill="#f8e060"/><rect x="103.2" y="99.4" width="2.2" height="1.6" fill="#aab0bc" opacity=".6"/><rect x="66.6" y="103" width="2" height="0.5" fill="#9ab"/></svg></div><div class="lbl" style="left:2px;top:698.5px"><span class="t" style="letter-spacing:0.05px">Nordic-darker</span></div>
<div class="card" style="left:277px;top:579px"><svg width="172" height="104.6" viewBox="0 0 172 104" preserveAspectRatio="none"><defs><radialGradient id="s5a" cx="0.32" cy="0.62" r="0.6"><stop offset="0" stop-color="#2a2926"/><stop offset="0.6" stop-color="#1a1a18"/><stop offset="1" stop-color="#0b0b0b"/></radialGradient><filter id="s5f" x="-30%" y="-30%" width="160%" height="160%"><feGaussianBlur stdDeviation="2.2"/></filter><filter id="s5h" x="-50%" y="-50%" width="200%" height="200%"><feGaussianBlur stdDeviation="6"/></filter><filter id="s5g"><feGaussianBlur stdDeviation="0.6"/></filter><clipPath id="s5c"><rect width="172" height="104"/></clipPath></defs><rect width="172" height="104" fill="#0c0c0c"/><rect width="172" height="104" fill="url(#s5a)"/><g clip-path="url(#s5c)"><g filter="url(#s5h)"><ellipse cx="40" cy="54" rx="30" ry="18" fill="#34342f" opacity=".6"/><ellipse cx="30" cy="86" rx="26" ry="9" fill="#30302c" opacity=".5"/><ellipse cx="122" cy="90" rx="30" ry="10" fill="#2c2a25" opacity=".7"/></g><g filter="url(#s5f)"><ellipse cx="89" cy="84" rx="18" ry="8" fill="#4c443a" opacity=".85"/><ellipse cx="80" cy="81" rx="6" ry="4" fill="#6e6254" opacity=".55"/><ellipse cx="99" cy="83" rx="7" ry="4.6" fill="#5e5446" opacity=".55"/><ellipse cx="86" cy="24" rx="9" ry="5" fill="#3a342c" opacity=".8"/></g><g filter="url(#s5g)"><ellipse cx="82.4" cy="19.6" rx="2.6" ry="3" fill="#c4bbae"/><ellipse cx="79" cy="25.4" rx="3.4" ry="1.8" fill="#7a6e60"/><ellipse cx="86" cy="25" rx="3.6" ry="2" fill="#5a5046"/><path d="M85 15L91 23L87 26Z" fill="#3a342c"/><path d="M78 79L82 88M95 79L99 90M86 80L85 90" stroke="#2a2622" stroke-width="1.6" opacity=".35"/></g></g><rect x="45.6" y="27.4" width="81.8" height="46.9" fill="#1f1e2a"/><rect x="45.6" y="27.4" width="18.4" height="46.9" fill="#252329"/><rect x="45.6" y="73.4" width="81.8" height="0.9" fill="#6a5430" opacity=".7"/><rect x="48" y="28.8" width="15" height="1" fill="#e0a040" opacity=".9"/><rect x="48.6" y="31" width="5" height="0.8" fill="#c89038" opacity=".6"/><rect x="48.6" y="32.8" width="4" height="0.8" fill="#c89038" opacity=".6"/><rect x="48.6" y="34.6" width="3" height="0.8" fill="#c89038" opacity=".6"/><rect x="48.6" y="36.4" width="6" height="0.8" fill="#c89038" opacity=".6"/><rect x="48.6" y="38.2" width="3" height="0.8" fill="#c89038" opacity=".6"/><rect x="48.6" y="40" width="4" height="0.8" fill="#c89038" opacity=".6"/><rect x="48.6" y="41.8" width="5" height="0.8" fill="#c89038" opacity=".6"/><rect x="48.6" y="43.6" width="2" height="0.8" fill="#c89038" opacity=".6"/><rect x="48.6" y="45.4" width="3" height="0.8" fill="#c89038" opacity=".6"/><rect x="48.6" y="47.2" width="4" height="0.8" fill="#c89038" opacity=".6"/><rect x="48.6" y="49" width="3" height="0.8" fill="#c89038" opacity=".6"/><rect x="48.6" y="50.8" width="2" height="0.8" fill="#c89038" opacity=".6"/><rect x="48.6" y="52.6" width="9" height="0.8" fill="#c89038" opacity=".6"/><rect x="48.6" y="54.4" width="11" height="0.8" fill="#c89038" opacity=".6"/><rect x="48.6" y="56.2" width="7" height="0.8" fill="#c89038" opacity=".6"/><rect x="48.6" y="58" width="3" height="0.8" fill="#c89038" opacity=".6"/><rect x="48.6" y="59.8" width="2" height="0.8" fill="#c89038" opacity=".6"/><rect x="48.6" y="61.6" width="5" height="0.8" fill="#c89038" opacity=".6"/><rect x="46.4" y="29" width="0.5" height="44" fill="#6a5430" opacity=".8"/><rect x="46" y="34" width="1.4" height="1.4" fill="#6a5430"/><rect x="71.0" y="31.0" width="3.8" height="3" rx="0.5" fill="#f0b040"/><rect x="71.5" y="32.0" width="2.8" height="1" fill="#fae0a0" opacity=".7"/><rect x="85.89999999999999" y="31.0" width="3.8" height="3" rx="0.5" fill="#f0b040"/><rect x="86.39999999999999" y="32.0" width="2.8" height="1" fill="#fae0a0" opacity=".7"/><rect x="101.0" y="31.0" width="3.8" height="3" rx="0.5" fill="#f0b040"/><rect x="101.5" y="32.0" width="2.8" height="1" fill="#fae0a0" opacity=".7"/><rect x="116.0" y="31.0" width="3.8" height="3" rx="0.5" fill="#f0b040"/><rect x="116.5" y="32.0" width="2.8" height="1" fill="#fae0a0" opacity=".7"/><rect x="71.0" y="36.699999999999996" width="3.8" height="3" rx="0.5" fill="#f0b040"/><rect x="71.5" y="37.699999999999996" width="2.8" height="1" fill="#fae0a0" opacity=".7"/><rect x="85.89999999999999" y="36.699999999999996" width="3.8" height="3" rx="0.5" fill="#f0b040"/><rect x="86.39999999999999" y="37.699999999999996" width="2.8" height="1" fill="#fae0a0" opacity=".7"/><rect x="101.0" y="36.699999999999996" width="3.8" height="3" rx="0.5" fill="#7a6a58"/><rect x="101.5" y="37.699999999999996" width="2.8" height="1" fill="#fae0a0" opacity=".7"/><rect x="116.0" y="36.699999999999996" width="3.8" height="3" rx="0.5" fill="#f0b040"/><rect x="116.5" y="37.699999999999996" width="2.8" height="1" fill="#fae0a0" opacity=".7"/><rect x="71.0" y="42.6" width="3.8" height="3" rx="0.5" fill="#f0b040"/><rect x="71.5" y="43.6" width="2.8" height="1" fill="#fae0a0" opacity=".7"/><rect x="69.9" y="46.2" width="6" height="0.6" fill="#c89038" opacity=".6"/><rect x="85.89999999999999" y="42.6" width="3.8" height="3" rx="0.5" fill="#f0b040"/><rect x="86.39999999999999" y="43.6" width="2.8" height="1" fill="#fae0a0" opacity=".7"/><rect x="84.8" y="46.2" width="6" height="0.6" fill="#c89038" opacity=".6"/><rect x="101.0" y="42.6" width="3.8" height="3" rx="0.5" fill="#8a7a60"/><rect x="99.9" y="46.2" width="6" height="0.6" fill="#c89038" opacity=".6"/><rect x="116.60000000000001" y="42.2" width="2.6" height="3.6" rx="0.3" fill="#eceae6"/><rect x="114.9" y="46.2" width="6" height="0.6" fill="#c89038" opacity=".6"/><rect x="71.60000000000001" y="47.8" width="2.6" height="3.6" rx="0.3" fill="#eceae6"/><rect x="69.9" y="51.8" width="6" height="0.6" fill="#c89038" opacity=".6"/><rect x="86.5" y="47.8" width="2.6" height="3.6" rx="0.3" fill="#eceae6"/><rect x="84.8" y="51.8" width="6" height="0.6" fill="#c89038" opacity=".6"/><rect x="101.60000000000001" y="47.8" width="2.6" height="3.6" rx="0.3" fill="#eceae6"/><rect x="99.9" y="51.8" width="6" height="0.6" fill="#c89038" opacity=".6"/><rect x="116.60000000000001" y="47.8" width="2.6" height="3.6" rx="0.3" fill="#eceae6"/><rect x="114.9" y="51.8" width="6" height="0.6" fill="#c89038" opacity=".6"/><rect x="71.60000000000001" y="53.8" width="2.6" height="3.6" rx="0.3" fill="#eceae6"/><rect x="69.9" y="57.8" width="6" height="0.6" fill="#c89038" opacity=".6"/><text x="150.4" y="12.6" text-anchor="middle" font-family="Liberation Sans,sans-serif" font-size="4.3" fill="#eaa63c" stroke="#eaa63c" stroke-width="0.15">Start of week</text><rect x="132" y="23" width="36" height="20" fill="#1a1a1c" opacity=".6"/><circle cx="150" cy="27.4" r="2" fill="#f4f0e0"/><circle cx="150.8" cy="26.6" r="1.2" fill="#f0b030"/><rect x="133" y="24" width="4" height="0.7" fill="#c8c0b0" opacity=".5"/><rect x="133" y="27" width="3" height="0.7" fill="#c8c0b0" opacity=".4"/><circle cx="136.2" cy="37.2" r="1.3" fill="#f0c050"/><rect x="135.2" y="40.4" width="2" height="0.7" fill="#b89050" opacity=".6"/><rect x="135.4" y="33.4" width="1.6" height="0.5" fill="#b89050" opacity=".5"/><circle cx="140.6" cy="37.2" r="1.3" fill="#e8e6e0"/><rect x="139.6" y="40.4" width="2" height="0.7" fill="#b89050" opacity=".6"/><rect x="139.8" y="33.4" width="1.6" height="0.5" fill="#b89050" opacity=".5"/><circle cx="145.1" cy="37.2" r="1.3" fill="#e8e6e0"/><rect x="144.1" y="40.4" width="2" height="0.7" fill="#b89050" opacity=".6"/><rect x="144.3" y="33.4" width="1.6" height="0.5" fill="#b89050" opacity=".5"/><circle cx="149.5" cy="37.2" r="1.3" fill="#e8e6e0"/><rect x="148.5" y="40.4" width="2" height="0.7" fill="#b89050" opacity=".6"/><rect x="148.7" y="33.4" width="1.6" height="0.5" fill="#b89050" opacity=".5"/><circle cx="154.0" cy="37.2" r="1.3" fill="#f0c050"/><rect x="153.0" y="40.4" width="2" height="0.7" fill="#b89050" opacity=".6"/><rect x="153.2" y="33.4" width="1.6" height="0.5" fill="#b89050" opacity=".5"/><circle cx="158.4" cy="37.2" r="1.3" fill="#e8e6e0"/><rect x="157.4" y="40.4" width="2" height="0.7" fill="#b89050" opacity=".6"/><rect x="157.6" y="33.4" width="1.6" height="0.5" fill="#b89050" opacity=".5"/><circle cx="162.9" cy="37.2" r="1.3" fill="#e8e6e0"/><rect x="161.9" y="40.4" width="2" height="0.7" fill="#b89050" opacity=".6"/><rect x="162.1" y="33.4" width="1.6" height="0.5" fill="#b89050" opacity=".5"/><rect x="156" y="45" width="12" height="0.6" fill="#b89050" opacity=".4"/><rect x="157" y="53.4" width="9" height="0.7" fill="#b89050" opacity=".4"/><rect x="159.0" y="58.4" width="2" height="3.6" fill="#e8b060"/><rect x="161.0" y="57.4" width="2" height="4.6" fill="#80d890"/><rect x="163.0" y="58" width="2" height="4" fill="#70b8e8"/><rect x="165.0" y="57.6" width="2" height="4.4" fill="#e070c0"/><rect x="156.6" y="64" width="3.4" height="0.7" fill="#b89050" opacity=".45"/><rect x="164" y="64" width="3.4" height="0.7" fill="#b89050" opacity=".45"/><rect x="156.6" y="65.6" width="3.4" height="0.7" fill="#b89050" opacity=".45"/><rect x="164" y="65.6" width="3.4" height="0.7" fill="#b89050" opacity=".45"/><rect x="156.6" y="67.2" width="3.4" height="0.7" fill="#b89050" opacity=".45"/><rect x="164" y="67.2" width="3.4" height="0.7" fill="#b89050" opacity=".45"/><rect x="156.6" y="68.8" width="3.4" height="0.7" fill="#b89050" opacity=".45"/><rect x="164" y="68.8" width="3.4" height="0.7" fill="#b89050" opacity=".45"/><rect x="140" y="63.4" width="8" height="0.8" fill="#b89050" opacity=".45"/><path d="M138.6 73C139 77 141 79.4 144 80.4" fill="none" stroke="#b89050" stroke-width="0.7" opacity=".7"/><rect x="143" y="72" width="3" height="1" fill="#b89050" opacity=".4"/><rect x="138" y="82" width="3.4" height="0.7" fill="#b89050" opacity=".45"/><rect x="147" y="82" width="3.4" height="0.7" fill="#b89050" opacity=".45"/><circle cx="161.6" cy="87" r="5" fill="none" stroke="#c8963c" stroke-width="0.6"/><rect x="160" y="86.4" width="3.4" height="1" fill="#b89050" opacity=".6"/><rect x="155" y="96.4" width="3" height="1" fill="#d8c8a0" opacity=".6"/><rect x="159.6" y="96.4" width="3" height="1" fill="#d8c8a0" opacity=".6"/><rect x="164.4" y="96.4" width="3" height="1" fill="#d8c8a0" opacity=".6"/><rect x="1.2" y="65.4" width="1.8" height="1.8" rx="0.3" fill="#4a80e0"/><rect x="4" y="65.60000000000001" width="9" height="0.7" fill="#c8963c" opacity=".55"/><rect x="4" y="66.7" width="5" height="0.6" fill="#8a7a5a" opacity=".45"/><rect x="1.2" y="68.4" width="1.8" height="1.8" rx="0.3" fill="#4a80e0"/><rect x="4" y="68.60000000000001" width="4" height="0.7" fill="#c8963c" opacity=".55"/><rect x="4" y="69.7" width="3" height="0.6" fill="#8a7a5a" opacity=".45"/><rect x="1.2" y="71.6" width="1.8" height="1.8" rx="0.3" fill="#5aa0e8"/><rect x="4" y="71.8" width="6" height="0.7" fill="#c8963c" opacity=".55"/><rect x="4" y="72.89999999999999" width="4" height="0.6" fill="#8a7a5a" opacity=".45"/><rect x="1.2" y="74.6" width="1.8" height="1.8" rx="0.3" fill="#4a80e0"/><rect x="4" y="74.8" width="3" height="0.7" fill="#c8963c" opacity=".55"/><rect x="4" y="75.89999999999999" width="0" height="0.6" fill="#8a7a5a" opacity=".45"/><rect x="1.2" y="77.6" width="1.8" height="1.8" rx="0.3" fill="#4a90e0"/><rect x="4" y="77.8" width="4" height="0.7" fill="#c8963c" opacity=".55"/><rect x="4" y="78.89999999999999" width="2" height="0.6" fill="#8a7a5a" opacity=".45"/><rect x="1.2" y="80.6" width="1.8" height="1.8" rx="0.3" fill="#58b070"/><rect x="4" y="80.8" width="4" height="0.7" fill="#c8963c" opacity=".55"/><rect x="4" y="81.89999999999999" width="5" height="0.6" fill="#8a7a5a" opacity=".45"/><rect x="1.2" y="83.6" width="1.8" height="1.8" rx="0.3" fill="#78a8e0"/><rect x="4" y="83.8" width="3" height="0.7" fill="#c8963c" opacity=".55"/><rect x="4" y="84.89999999999999" width="2" height="0.6" fill="#8a7a5a" opacity=".45"/><rect x="1.2" y="86.6" width="1.8" height="1.8" rx="0.3" fill="#f08a30"/><rect x="4" y="86.8" width="3" height="0.7" fill="#c8963c" opacity=".55"/><rect x="4" y="87.89999999999999" width="3" height="0.6" fill="#8a7a5a" opacity=".45"/><rect x="1.4" y="92.10000000000001" width="1.4" height="1.4" fill="#8a8a80" opacity=".6"/><rect x="4" y="92.4" width="6" height="0.7" fill="#a8a498" opacity=".5"/><rect x="1.4" y="94.7" width="1.4" height="1.4" fill="#8a8a80" opacity=".6"/><rect x="4" y="95" width="3" height="0.7" fill="#a8a498" opacity=".5"/><rect x="1.4" y="96.7" width="1.4" height="1.4" fill="#8a8a80" opacity=".6"/><rect x="4" y="97" width="8" height="0.7" fill="#a8a498" opacity=".5"/><rect x="1.4" y="99.4" width="20" height="0.6" fill="#c8963c" opacity=".5"/><rect x="0" y="100.6" width="172" height="3.4" fill="#121214" opacity=".8"/><circle cx="80.6" cy="102.4" r="0.9" fill="#4a90f0"/><circle cx="84.1" cy="102.4" r="0.9" fill="#3a70f0"/><circle cx="87.6" cy="102.4" r="0.9" fill="#4aa0f0"/><circle cx="91.1" cy="102.4" r="0.9" fill="#f08a30"/><rect x="1" y="101.8" width="1" height="1.2" fill="#c8963c" opacity=".55"/><rect x="3.4" y="101.8" width="2" height="1.2" fill="#c8963c" opacity=".55"/><rect x="6.6" y="101.8" width="1.4" height="1.2" fill="#c8963c" opacity=".55"/><rect x="9.4" y="101.8" width="1.6" height="1.2" fill="#c8963c" opacity=".55"/><rect x="12.6" y="101.8" width="1.4" height="1.2" fill="#c8963c" opacity=".55"/><rect x="15.6" y="101.8" width="1.6" height="1.2" fill="#c8963c" opacity=".55"/><rect x="18.4" y="101.8" width="1" height="1.2" fill="#c8963c" opacity=".55"/><rect x="21" y="101.8" width="1" height="1.2" fill="#c8963c" opacity=".55"/><rect x="146" y="102" width="4" height="0.9" fill="#c8963c" opacity=".5"/><rect x="151" y="102" width="3" height="0.9" fill="#c8963c" opacity=".5"/><rect x="155" y="102" width="5" height="0.9" fill="#c8963c" opacity=".5"/><rect x="161" y="102" width="2" height="0.9" fill="#c8963c" opacity=".5"/><rect x="167" y="102" width="3.4" height="0.9" fill="#c8963c" opacity=".5"/></svg></div><div class="lbl" style="left:245px;top:698.5px"><span class="t" style="letter-spacing:-0.29px">Stone</span></div>
</div>
<div id="mhdr"><span class="t" id="h1" style="letter-spacing:-0.015px">Tema global</span><span class="sw off" id="nsw"><b></b></span><span class="t" id="nlabel" style="letter-spacing:-0.072px">Cambiar al modo oscuro durante la noche</span><svg id="dl" width="14" height="14" viewBox="0 0 14 14"><path d="M4.9 5V1.4H9.1V5M2 5.3 7 10.3 12 5.3M1.4 10.9V12.5H12.6V10.9" fill="none" stroke="#f3f4f6" stroke-width="1.25"/></svg><span class="t" id="getnew" style="letter-spacing:-0.215px">Obtener novedades...</span></div>
<div class="hsep" style="left:0;right:0;top:31px"></div>
<div id="foot"><span class="btn" style="left:6px;width:80px"><span class="t" style="letter-spacing:-0.434px">Ayuda</span></span><span class="btn" style="left:96px;width:133px"><span class="t" style="letter-spacing:-0.098px">Predeterminados</span></span></div>
</div>
<div id="vs1"></div><div id="vs2"></div>
<div class="anno" style="left:270px;top:55px;width:276px;height:49px"></div><div class="anno" style="left:1046px;top:460px;width:223px;height:161px"></div>
</div></div>
</body></html>
